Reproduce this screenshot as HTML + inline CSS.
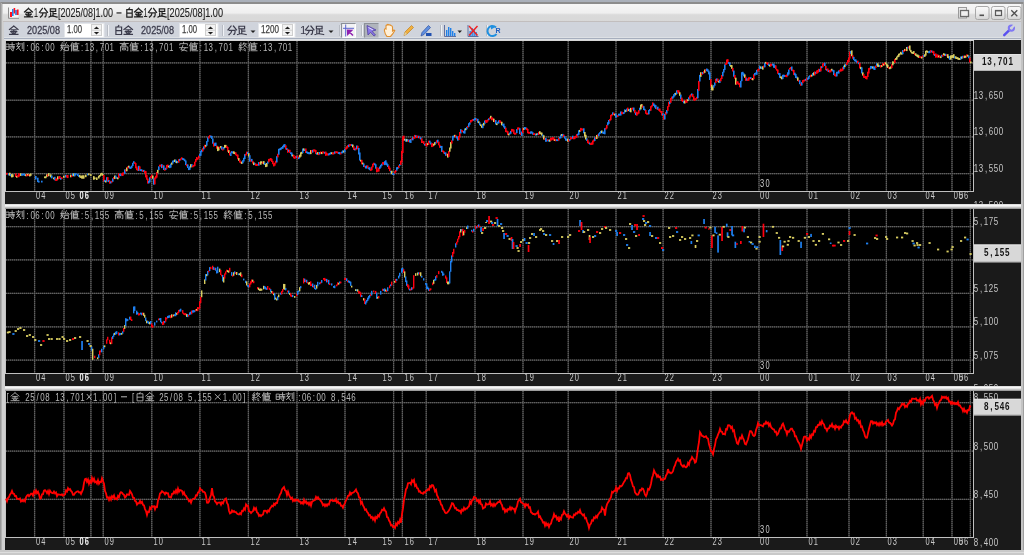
<!DOCTYPE html><html><head><meta charset="utf-8"><style>html,body{margin:0;padding:0;background:#c8c8c8;overflow:hidden}svg{display:block;will-change:transform}</style></head><body>
<svg width="1024" height="555" viewBox="0 0 1024 555" shape-rendering="crispEdges">
<defs>
<linearGradient id="tb" x1="0" y1="0" x2="0" y2="1">
<stop offset="0" stop-color="#f6f6f6"/><stop offset="0.5" stop-color="#efefef"/><stop offset="0.6" stop-color="#dadada"/><stop offset="1" stop-color="#d8d8d8"/>
</linearGradient>
<linearGradient id="btn" x1="0" y1="0" x2="0" y2="1">
<stop offset="0" stop-color="#fafafa"/><stop offset="0.5" stop-color="#ececec"/><stop offset="1" stop-color="#d4d4d4"/>
</linearGradient>
<linearGradient id="sep" x1="0" y1="0" x2="0" y2="1">
<stop offset="0" stop-color="#d8d8d8"/><stop offset="0.35" stop-color="#ffffff"/><stop offset="0.7" stop-color="#f0f0f0"/><stop offset="1" stop-color="#a8a8a8"/>
</linearGradient>
<clipPath id="cp0"><rect x="0" y="40" width="1024" height="164"/></clipPath>
<clipPath id="cp1"><rect x="0" y="209" width="1024" height="177"/></clipPath>
<clipPath id="cp2"><rect x="0" y="391" width="1024" height="159"/></clipPath>
</defs>
<rect x="0" y="0" width="1024" height="555" fill="#c8c8c8"/>
<rect x="0" y="0" width="1024" height="2" fill="#aab0ba"/>
<rect x="0" y="2" width="1024" height="2" fill="#8c8c8c"/>
<rect x="0" y="2" width="1" height="553" fill="#989898"/>
<rect x="1" y="3" width="1" height="552" fill="#b0b0b0"/>
<rect x="2" y="4" width="3" height="551" fill="#d0d0d0"/>
<rect x="1021" y="4" width="3" height="551" fill="#c4c4c4"/>
<rect x="1023" y="2" width="1" height="553" fill="#a0a0a0"/>
<rect x="0" y="550" width="1024" height="5" fill="#c8c8c8"/>
<rect x="0" y="552" width="1024" height="1" fill="#dcdcdc"/>
<rect x="3" y="4" width="1018" height="18" fill="url(#tb)"/>
<rect x="3" y="21" width="1018" height="1" fill="#c2bebe"/>
<rect x="4" y="22" width="1017" height="16" fill="#d0d4dc"/>
<rect x="4" y="37" width="1017" height="1" fill="#dde0e4"/>
<rect x="4" y="38" width="1017" height="1" fill="#a6aebd"/>
<rect x="4" y="39" width="1017" height="1" fill="#dfe2e6"/>
<g shape-rendering="auto">
<path d="M8.5 7.5V18.3H19" stroke="#909090" stroke-width="1" fill="none"/>
<rect x="9.5" y="7.5" width="9" height="10" fill="#f4f4f4"/>
<rect x="10" y="12" width="2" height="5" fill="#ff1020"/>
<rect x="12" y="9" width="1.6" height="7" fill="#1e88f0"/>
<rect x="13.6" y="8" width="1.6" height="5.5" fill="#ff1020"/>
<rect x="15.2" y="10" width="1.6" height="5" fill="#2a70d8"/>
<rect x="16.8" y="9.5" width="1.8" height="5.5" fill="#ff1020"/>
</g>
<g shape-rendering="auto">
<path transform="translate(24.00,8.00) scale(0.900,0.950)" d="M5 0.5L0.5 4.2M5 0.5L9.5 4.2M2.5 4.6H7.5M1.8 6.5H8.2M5 4.6V9.2M3 7.3L3.8 8.5M7 7.3L6.2 8.5M0.6 9.3H9.4" fill="none" stroke="#202020" stroke-width="1.32" stroke-linecap="square"/>
<text x="34" y="16.8" font-family="Liberation Sans" font-size="12" fill="#202020" stroke="#202020" stroke-width="0.12" textLength="4" lengthAdjust="spacingAndGlyphs" xml:space="preserve">1</text>
<path transform="translate(39.00,8.00) scale(0.900,0.950)" d="M3.8 0.5L0.5 4.6M6.2 0.5L9.5 4.6M2 5.2H8M8 5.2Q8 9.5 6.6 9.3M4.6 5.2Q4 8.5 1.6 9.6" fill="none" stroke="#202020" stroke-width="1.32" stroke-linecap="square"/>
<path transform="translate(48.50,8.00) scale(0.900,0.950)" d="M2 0.8H8V3.6H2ZM5 3.6V8.6M5 6H8.3M2.4 5.2V8.4M0.6 9.5Q3 7.8 9.6 9.5" fill="none" stroke="#202020" stroke-width="1.32" stroke-linecap="square"/>
<text x="58" y="16.8" font-family="Liberation Sans" font-size="12" fill="#202020" stroke="#202020" stroke-width="0.12" textLength="55" lengthAdjust="spacingAndGlyphs" xml:space="preserve">[2025/08]1.00</text>
<rect x="116.5" y="12.3" width="5" height="1.3" fill="#303030"/>
<path transform="translate(125.00,8.00) scale(0.900,0.950)" d="M5 0L4 1.5M2 1.6H8V9.5H2ZM2 5.4H8" fill="none" stroke="#202020" stroke-width="1.32" stroke-linecap="square"/>
<path transform="translate(134.00,8.00) scale(0.900,0.950)" d="M5 0.5L0.5 4.2M5 0.5L9.5 4.2M2.5 4.6H7.5M1.8 6.5H8.2M5 4.6V9.2M3 7.3L3.8 8.5M7 7.3L6.2 8.5M0.6 9.3H9.4" fill="none" stroke="#202020" stroke-width="1.32" stroke-linecap="square"/>
<text x="143.5" y="16.8" font-family="Liberation Sans" font-size="12" fill="#202020" stroke="#202020" stroke-width="0.12" textLength="4" lengthAdjust="spacingAndGlyphs" xml:space="preserve">1</text>
<path transform="translate(148.00,8.00) scale(0.900,0.950)" d="M3.8 0.5L0.5 4.6M6.2 0.5L9.5 4.6M2 5.2H8M8 5.2Q8 9.5 6.6 9.3M4.6 5.2Q4 8.5 1.6 9.6" fill="none" stroke="#202020" stroke-width="1.32" stroke-linecap="square"/>
<path transform="translate(157.50,8.00) scale(0.900,0.950)" d="M2 0.8H8V3.6H2ZM5 3.6V8.6M5 6H8.3M2.4 5.2V8.4M0.6 9.5Q3 7.8 9.6 9.5" fill="none" stroke="#202020" stroke-width="1.32" stroke-linecap="square"/>
<text x="167" y="16.8" font-family="Liberation Sans" font-size="12" fill="#202020" stroke="#202020" stroke-width="0.12" textLength="56" lengthAdjust="spacingAndGlyphs" xml:space="preserve">[2025/08]1.00</text>
</g>
<g shape-rendering="auto">
<rect x="958.5" y="7.5" width="8" height="10.5" fill="#ececec" stroke="#9a9a9a" stroke-width="1"/>
<rect x="960.5" y="10.5" width="8" height="6" fill="#f0f0f0" stroke="#6a6a6a" stroke-width="1.3"/>
<rect x="975.5" y="6.5" width="13.5" height="13" rx="2" fill="url(#btn)" stroke="#a8a8a8" stroke-width="1"/>
<rect x="991.5" y="6.5" width="13.5" height="13" rx="2" fill="url(#btn)" stroke="#a8a8a8" stroke-width="1"/>
<rect x="1007.5" y="6.5" width="13.5" height="13" rx="2" fill="url(#btn)" stroke="#a8a8a8" stroke-width="1"/>
<rect x="979.5" y="14.5" width="4.5" height="1.6" fill="#505050"/>
<rect x="995.5" y="10.5" width="6" height="5" fill="none" stroke="#5a5a5a" stroke-width="1.2"/>
<rect x="995.5" y="10.2" width="6" height="1.2" fill="#5a5a5a"/>
<path d="M1011.3 10.3L1017.3 16.3M1017.3 10.3L1011.3 16.3" stroke="#505050" stroke-width="1.3"/>
</g>
<g shape-rendering="auto">
<path transform="translate(9.00,25.50) scale(0.950,0.950)" d="M5 0.5L0.5 4.2M5 0.5L9.5 4.2M2.5 4.6H7.5M1.8 6.5H8.2M5 4.6V9.2M3 7.3L3.8 8.5M7 7.3L6.2 8.5M0.6 9.3H9.4" fill="none" stroke="#3c3c4c" stroke-width="1.26" stroke-linecap="square"/>
<text x="27" y="34.2" font-family="Liberation Sans" font-size="11.5" fill="#3c3c4c" stroke="#3c3c4c" stroke-width="0.3" textLength="33" lengthAdjust="spacingAndGlyphs">2025/08</text>
<rect x="64.5" y="23.5" width="39.5" height="14" fill="#ffffff"/>
<rect x="64.5" y="23.5" width="39.5" height="14" fill="none" stroke="#e4e6ea" stroke-width="1"/>
<text x="67.0" y="33" font-family="Liberation Sans" font-size="11" fill="#404040" stroke="#404040" stroke-width="0.25" textLength="15" lengthAdjust="spacingAndGlyphs">1.00</text>
<rect x="91.5" y="24.5" width="10" height="11" fill="#f2f2f2" stroke="#cfcfcf" stroke-width="1"/>
<line x1="91.5" y1="30.2" x2="101.5" y2="30.2" stroke="#cfcfcf" stroke-width="1"/>
<path d="M93.9 29L96.5 26.4L99.1 29Z" fill="#202020"/>
<path d="M93.9 32L96.5 34.6L99.1 32Z" fill="#202020"/>
<rect x="107" y="25" width="1" height="11" fill="#b8bcc4"/>
<rect x="108" y="25" width="1" height="11" fill="#f0f2f6"/>
<path transform="translate(114.00,25.50) scale(0.950,0.950)" d="M5 0L4 1.5M2 1.6H8V9.5H2ZM2 5.4H8" fill="none" stroke="#3c3c4c" stroke-width="1.26" stroke-linecap="square"/>
<path transform="translate(123.50,25.50) scale(0.950,0.950)" d="M5 0.5L0.5 4.2M5 0.5L9.5 4.2M2.5 4.6H7.5M1.8 6.5H8.2M5 4.6V9.2M3 7.3L3.8 8.5M7 7.3L6.2 8.5M0.6 9.3H9.4" fill="none" stroke="#3c3c4c" stroke-width="1.26" stroke-linecap="square"/>
<text x="141" y="34.2" font-family="Liberation Sans" font-size="11.5" fill="#3c3c4c" stroke="#3c3c4c" stroke-width="0.3" textLength="33" lengthAdjust="spacingAndGlyphs">2025/08</text>
<rect x="179.5" y="23.5" width="38.5" height="14" fill="#ffffff"/>
<rect x="179.5" y="23.5" width="38.5" height="14" fill="none" stroke="#e4e6ea" stroke-width="1"/>
<text x="182.0" y="33" font-family="Liberation Sans" font-size="11" fill="#404040" stroke="#404040" stroke-width="0.25" textLength="15" lengthAdjust="spacingAndGlyphs">1.00</text>
<rect x="205.5" y="24.5" width="10" height="11" fill="#f2f2f2" stroke="#cfcfcf" stroke-width="1"/>
<line x1="205.5" y1="30.2" x2="215.5" y2="30.2" stroke="#cfcfcf" stroke-width="1"/>
<path d="M207.9 29L210.5 26.4L213.1 29Z" fill="#202020"/>
<path d="M207.9 32L210.5 34.6L213.1 32Z" fill="#202020"/>
<rect x="222" y="25" width="1" height="11" fill="#b8bcc4"/>
<rect x="223" y="25" width="1" height="11" fill="#f0f2f6"/>
<path transform="translate(227.50,25.50) scale(0.950,0.950)" d="M3.8 0.5L0.5 4.6M6.2 0.5L9.5 4.6M2 5.2H8M8 5.2Q8 9.5 6.6 9.3M4.6 5.2Q4 8.5 1.6 9.6" fill="none" stroke="#3c3c4c" stroke-width="1.26" stroke-linecap="square"/>
<path transform="translate(237.00,25.50) scale(0.950,0.950)" d="M2 0.8H8V3.6H2ZM5 3.6V8.6M5 6H8.3M2.4 5.2V8.4M0.6 9.5Q3 7.8 9.6 9.5" fill="none" stroke="#3c3c4c" stroke-width="1.26" stroke-linecap="square"/>
<path d="M250.5 30.5H255.5L253 33Z" fill="#202020"/>
<rect x="258.5" y="23.5" width="36.5" height="14" fill="#ffffff"/>
<rect x="258.5" y="23.5" width="36.5" height="14" fill="none" stroke="#e4e6ea" stroke-width="1"/>
<text x="261.0" y="33" font-family="Liberation Sans" font-size="11" fill="#404040" stroke="#404040" stroke-width="0.25" textLength="18" lengthAdjust="spacingAndGlyphs">1200</text>
<rect x="282.5" y="24.5" width="10" height="11" fill="#f2f2f2" stroke="#cfcfcf" stroke-width="1"/>
<line x1="282.5" y1="30.2" x2="292.5" y2="30.2" stroke="#cfcfcf" stroke-width="1"/>
<path d="M284.9 29L287.5 26.4L290.1 29Z" fill="#202020"/>
<path d="M284.9 32L287.5 34.6L290.1 32Z" fill="#202020"/>
<text x="300" y="34.2" font-family="Liberation Sans" font-size="11.5" fill="#3c3c4c" textLength="5">1</text>
<path transform="translate(305.00,25.50) scale(0.950,0.950)" d="M3.8 0.5L0.5 4.6M6.2 0.5L9.5 4.6M2 5.2H8M8 5.2Q8 9.5 6.6 9.3M4.6 5.2Q4 8.5 1.6 9.6" fill="none" stroke="#3c3c4c" stroke-width="1.26" stroke-linecap="square"/>
<path transform="translate(314.50,25.50) scale(0.950,0.950)" d="M2 0.8H8V3.6H2ZM5 3.6V8.6M5 6H8.3M2.4 5.2V8.4M0.6 9.5Q3 7.8 9.6 9.5" fill="none" stroke="#3c3c4c" stroke-width="1.26" stroke-linecap="square"/>
<path d="M328.5 30.5H333.5L331 33Z" fill="#202020"/>
<rect x="339" y="25" width="1" height="11" fill="#b8bcc4"/>
<rect x="340" y="25" width="1" height="11" fill="#f0f2f6"/>
<rect x="341.5" y="23.5" width="14" height="14" fill="#f2f2f4"/>
<path d="M341.5 37.5V23.5H355.5" stroke="#8c9098" stroke-width="1.2" fill="none"/>
<path d="M342.5 37.5H355.5V24" stroke="#ffffff" stroke-width="1" fill="none"/>
<path d="M345.7 24.5V36.5M343 28.3H354" stroke="#5a64d0" stroke-width="1"/>
<path d="M348 30.5L353 35.5M347.6 30.2L347.8 34.2L351.6 30.4Z" stroke="#9020b0" stroke-width="1.5" fill="#9020b0"/>
<rect x="361" y="25" width="1" height="11" fill="#b8bcc4"/>
<rect x="362" y="25" width="1" height="11" fill="#f0f2f6"/>
<rect x="364.5" y="23.5" width="14" height="14" fill="#b0b4bc"/>
<path d="M364.5 37.5V23.5H378.5" stroke="#8c9098" stroke-width="1.2" fill="none"/>
<path d="M367 25.5L376 30L372 31.2L375.5 35L374 36L370.5 32.3L368 35Z" fill="#8a78e8" stroke="#5040a0" stroke-width="0.8"/>
<path d="M368.5 27.5L373 30" stroke="#e8e4ff" stroke-width="1"/>
<path d="M384.5 31Q384 28 386 29V26Q386 25 387 25.3V24.6Q388 24 389 25Q390 24.5 391 25.5Q392 25.5 392.5 27V31Q394 29.5 394.8 30.5Q393 34 390.5 36.5H387Q385 34.5 384.5 31Z" fill="#fff0d8" stroke="#e09030" stroke-width="1.1"/>
<path d="M404 35.5L405 32L411.5 25.5L413.5 27.5L407 34Z" fill="#f0b040" stroke="#c08020" stroke-width="0.7"/>
<path d="M404 35.5L405 32L407 34Z" fill="#e0d0a0"/>
<path d="M421 36L422 32.5L428.5 25.5L430.5 27.5L424 34.5Z" fill="#6090e0" stroke="#3050a0" stroke-width="0.7"/>
<path d="M426 33H431.5V36H426Z" fill="#2050b0"/>
<rect x="440" y="25" width="1" height="11" fill="#b8bcc4"/>
<rect x="441" y="25" width="1" height="11" fill="#f0f2f6"/>
<path d="M444.5 25V36.5H456" stroke="#6070a0" stroke-width="1" fill="none"/>
<rect x="446" y="30" width="1.4" height="6" fill="#2080e8"/>
<rect x="448" y="27" width="1.4" height="9" fill="#2080e8"/>
<rect x="450" y="28" width="1.4" height="8" fill="#2080e8"/>
<rect x="452" y="31" width="1.4" height="5" fill="#2080e8"/>
<rect x="454" y="33" width="1.4" height="3" fill="#2080e8"/>
<path d="M457.5 30.5H462L459.75 33Z" fill="#202020"/>
<path d="M468 25V36.5H478.5" stroke="#6070a0" stroke-width="1" fill="none"/>
<rect x="469.5" y="31" width="1.3" height="5" fill="#2080e8"/>
<rect x="471.5" y="28" width="1.3" height="8" fill="#2080e8"/>
<rect x="473.5" y="29" width="1.3" height="7" fill="#2080e8"/>
<rect x="475.5" y="32" width="1.3" height="4" fill="#2080e8"/>
<path d="M469 26L477.5 35.5M477.5 26L469 35.5" stroke="#f02020" stroke-width="1.4"/>
<rect x="486" y="25" width="1" height="11" fill="#b8bcc4"/>
<rect x="487" y="25" width="1" height="11" fill="#f0f2f6"/>
<path d="M496 27.5A5 5 0 1 0 496.5 34" stroke="#2090e0" stroke-width="2" fill="none"/>
<path d="M491 25L494.5 27.5L491 29.5Z" fill="#2090e0"/>
<text x="495.5" y="33" font-family="Liberation Sans" font-size="7" font-weight="bold" fill="#2060c0">R</text>
<path d="M1004.2 35.2L1009.3 30.1" stroke="#5a50f0" stroke-width="2.4" stroke-linecap="round"/>
<circle cx="1011.4" cy="28.1" r="2.6" fill="none" stroke="#8078f4" stroke-width="2.1"/>
<path d="M1011.6 27.9L1015.2 24.3" stroke="#d0d4dc" stroke-width="2.2"/>
</g>
<rect x="5" y="40" width="1016" height="510" fill="#1a1a1a"/>
<rect x="5" y="40" width="969" height="1" fill="#d6d6d6"/>
<rect x="6" y="41" width="967" height="150" fill="#000"/>
<rect x="5" y="41" width="1" height="151" fill="#c4c4c4"/>
<line x1="34.60" y1="41" x2="34.60" y2="191" stroke="#3a3a3a" stroke-width="1.3" shape-rendering="auto"/>
<line x1="34.60" y1="41" x2="34.60" y2="191" stroke="#606060" stroke-width="1.2" stroke-dasharray="1 1" shape-rendering="auto"/>
<line x1="64.00" y1="41" x2="64.00" y2="191" stroke="#3a3a3a" stroke-width="1.3" shape-rendering="auto"/>
<line x1="64.00" y1="41" x2="64.00" y2="191" stroke="#606060" stroke-width="1.2" stroke-dasharray="1 1" shape-rendering="auto"/>
<line x1="90.90" y1="41" x2="90.90" y2="191" stroke="#3a3a3a" stroke-width="1.3" shape-rendering="auto"/>
<line x1="90.90" y1="41" x2="90.90" y2="191" stroke="#606060" stroke-width="1.2" stroke-dasharray="1 1" shape-rendering="auto"/>
<line x1="103.25" y1="41" x2="103.25" y2="191" stroke="#3a3a3a" stroke-width="1.3" shape-rendering="auto"/>
<line x1="103.25" y1="41" x2="103.25" y2="191" stroke="#606060" stroke-width="1.2" stroke-dasharray="1 1" shape-rendering="auto"/>
<line x1="151.75" y1="41" x2="151.75" y2="191" stroke="#3a3a3a" stroke-width="1.3" shape-rendering="auto"/>
<line x1="151.75" y1="41" x2="151.75" y2="191" stroke="#606060" stroke-width="1.2" stroke-dasharray="1 1" shape-rendering="auto"/>
<line x1="199.90" y1="41" x2="199.90" y2="191" stroke="#3a3a3a" stroke-width="1.3" shape-rendering="auto"/>
<line x1="199.90" y1="41" x2="199.90" y2="191" stroke="#606060" stroke-width="1.2" stroke-dasharray="1 1" shape-rendering="auto"/>
<line x1="248.40" y1="41" x2="248.40" y2="191" stroke="#3a3a3a" stroke-width="1.3" shape-rendering="auto"/>
<line x1="248.40" y1="41" x2="248.40" y2="191" stroke="#606060" stroke-width="1.2" stroke-dasharray="1 1" shape-rendering="auto"/>
<line x1="297.00" y1="41" x2="297.00" y2="191" stroke="#3a3a3a" stroke-width="1.3" shape-rendering="auto"/>
<line x1="297.00" y1="41" x2="297.00" y2="191" stroke="#606060" stroke-width="1.2" stroke-dasharray="1 1" shape-rendering="auto"/>
<line x1="345.00" y1="41" x2="345.00" y2="191" stroke="#3a3a3a" stroke-width="1.3" shape-rendering="auto"/>
<line x1="345.00" y1="41" x2="345.00" y2="191" stroke="#606060" stroke-width="1.2" stroke-dasharray="1 1" shape-rendering="auto"/>
<line x1="393.60" y1="41" x2="393.60" y2="191" stroke="#3a3a3a" stroke-width="1.3" shape-rendering="auto"/>
<line x1="393.60" y1="41" x2="393.60" y2="191" stroke="#606060" stroke-width="1.2" stroke-dasharray="1 1" shape-rendering="auto"/>
<line x1="402.40" y1="41" x2="402.40" y2="191" stroke="#3a3a3a" stroke-width="1.3" shape-rendering="auto"/>
<line x1="402.40" y1="41" x2="402.40" y2="191" stroke="#606060" stroke-width="1.2" stroke-dasharray="1 1" shape-rendering="auto"/>
<line x1="426.25" y1="41" x2="426.25" y2="191" stroke="#3a3a3a" stroke-width="1.3" shape-rendering="auto"/>
<line x1="426.25" y1="41" x2="426.25" y2="191" stroke="#606060" stroke-width="1.2" stroke-dasharray="1 1" shape-rendering="auto"/>
<line x1="475.00" y1="41" x2="475.00" y2="191" stroke="#3a3a3a" stroke-width="1.3" shape-rendering="auto"/>
<line x1="475.00" y1="41" x2="475.00" y2="191" stroke="#606060" stroke-width="1.2" stroke-dasharray="1 1" shape-rendering="auto"/>
<line x1="523.00" y1="41" x2="523.00" y2="191" stroke="#3a3a3a" stroke-width="1.3" shape-rendering="auto"/>
<line x1="523.00" y1="41" x2="523.00" y2="191" stroke="#606060" stroke-width="1.2" stroke-dasharray="1 1" shape-rendering="auto"/>
<line x1="568.25" y1="41" x2="568.25" y2="191" stroke="#3a3a3a" stroke-width="1.3" shape-rendering="auto"/>
<line x1="568.25" y1="41" x2="568.25" y2="191" stroke="#606060" stroke-width="1.2" stroke-dasharray="1 1" shape-rendering="auto"/>
<line x1="616.00" y1="41" x2="616.00" y2="191" stroke="#3a3a3a" stroke-width="1.3" shape-rendering="auto"/>
<line x1="616.00" y1="41" x2="616.00" y2="191" stroke="#606060" stroke-width="1.2" stroke-dasharray="1 1" shape-rendering="auto"/>
<line x1="663.10" y1="41" x2="663.10" y2="191" stroke="#3a3a3a" stroke-width="1.3" shape-rendering="auto"/>
<line x1="663.10" y1="41" x2="663.10" y2="191" stroke="#606060" stroke-width="1.2" stroke-dasharray="1 1" shape-rendering="auto"/>
<line x1="711.00" y1="41" x2="711.00" y2="191" stroke="#3a3a3a" stroke-width="1.3" shape-rendering="auto"/>
<line x1="711.00" y1="41" x2="711.00" y2="191" stroke="#606060" stroke-width="1.2" stroke-dasharray="1 1" shape-rendering="auto"/>
<line x1="759.00" y1="41" x2="759.00" y2="191" stroke="#3a3a3a" stroke-width="1.3" shape-rendering="auto"/>
<line x1="759.00" y1="41" x2="759.00" y2="191" stroke="#606060" stroke-width="1.2" stroke-dasharray="1 1" shape-rendering="auto"/>
<line x1="807.00" y1="41" x2="807.00" y2="191" stroke="#3a3a3a" stroke-width="1.3" shape-rendering="auto"/>
<line x1="807.00" y1="41" x2="807.00" y2="191" stroke="#606060" stroke-width="1.2" stroke-dasharray="1 1" shape-rendering="auto"/>
<line x1="849.00" y1="41" x2="849.00" y2="191" stroke="#3a3a3a" stroke-width="1.3" shape-rendering="auto"/>
<line x1="849.00" y1="41" x2="849.00" y2="191" stroke="#606060" stroke-width="1.2" stroke-dasharray="1 1" shape-rendering="auto"/>
<line x1="886.40" y1="41" x2="886.40" y2="191" stroke="#3a3a3a" stroke-width="1.3" shape-rendering="auto"/>
<line x1="886.40" y1="41" x2="886.40" y2="191" stroke="#606060" stroke-width="1.2" stroke-dasharray="1 1" shape-rendering="auto"/>
<line x1="923.25" y1="41" x2="923.25" y2="191" stroke="#3a3a3a" stroke-width="1.3" shape-rendering="auto"/>
<line x1="923.25" y1="41" x2="923.25" y2="191" stroke="#606060" stroke-width="1.2" stroke-dasharray="1 1" shape-rendering="auto"/>
<line x1="952.00" y1="41" x2="952.00" y2="191" stroke="#3a3a3a" stroke-width="1.3" shape-rendering="auto"/>
<line x1="952.00" y1="41" x2="952.00" y2="191" stroke="#606060" stroke-width="1.2" stroke-dasharray="1 1" shape-rendering="auto"/>
<line x1="970.40" y1="41" x2="970.40" y2="191" stroke="#3a3a3a" stroke-width="1.3" shape-rendering="auto"/>
<line x1="970.40" y1="41" x2="970.40" y2="191" stroke="#606060" stroke-width="1.2" stroke-dasharray="1 1" shape-rendering="auto"/>
<line x1="6" y1="62.97" x2="973" y2="62.97" stroke="#3a3a3a" stroke-width="1.3" shape-rendering="auto"/>
<line x1="6" y1="62.97" x2="973" y2="62.97" stroke="#606060" stroke-width="1.2" stroke-dasharray="1 1" shape-rendering="auto"/>
<line x1="6" y1="100.27" x2="973" y2="100.27" stroke="#3a3a3a" stroke-width="1.3" shape-rendering="auto"/>
<line x1="6" y1="100.27" x2="973" y2="100.27" stroke="#606060" stroke-width="1.2" stroke-dasharray="1 1" shape-rendering="auto"/>
<line x1="6" y1="136.97" x2="973" y2="136.97" stroke="#3a3a3a" stroke-width="1.3" shape-rendering="auto"/>
<line x1="6" y1="136.97" x2="973" y2="136.97" stroke="#606060" stroke-width="1.2" stroke-dasharray="1 1" shape-rendering="auto"/>
<line x1="6" y1="173.70" x2="973" y2="173.70" stroke="#3a3a3a" stroke-width="1.3" shape-rendering="auto"/>
<line x1="6" y1="173.70" x2="973" y2="173.70" stroke="#606060" stroke-width="1.2" stroke-dasharray="1 1" shape-rendering="auto"/>
<rect x="973" y="41" width="1" height="151" fill="#c0c0c0"/>
<rect x="6" y="191" width="968" height="1" fill="#c0c0c0"/>
<rect x="6" y="209" width="967" height="164" fill="#000"/>
<rect x="5" y="209" width="1" height="165" fill="#c4c4c4"/>
<line x1="34.60" y1="209" x2="34.60" y2="373" stroke="#3a3a3a" stroke-width="1.3" shape-rendering="auto"/>
<line x1="34.60" y1="209" x2="34.60" y2="373" stroke="#606060" stroke-width="1.2" stroke-dasharray="1 1" shape-rendering="auto"/>
<line x1="64.00" y1="209" x2="64.00" y2="373" stroke="#3a3a3a" stroke-width="1.3" shape-rendering="auto"/>
<line x1="64.00" y1="209" x2="64.00" y2="373" stroke="#606060" stroke-width="1.2" stroke-dasharray="1 1" shape-rendering="auto"/>
<line x1="90.90" y1="209" x2="90.90" y2="373" stroke="#3a3a3a" stroke-width="1.3" shape-rendering="auto"/>
<line x1="90.90" y1="209" x2="90.90" y2="373" stroke="#606060" stroke-width="1.2" stroke-dasharray="1 1" shape-rendering="auto"/>
<line x1="103.25" y1="209" x2="103.25" y2="373" stroke="#3a3a3a" stroke-width="1.3" shape-rendering="auto"/>
<line x1="103.25" y1="209" x2="103.25" y2="373" stroke="#606060" stroke-width="1.2" stroke-dasharray="1 1" shape-rendering="auto"/>
<line x1="151.75" y1="209" x2="151.75" y2="373" stroke="#3a3a3a" stroke-width="1.3" shape-rendering="auto"/>
<line x1="151.75" y1="209" x2="151.75" y2="373" stroke="#606060" stroke-width="1.2" stroke-dasharray="1 1" shape-rendering="auto"/>
<line x1="199.90" y1="209" x2="199.90" y2="373" stroke="#3a3a3a" stroke-width="1.3" shape-rendering="auto"/>
<line x1="199.90" y1="209" x2="199.90" y2="373" stroke="#606060" stroke-width="1.2" stroke-dasharray="1 1" shape-rendering="auto"/>
<line x1="248.40" y1="209" x2="248.40" y2="373" stroke="#3a3a3a" stroke-width="1.3" shape-rendering="auto"/>
<line x1="248.40" y1="209" x2="248.40" y2="373" stroke="#606060" stroke-width="1.2" stroke-dasharray="1 1" shape-rendering="auto"/>
<line x1="297.00" y1="209" x2="297.00" y2="373" stroke="#3a3a3a" stroke-width="1.3" shape-rendering="auto"/>
<line x1="297.00" y1="209" x2="297.00" y2="373" stroke="#606060" stroke-width="1.2" stroke-dasharray="1 1" shape-rendering="auto"/>
<line x1="345.00" y1="209" x2="345.00" y2="373" stroke="#3a3a3a" stroke-width="1.3" shape-rendering="auto"/>
<line x1="345.00" y1="209" x2="345.00" y2="373" stroke="#606060" stroke-width="1.2" stroke-dasharray="1 1" shape-rendering="auto"/>
<line x1="393.60" y1="209" x2="393.60" y2="373" stroke="#3a3a3a" stroke-width="1.3" shape-rendering="auto"/>
<line x1="393.60" y1="209" x2="393.60" y2="373" stroke="#606060" stroke-width="1.2" stroke-dasharray="1 1" shape-rendering="auto"/>
<line x1="402.40" y1="209" x2="402.40" y2="373" stroke="#3a3a3a" stroke-width="1.3" shape-rendering="auto"/>
<line x1="402.40" y1="209" x2="402.40" y2="373" stroke="#606060" stroke-width="1.2" stroke-dasharray="1 1" shape-rendering="auto"/>
<line x1="426.25" y1="209" x2="426.25" y2="373" stroke="#3a3a3a" stroke-width="1.3" shape-rendering="auto"/>
<line x1="426.25" y1="209" x2="426.25" y2="373" stroke="#606060" stroke-width="1.2" stroke-dasharray="1 1" shape-rendering="auto"/>
<line x1="475.00" y1="209" x2="475.00" y2="373" stroke="#3a3a3a" stroke-width="1.3" shape-rendering="auto"/>
<line x1="475.00" y1="209" x2="475.00" y2="373" stroke="#606060" stroke-width="1.2" stroke-dasharray="1 1" shape-rendering="auto"/>
<line x1="523.00" y1="209" x2="523.00" y2="373" stroke="#3a3a3a" stroke-width="1.3" shape-rendering="auto"/>
<line x1="523.00" y1="209" x2="523.00" y2="373" stroke="#606060" stroke-width="1.2" stroke-dasharray="1 1" shape-rendering="auto"/>
<line x1="568.25" y1="209" x2="568.25" y2="373" stroke="#3a3a3a" stroke-width="1.3" shape-rendering="auto"/>
<line x1="568.25" y1="209" x2="568.25" y2="373" stroke="#606060" stroke-width="1.2" stroke-dasharray="1 1" shape-rendering="auto"/>
<line x1="616.00" y1="209" x2="616.00" y2="373" stroke="#3a3a3a" stroke-width="1.3" shape-rendering="auto"/>
<line x1="616.00" y1="209" x2="616.00" y2="373" stroke="#606060" stroke-width="1.2" stroke-dasharray="1 1" shape-rendering="auto"/>
<line x1="663.10" y1="209" x2="663.10" y2="373" stroke="#3a3a3a" stroke-width="1.3" shape-rendering="auto"/>
<line x1="663.10" y1="209" x2="663.10" y2="373" stroke="#606060" stroke-width="1.2" stroke-dasharray="1 1" shape-rendering="auto"/>
<line x1="711.00" y1="209" x2="711.00" y2="373" stroke="#3a3a3a" stroke-width="1.3" shape-rendering="auto"/>
<line x1="711.00" y1="209" x2="711.00" y2="373" stroke="#606060" stroke-width="1.2" stroke-dasharray="1 1" shape-rendering="auto"/>
<line x1="759.00" y1="209" x2="759.00" y2="373" stroke="#3a3a3a" stroke-width="1.3" shape-rendering="auto"/>
<line x1="759.00" y1="209" x2="759.00" y2="373" stroke="#606060" stroke-width="1.2" stroke-dasharray="1 1" shape-rendering="auto"/>
<line x1="807.00" y1="209" x2="807.00" y2="373" stroke="#3a3a3a" stroke-width="1.3" shape-rendering="auto"/>
<line x1="807.00" y1="209" x2="807.00" y2="373" stroke="#606060" stroke-width="1.2" stroke-dasharray="1 1" shape-rendering="auto"/>
<line x1="849.00" y1="209" x2="849.00" y2="373" stroke="#3a3a3a" stroke-width="1.3" shape-rendering="auto"/>
<line x1="849.00" y1="209" x2="849.00" y2="373" stroke="#606060" stroke-width="1.2" stroke-dasharray="1 1" shape-rendering="auto"/>
<line x1="886.40" y1="209" x2="886.40" y2="373" stroke="#3a3a3a" stroke-width="1.3" shape-rendering="auto"/>
<line x1="886.40" y1="209" x2="886.40" y2="373" stroke="#606060" stroke-width="1.2" stroke-dasharray="1 1" shape-rendering="auto"/>
<line x1="923.25" y1="209" x2="923.25" y2="373" stroke="#3a3a3a" stroke-width="1.3" shape-rendering="auto"/>
<line x1="923.25" y1="209" x2="923.25" y2="373" stroke="#606060" stroke-width="1.2" stroke-dasharray="1 1" shape-rendering="auto"/>
<line x1="952.00" y1="209" x2="952.00" y2="373" stroke="#3a3a3a" stroke-width="1.3" shape-rendering="auto"/>
<line x1="952.00" y1="209" x2="952.00" y2="373" stroke="#606060" stroke-width="1.2" stroke-dasharray="1 1" shape-rendering="auto"/>
<line x1="970.40" y1="209" x2="970.40" y2="373" stroke="#3a3a3a" stroke-width="1.3" shape-rendering="auto"/>
<line x1="970.40" y1="209" x2="970.40" y2="373" stroke="#606060" stroke-width="1.2" stroke-dasharray="1 1" shape-rendering="auto"/>
<line x1="6" y1="226.60" x2="973" y2="226.60" stroke="#3a3a3a" stroke-width="1.3" shape-rendering="auto"/>
<line x1="6" y1="226.60" x2="973" y2="226.60" stroke="#606060" stroke-width="1.2" stroke-dasharray="1 1" shape-rendering="auto"/>
<line x1="6" y1="259.90" x2="973" y2="259.90" stroke="#3a3a3a" stroke-width="1.3" shape-rendering="auto"/>
<line x1="6" y1="259.90" x2="973" y2="259.90" stroke="#606060" stroke-width="1.2" stroke-dasharray="1 1" shape-rendering="auto"/>
<line x1="6" y1="293.40" x2="973" y2="293.40" stroke="#3a3a3a" stroke-width="1.3" shape-rendering="auto"/>
<line x1="6" y1="293.40" x2="973" y2="293.40" stroke="#606060" stroke-width="1.2" stroke-dasharray="1 1" shape-rendering="auto"/>
<line x1="6" y1="326.90" x2="973" y2="326.90" stroke="#3a3a3a" stroke-width="1.3" shape-rendering="auto"/>
<line x1="6" y1="326.90" x2="973" y2="326.90" stroke="#606060" stroke-width="1.2" stroke-dasharray="1 1" shape-rendering="auto"/>
<line x1="6" y1="360.20" x2="973" y2="360.20" stroke="#3a3a3a" stroke-width="1.3" shape-rendering="auto"/>
<line x1="6" y1="360.20" x2="973" y2="360.20" stroke="#606060" stroke-width="1.2" stroke-dasharray="1 1" shape-rendering="auto"/>
<rect x="973" y="209" width="1" height="165" fill="#c0c0c0"/>
<rect x="6" y="373" width="968" height="1" fill="#c0c0c0"/>
<rect x="6" y="391" width="967" height="146" fill="#000"/>
<rect x="5" y="391" width="1" height="147" fill="#c4c4c4"/>
<line x1="34.60" y1="391" x2="34.60" y2="537" stroke="#3a3a3a" stroke-width="1.3" shape-rendering="auto"/>
<line x1="34.60" y1="391" x2="34.60" y2="537" stroke="#606060" stroke-width="1.2" stroke-dasharray="1 1" shape-rendering="auto"/>
<line x1="64.00" y1="391" x2="64.00" y2="537" stroke="#3a3a3a" stroke-width="1.3" shape-rendering="auto"/>
<line x1="64.00" y1="391" x2="64.00" y2="537" stroke="#606060" stroke-width="1.2" stroke-dasharray="1 1" shape-rendering="auto"/>
<line x1="90.90" y1="391" x2="90.90" y2="537" stroke="#3a3a3a" stroke-width="1.3" shape-rendering="auto"/>
<line x1="90.90" y1="391" x2="90.90" y2="537" stroke="#606060" stroke-width="1.2" stroke-dasharray="1 1" shape-rendering="auto"/>
<line x1="103.25" y1="391" x2="103.25" y2="537" stroke="#3a3a3a" stroke-width="1.3" shape-rendering="auto"/>
<line x1="103.25" y1="391" x2="103.25" y2="537" stroke="#606060" stroke-width="1.2" stroke-dasharray="1 1" shape-rendering="auto"/>
<line x1="151.75" y1="391" x2="151.75" y2="537" stroke="#3a3a3a" stroke-width="1.3" shape-rendering="auto"/>
<line x1="151.75" y1="391" x2="151.75" y2="537" stroke="#606060" stroke-width="1.2" stroke-dasharray="1 1" shape-rendering="auto"/>
<line x1="199.90" y1="391" x2="199.90" y2="537" stroke="#3a3a3a" stroke-width="1.3" shape-rendering="auto"/>
<line x1="199.90" y1="391" x2="199.90" y2="537" stroke="#606060" stroke-width="1.2" stroke-dasharray="1 1" shape-rendering="auto"/>
<line x1="248.40" y1="391" x2="248.40" y2="537" stroke="#3a3a3a" stroke-width="1.3" shape-rendering="auto"/>
<line x1="248.40" y1="391" x2="248.40" y2="537" stroke="#606060" stroke-width="1.2" stroke-dasharray="1 1" shape-rendering="auto"/>
<line x1="297.00" y1="391" x2="297.00" y2="537" stroke="#3a3a3a" stroke-width="1.3" shape-rendering="auto"/>
<line x1="297.00" y1="391" x2="297.00" y2="537" stroke="#606060" stroke-width="1.2" stroke-dasharray="1 1" shape-rendering="auto"/>
<line x1="345.00" y1="391" x2="345.00" y2="537" stroke="#3a3a3a" stroke-width="1.3" shape-rendering="auto"/>
<line x1="345.00" y1="391" x2="345.00" y2="537" stroke="#606060" stroke-width="1.2" stroke-dasharray="1 1" shape-rendering="auto"/>
<line x1="393.60" y1="391" x2="393.60" y2="537" stroke="#3a3a3a" stroke-width="1.3" shape-rendering="auto"/>
<line x1="393.60" y1="391" x2="393.60" y2="537" stroke="#606060" stroke-width="1.2" stroke-dasharray="1 1" shape-rendering="auto"/>
<line x1="402.40" y1="391" x2="402.40" y2="537" stroke="#3a3a3a" stroke-width="1.3" shape-rendering="auto"/>
<line x1="402.40" y1="391" x2="402.40" y2="537" stroke="#606060" stroke-width="1.2" stroke-dasharray="1 1" shape-rendering="auto"/>
<line x1="426.25" y1="391" x2="426.25" y2="537" stroke="#3a3a3a" stroke-width="1.3" shape-rendering="auto"/>
<line x1="426.25" y1="391" x2="426.25" y2="537" stroke="#606060" stroke-width="1.2" stroke-dasharray="1 1" shape-rendering="auto"/>
<line x1="475.00" y1="391" x2="475.00" y2="537" stroke="#3a3a3a" stroke-width="1.3" shape-rendering="auto"/>
<line x1="475.00" y1="391" x2="475.00" y2="537" stroke="#606060" stroke-width="1.2" stroke-dasharray="1 1" shape-rendering="auto"/>
<line x1="523.00" y1="391" x2="523.00" y2="537" stroke="#3a3a3a" stroke-width="1.3" shape-rendering="auto"/>
<line x1="523.00" y1="391" x2="523.00" y2="537" stroke="#606060" stroke-width="1.2" stroke-dasharray="1 1" shape-rendering="auto"/>
<line x1="568.25" y1="391" x2="568.25" y2="537" stroke="#3a3a3a" stroke-width="1.3" shape-rendering="auto"/>
<line x1="568.25" y1="391" x2="568.25" y2="537" stroke="#606060" stroke-width="1.2" stroke-dasharray="1 1" shape-rendering="auto"/>
<line x1="616.00" y1="391" x2="616.00" y2="537" stroke="#3a3a3a" stroke-width="1.3" shape-rendering="auto"/>
<line x1="616.00" y1="391" x2="616.00" y2="537" stroke="#606060" stroke-width="1.2" stroke-dasharray="1 1" shape-rendering="auto"/>
<line x1="663.10" y1="391" x2="663.10" y2="537" stroke="#3a3a3a" stroke-width="1.3" shape-rendering="auto"/>
<line x1="663.10" y1="391" x2="663.10" y2="537" stroke="#606060" stroke-width="1.2" stroke-dasharray="1 1" shape-rendering="auto"/>
<line x1="711.00" y1="391" x2="711.00" y2="537" stroke="#3a3a3a" stroke-width="1.3" shape-rendering="auto"/>
<line x1="711.00" y1="391" x2="711.00" y2="537" stroke="#606060" stroke-width="1.2" stroke-dasharray="1 1" shape-rendering="auto"/>
<line x1="759.00" y1="391" x2="759.00" y2="537" stroke="#3a3a3a" stroke-width="1.3" shape-rendering="auto"/>
<line x1="759.00" y1="391" x2="759.00" y2="537" stroke="#606060" stroke-width="1.2" stroke-dasharray="1 1" shape-rendering="auto"/>
<line x1="807.00" y1="391" x2="807.00" y2="537" stroke="#3a3a3a" stroke-width="1.3" shape-rendering="auto"/>
<line x1="807.00" y1="391" x2="807.00" y2="537" stroke="#606060" stroke-width="1.2" stroke-dasharray="1 1" shape-rendering="auto"/>
<line x1="849.00" y1="391" x2="849.00" y2="537" stroke="#3a3a3a" stroke-width="1.3" shape-rendering="auto"/>
<line x1="849.00" y1="391" x2="849.00" y2="537" stroke="#606060" stroke-width="1.2" stroke-dasharray="1 1" shape-rendering="auto"/>
<line x1="886.40" y1="391" x2="886.40" y2="537" stroke="#3a3a3a" stroke-width="1.3" shape-rendering="auto"/>
<line x1="886.40" y1="391" x2="886.40" y2="537" stroke="#606060" stroke-width="1.2" stroke-dasharray="1 1" shape-rendering="auto"/>
<line x1="923.25" y1="391" x2="923.25" y2="537" stroke="#3a3a3a" stroke-width="1.3" shape-rendering="auto"/>
<line x1="923.25" y1="391" x2="923.25" y2="537" stroke="#606060" stroke-width="1.2" stroke-dasharray="1 1" shape-rendering="auto"/>
<line x1="952.00" y1="391" x2="952.00" y2="537" stroke="#3a3a3a" stroke-width="1.3" shape-rendering="auto"/>
<line x1="952.00" y1="391" x2="952.00" y2="537" stroke="#606060" stroke-width="1.2" stroke-dasharray="1 1" shape-rendering="auto"/>
<line x1="970.40" y1="391" x2="970.40" y2="537" stroke="#3a3a3a" stroke-width="1.3" shape-rendering="auto"/>
<line x1="970.40" y1="391" x2="970.40" y2="537" stroke="#606060" stroke-width="1.2" stroke-dasharray="1 1" shape-rendering="auto"/>
<line x1="6" y1="402.60" x2="973" y2="402.60" stroke="#3a3a3a" stroke-width="1.3" shape-rendering="auto"/>
<line x1="6" y1="402.60" x2="973" y2="402.60" stroke="#606060" stroke-width="1.2" stroke-dasharray="1 1" shape-rendering="auto"/>
<line x1="6" y1="451.20" x2="973" y2="451.20" stroke="#3a3a3a" stroke-width="1.3" shape-rendering="auto"/>
<line x1="6" y1="451.20" x2="973" y2="451.20" stroke="#606060" stroke-width="1.2" stroke-dasharray="1 1" shape-rendering="auto"/>
<line x1="6" y1="499.40" x2="973" y2="499.40" stroke="#3a3a3a" stroke-width="1.3" shape-rendering="auto"/>
<line x1="6" y1="499.40" x2="973" y2="499.40" stroke="#606060" stroke-width="1.2" stroke-dasharray="1 1" shape-rendering="auto"/>
<rect x="973" y="391" width="1" height="147" fill="#c0c0c0"/>
<rect x="6" y="537" width="968" height="1" fill="#c0c0c0"/>
<rect x="5" y="204" width="1016" height="1" fill="#e0e0e0"/>
<rect x="5" y="205" width="1016" height="1" fill="#f6f6f6"/>
<rect x="5" y="206" width="1016" height="1" fill="#e4e4e4"/>
<rect x="5" y="207" width="1016" height="1" fill="#c4c4c4"/>
<rect x="5" y="208" width="1016" height="1" fill="#9c9c9c"/>
<rect x="5" y="386" width="1016" height="1" fill="#e0e0e0"/>
<rect x="5" y="387" width="1016" height="1" fill="#f6f6f6"/>
<rect x="5" y="388" width="1016" height="1" fill="#e4e4e4"/>
<rect x="5" y="389" width="1016" height="1" fill="#c4c4c4"/>
<rect x="5" y="390" width="1016" height="1" fill="#9c9c9c"/>
<g shape-rendering="auto">
<rect x="6.0" y="172.8" width="1.6" height="1.9" fill="#ff0010"/>
<rect x="8.0" y="173.5" width="1.6" height="1.9" fill="#1e80f0"/>
<rect x="9.0" y="172.7" width="1.6" height="2.9" fill="#d8cc60"/>
<rect x="10.0" y="174.1" width="1.6" height="2.2" fill="#1e80f0"/>
<rect x="11.0" y="174.1" width="1.6" height="3.3" fill="#d8cc60"/>
<rect x="12.0" y="174.3" width="1.6" height="2.8" fill="#d8cc60"/>
<rect x="15.0" y="173.4" width="1.6" height="3.6" fill="#ff0010"/>
<rect x="16.0" y="175.9" width="1.6" height="1.8" fill="#d8cc60"/>
<rect x="17.0" y="175.3" width="1.6" height="1.8" fill="#ff0010"/>
<rect x="18.0" y="173.2" width="1.6" height="4.0" fill="#ff0010"/>
<rect x="19.0" y="174.1" width="1.6" height="1.8" fill="#ff0010"/>
<rect x="20.0" y="173.3" width="1.6" height="2.6" fill="#d8cc60"/>
<rect x="21.0" y="173.7" width="1.6" height="1.8" fill="#1e80f0"/>
<rect x="22.0" y="173.8" width="1.6" height="1.8" fill="#1e80f0"/>
<rect x="23.0" y="173.4" width="1.6" height="1.8" fill="#1e80f0"/>
<rect x="24.0" y="174.1" width="1.6" height="1.8" fill="#1e80f0"/>
<rect x="25.0" y="174.3" width="1.6" height="1.9" fill="#d8cc60"/>
<rect x="26.0" y="174.0" width="1.6" height="2.3" fill="#ff0010"/>
<rect x="27.0" y="173.7" width="1.6" height="1.8" fill="#d8cc60"/>
<rect x="28.0" y="174.2" width="1.6" height="1.8" fill="#ff0010"/>
<rect x="29.0" y="174.2" width="1.6" height="2.3" fill="#d8cc60"/>
<rect x="30.0" y="173.5" width="1.6" height="2.3" fill="#d8cc60"/>
<rect x="35.0" y="176.0" width="1.6" height="3.5" fill="#1e80f0"/>
<rect x="37.0" y="177.7" width="1.6" height="4.4" fill="#1e80f0"/>
<rect x="38.0" y="180.8" width="1.6" height="1.8" fill="#1e80f0"/>
<rect x="41.0" y="180.7" width="1.6" height="1.8" fill="#1e80f0"/>
<rect x="44.0" y="176.4" width="1.6" height="1.8" fill="#d8cc60"/>
<rect x="45.0" y="176.4" width="1.6" height="1.8" fill="#d8cc60"/>
<rect x="46.0" y="174.3" width="1.6" height="2.6" fill="#d8cc60"/>
<rect x="47.0" y="174.3" width="1.6" height="2.1" fill="#ff0010"/>
<rect x="48.0" y="173.1" width="1.6" height="3.1" fill="#d8cc60"/>
<rect x="50.0" y="174.3" width="1.6" height="3.0" fill="#d8cc60"/>
<rect x="51.0" y="175.6" width="1.6" height="2.8" fill="#1e80f0"/>
<rect x="53.0" y="177.5" width="1.6" height="1.8" fill="#d8cc60"/>
<rect x="54.0" y="176.8" width="1.6" height="3.5" fill="#1e80f0"/>
<rect x="55.0" y="178.6" width="1.6" height="2.3" fill="#ff0010"/>
<rect x="56.0" y="178.5" width="1.6" height="2.4" fill="#ff0010"/>
<rect x="57.0" y="176.3" width="1.6" height="3.1" fill="#d8cc60"/>
<rect x="58.0" y="176.8" width="1.6" height="1.8" fill="#ff0010"/>
<rect x="59.0" y="176.0" width="1.6" height="2.8" fill="#ff0010"/>
<rect x="60.0" y="177.9" width="1.6" height="1.8" fill="#1e80f0"/>
<rect x="61.0" y="177.2" width="1.6" height="1.8" fill="#ff0010"/>
<rect x="63.0" y="175.9" width="1.6" height="1.8" fill="#d8cc60"/>
<rect x="65.0" y="174.8" width="1.6" height="2.7" fill="#1e80f0"/>
<rect x="66.0" y="175.3" width="1.6" height="2.0" fill="#ff0010"/>
<rect x="67.0" y="175.0" width="1.6" height="3.1" fill="#ff0010"/>
<rect x="70.0" y="174.7" width="1.6" height="2.6" fill="#d8cc60"/>
<rect x="71.0" y="175.2" width="1.6" height="1.8" fill="#ff0010"/>
<rect x="72.0" y="173.5" width="1.6" height="2.4" fill="#1e80f0"/>
<rect x="73.0" y="173.4" width="1.6" height="2.9" fill="#d8cc60"/>
<rect x="74.0" y="173.3" width="1.6" height="3.0" fill="#1e80f0"/>
<rect x="75.0" y="173.2" width="1.6" height="2.0" fill="#1e80f0"/>
<rect x="77.0" y="173.7" width="1.6" height="2.2" fill="#1e80f0"/>
<rect x="78.0" y="175.1" width="1.6" height="1.8" fill="#1e80f0"/>
<rect x="79.0" y="174.9" width="1.6" height="2.6" fill="#d8cc60"/>
<rect x="80.0" y="176.1" width="1.6" height="1.8" fill="#d8cc60"/>
<rect x="81.0" y="175.5" width="1.6" height="3.1" fill="#d8cc60"/>
<rect x="82.0" y="175.4" width="1.6" height="3.2" fill="#d8cc60"/>
<rect x="83.0" y="175.4" width="1.6" height="3.2" fill="#d8cc60"/>
<rect x="85.0" y="174.6" width="1.6" height="2.6" fill="#d8cc60"/>
<rect x="87.0" y="173.6" width="1.6" height="1.8" fill="#1e80f0"/>
<rect x="88.0" y="173.4" width="1.6" height="1.8" fill="#d8cc60"/>
<rect x="90.0" y="174.1" width="1.6" height="1.8" fill="#d8cc60"/>
<rect x="93.0" y="176.1" width="1.6" height="3.7" fill="#d8cc60"/>
<rect x="94.0" y="177.4" width="1.6" height="1.8" fill="#d8cc60"/>
<rect x="96.0" y="177.4" width="1.6" height="2.6" fill="#d8cc60"/>
<rect x="98.0" y="175.7" width="1.6" height="2.8" fill="#d8cc60"/>
<rect x="99.0" y="175.0" width="1.6" height="1.8" fill="#d8cc60"/>
<rect x="100.0" y="173.4" width="1.6" height="2.5" fill="#d8cc60"/>
<rect x="101.0" y="172.8" width="1.6" height="1.8" fill="#d8cc60"/>
<rect x="102.0" y="173.7" width="1.6" height="2.0" fill="#d8cc60"/>
<rect x="103.0" y="175.0" width="1.6" height="6.5" fill="#ff0010"/>
<rect x="104.0" y="179.9" width="1.6" height="2.0" fill="#1e80f0"/>
<rect x="105.0" y="180.7" width="1.6" height="1.8" fill="#d8cc60"/>
<rect x="106.0" y="177.2" width="1.6" height="4.7" fill="#1e80f0"/>
<rect x="107.0" y="177.1" width="1.6" height="4.1" fill="#ff0010"/>
<rect x="108.0" y="180.0" width="1.6" height="2.1" fill="#1e80f0"/>
<rect x="109.0" y="180.7" width="1.6" height="3.0" fill="#ff0010"/>
<rect x="110.0" y="181.5" width="1.6" height="1.9" fill="#1e80f0"/>
<rect x="111.0" y="180.8" width="1.6" height="1.8" fill="#ff0010"/>
<rect x="112.0" y="178.3" width="1.6" height="3.4" fill="#1e80f0"/>
<rect x="113.0" y="177.1" width="1.6" height="2.2" fill="#ff0010"/>
<rect x="114.0" y="175.5" width="1.6" height="3.4" fill="#d8cc60"/>
<rect x="115.0" y="175.6" width="1.6" height="1.8" fill="#1e80f0"/>
<rect x="116.0" y="177.0" width="1.6" height="1.8" fill="#1e80f0"/>
<rect x="117.0" y="177.5" width="1.6" height="1.8" fill="#d8cc60"/>
<rect x="118.0" y="173.4" width="1.6" height="4.7" fill="#ff0010"/>
<rect x="119.0" y="173.8" width="1.6" height="1.8" fill="#1e80f0"/>
<rect x="120.0" y="174.3" width="1.6" height="1.8" fill="#1e80f0"/>
<rect x="121.0" y="173.5" width="1.6" height="1.9" fill="#ff0010"/>
<rect x="122.0" y="172.5" width="1.6" height="3.5" fill="#ff0010"/>
<rect x="123.0" y="172.5" width="1.6" height="1.8" fill="#ff0010"/>
<rect x="124.0" y="169.4" width="1.6" height="4.5" fill="#1e80f0"/>
<rect x="125.0" y="169.4" width="1.6" height="2.1" fill="#ff0010"/>
<rect x="126.0" y="167.5" width="1.6" height="3.7" fill="#d8cc60"/>
<rect x="127.0" y="166.4" width="1.6" height="2.3" fill="#ff0010"/>
<rect x="128.0" y="165.7" width="1.6" height="1.8" fill="#d8cc60"/>
<rect x="129.0" y="166.4" width="1.6" height="2.2" fill="#1e80f0"/>
<rect x="130.0" y="167.1" width="1.6" height="1.8" fill="#1e80f0"/>
<rect x="131.0" y="165.6" width="1.6" height="2.3" fill="#1e80f0"/>
<rect x="132.0" y="162.8" width="1.6" height="3.3" fill="#1e80f0"/>
<rect x="133.0" y="161.2" width="1.6" height="2.2" fill="#1e80f0"/>
<rect x="134.0" y="162.1" width="1.6" height="1.8" fill="#ff0010"/>
<rect x="135.0" y="163.1" width="1.6" height="5.2" fill="#ff0010"/>
<rect x="136.0" y="166.5" width="1.6" height="3.7" fill="#ff0010"/>
<rect x="137.0" y="168.5" width="1.6" height="2.3" fill="#ff0010"/>
<rect x="138.0" y="165.8" width="1.6" height="5.1" fill="#1e80f0"/>
<rect x="139.0" y="166.4" width="1.6" height="3.9" fill="#ff0010"/>
<rect x="140.0" y="169.2" width="1.6" height="1.8" fill="#1e80f0"/>
<rect x="141.0" y="169.4" width="1.6" height="1.9" fill="#1e80f0"/>
<rect x="142.0" y="170.0" width="1.6" height="1.8" fill="#ff0010"/>
<rect x="143.0" y="169.9" width="1.6" height="1.9" fill="#1e80f0"/>
<rect x="144.0" y="170.7" width="1.6" height="2.5" fill="#ff0010"/>
<rect x="145.0" y="171.0" width="1.6" height="6.4" fill="#ff0010"/>
<rect x="146.0" y="175.1" width="1.6" height="4.6" fill="#ff0010"/>
<rect x="147.0" y="178.6" width="1.6" height="5.0" fill="#ff0010"/>
<rect x="148.0" y="180.9" width="1.6" height="2.5" fill="#1e80f0"/>
<rect x="149.0" y="177.3" width="1.6" height="5.1" fill="#1e80f0"/>
<rect x="150.0" y="176.1" width="1.6" height="2.2" fill="#ff0010"/>
<rect x="151.0" y="174.6" width="1.6" height="2.2" fill="#ff0010"/>
<rect x="152.0" y="175.6" width="1.6" height="3.2" fill="#d8cc60"/>
<rect x="153.0" y="178.4" width="1.6" height="6.3" fill="#1e80f0"/>
<rect x="154.0" y="177.5" width="1.6" height="6.9" fill="#ff0010"/>
<rect x="155.0" y="175.7" width="1.6" height="2.9" fill="#ff0010"/>
<rect x="156.0" y="172.0" width="1.6" height="5.6" fill="#ff0010"/>
<rect x="157.0" y="169.8" width="1.6" height="3.1" fill="#d8cc60"/>
<rect x="158.0" y="166.3" width="1.6" height="3.8" fill="#1e80f0"/>
<rect x="159.0" y="164.7" width="1.6" height="1.9" fill="#ff0010"/>
<rect x="160.0" y="164.7" width="1.6" height="1.8" fill="#ff0010"/>
<rect x="161.0" y="164.2" width="1.6" height="3.9" fill="#1e80f0"/>
<rect x="162.0" y="165.1" width="1.6" height="2.4" fill="#ff0010"/>
<rect x="163.0" y="165.4" width="1.6" height="4.6" fill="#1e80f0"/>
<rect x="164.0" y="168.4" width="1.6" height="2.3" fill="#ff0010"/>
<rect x="165.0" y="167.7" width="1.6" height="2.2" fill="#1e80f0"/>
<rect x="166.0" y="164.9" width="1.6" height="3.7" fill="#ff0010"/>
<rect x="167.0" y="164.6" width="1.6" height="2.2" fill="#ff0010"/>
<rect x="168.0" y="165.7" width="1.6" height="1.8" fill="#d8cc60"/>
<rect x="169.0" y="165.2" width="1.6" height="2.9" fill="#1e80f0"/>
<rect x="170.0" y="163.6" width="1.6" height="4.0" fill="#1e80f0"/>
<rect x="171.0" y="162.5" width="1.6" height="2.2" fill="#d8cc60"/>
<rect x="172.0" y="160.6" width="1.6" height="3.0" fill="#1e80f0"/>
<rect x="173.0" y="160.3" width="1.6" height="1.8" fill="#1e80f0"/>
<rect x="174.0" y="159.5" width="1.6" height="2.5" fill="#d8cc60"/>
<rect x="175.0" y="159.7" width="1.6" height="3.1" fill="#1e80f0"/>
<rect x="176.0" y="161.1" width="1.6" height="2.1" fill="#d8cc60"/>
<rect x="177.0" y="161.1" width="1.6" height="1.8" fill="#1e80f0"/>
<rect x="178.0" y="159.2" width="1.6" height="3.4" fill="#ff0010"/>
<rect x="179.0" y="158.9" width="1.6" height="1.8" fill="#1e80f0"/>
<rect x="180.0" y="158.4" width="1.6" height="1.8" fill="#ff0010"/>
<rect x="181.0" y="157.3" width="1.6" height="1.8" fill="#ff0010"/>
<rect x="182.0" y="158.1" width="1.6" height="1.8" fill="#1e80f0"/>
<rect x="183.0" y="158.5" width="1.6" height="1.8" fill="#1e80f0"/>
<rect x="184.0" y="159.4" width="1.6" height="1.9" fill="#1e80f0"/>
<rect x="185.0" y="160.5" width="1.6" height="4.6" fill="#1e80f0"/>
<rect x="186.0" y="164.1" width="1.6" height="2.2" fill="#ff0010"/>
<rect x="187.0" y="164.5" width="1.6" height="3.5" fill="#1e80f0"/>
<rect x="188.0" y="167.5" width="1.6" height="2.6" fill="#1e80f0"/>
<rect x="189.0" y="166.3" width="1.6" height="3.5" fill="#1e80f0"/>
<rect x="190.0" y="164.2" width="1.6" height="3.3" fill="#d8cc60"/>
<rect x="191.0" y="164.1" width="1.6" height="2.5" fill="#1e80f0"/>
<rect x="192.0" y="165.5" width="1.6" height="1.8" fill="#ff0010"/>
<rect x="193.0" y="164.8" width="1.6" height="1.8" fill="#ff0010"/>
<rect x="194.0" y="161.7" width="1.6" height="4.4" fill="#ff0010"/>
<rect x="195.0" y="159.0" width="1.6" height="3.1" fill="#ff0010"/>
<rect x="196.0" y="157.0" width="1.6" height="3.2" fill="#ff0010"/>
<rect x="197.0" y="157.9" width="1.6" height="1.8" fill="#ff0010"/>
<rect x="198.0" y="155.6" width="1.6" height="3.0" fill="#ff0010"/>
<rect x="199.0" y="153.9" width="1.6" height="2.5" fill="#1e80f0"/>
<rect x="200.0" y="150.9" width="1.6" height="4.9" fill="#1e80f0"/>
<rect x="201.0" y="149.6" width="1.6" height="2.6" fill="#1e80f0"/>
<rect x="202.0" y="148.2" width="1.6" height="3.2" fill="#ff0010"/>
<rect x="203.0" y="146.4" width="1.6" height="3.0" fill="#1e80f0"/>
<rect x="204.0" y="144.8" width="1.6" height="3.4" fill="#ff0010"/>
<rect x="205.0" y="144.9" width="1.6" height="1.8" fill="#d8cc60"/>
<rect x="206.0" y="141.1" width="1.6" height="4.6" fill="#1e80f0"/>
<rect x="207.0" y="137.3" width="1.6" height="4.5" fill="#1e80f0"/>
<rect x="208.0" y="136.5" width="1.6" height="2.0" fill="#ff0010"/>
<rect x="209.0" y="135.1" width="1.6" height="1.8" fill="#ff0010"/>
<rect x="210.0" y="135.6" width="1.6" height="1.8" fill="#1e80f0"/>
<rect x="211.0" y="135.9" width="1.6" height="3.0" fill="#1e80f0"/>
<rect x="212.0" y="138.5" width="1.6" height="5.2" fill="#1e80f0"/>
<rect x="213.0" y="142.4" width="1.6" height="4.2" fill="#ff0010"/>
<rect x="214.0" y="143.2" width="1.6" height="2.7" fill="#1e80f0"/>
<rect x="215.0" y="142.6" width="1.6" height="3.4" fill="#1e80f0"/>
<rect x="216.0" y="145.6" width="1.6" height="3.1" fill="#ff0010"/>
<rect x="217.0" y="146.5" width="1.6" height="4.6" fill="#d8cc60"/>
<rect x="218.0" y="147.3" width="1.6" height="3.1" fill="#d8cc60"/>
<rect x="219.0" y="146.7" width="1.6" height="2.1" fill="#ff0010"/>
<rect x="220.0" y="146.0" width="1.6" height="1.8" fill="#d8cc60"/>
<rect x="221.0" y="146.6" width="1.6" height="3.1" fill="#1e80f0"/>
<rect x="222.0" y="148.7" width="1.6" height="1.8" fill="#ff0010"/>
<rect x="223.0" y="147.1" width="1.6" height="2.4" fill="#1e80f0"/>
<rect x="224.0" y="144.9" width="1.6" height="3.1" fill="#d8cc60"/>
<rect x="225.0" y="144.9" width="1.6" height="2.2" fill="#d8cc60"/>
<rect x="226.0" y="145.8" width="1.6" height="2.2" fill="#ff0010"/>
<rect x="227.0" y="147.0" width="1.6" height="4.8" fill="#ff0010"/>
<rect x="228.0" y="150.2" width="1.6" height="2.8" fill="#d8cc60"/>
<rect x="229.0" y="151.5" width="1.6" height="3.9" fill="#ff0010"/>
<rect x="230.0" y="152.6" width="1.6" height="3.4" fill="#1e80f0"/>
<rect x="231.0" y="151.1" width="1.6" height="1.9" fill="#1e80f0"/>
<rect x="232.0" y="151.7" width="1.6" height="1.8" fill="#1e80f0"/>
<rect x="233.0" y="151.3" width="1.6" height="2.5" fill="#d8cc60"/>
<rect x="234.0" y="152.3" width="1.6" height="1.8" fill="#d8cc60"/>
<rect x="235.0" y="152.3" width="1.6" height="3.0" fill="#ff0010"/>
<rect x="236.0" y="154.4" width="1.6" height="1.8" fill="#ff0010"/>
<rect x="237.0" y="154.6" width="1.6" height="4.7" fill="#ff0010"/>
<rect x="238.0" y="158.1" width="1.6" height="2.7" fill="#d8cc60"/>
<rect x="239.0" y="159.8" width="1.6" height="2.8" fill="#ff0010"/>
<rect x="240.0" y="161.6" width="1.6" height="1.8" fill="#ff0010"/>
<rect x="241.0" y="161.6" width="1.6" height="2.3" fill="#d8cc60"/>
<rect x="242.0" y="160.2" width="1.6" height="3.1" fill="#1e80f0"/>
<rect x="243.0" y="157.8" width="1.6" height="3.7" fill="#1e80f0"/>
<rect x="244.0" y="154.2" width="1.6" height="4.8" fill="#1e80f0"/>
<rect x="245.0" y="153.8" width="1.6" height="1.8" fill="#ff0010"/>
<rect x="246.0" y="151.6" width="1.6" height="2.9" fill="#ff0010"/>
<rect x="247.0" y="152.1" width="1.6" height="1.8" fill="#1e80f0"/>
<rect x="248.0" y="153.2" width="1.6" height="3.4" fill="#d8cc60"/>
<rect x="249.0" y="155.2" width="1.6" height="6.5" fill="#1e80f0"/>
<rect x="250.0" y="159.7" width="1.6" height="1.8" fill="#ff0010"/>
<rect x="251.0" y="158.9" width="1.6" height="2.7" fill="#1e80f0"/>
<rect x="252.0" y="160.9" width="1.6" height="2.7" fill="#ff0010"/>
<rect x="253.0" y="162.4" width="1.6" height="2.7" fill="#d8cc60"/>
<rect x="254.0" y="162.9" width="1.6" height="1.8" fill="#1e80f0"/>
<rect x="255.0" y="163.5" width="1.6" height="2.3" fill="#ff0010"/>
<rect x="256.0" y="164.2" width="1.6" height="1.8" fill="#ff0010"/>
<rect x="257.0" y="163.9" width="1.6" height="1.8" fill="#ff0010"/>
<rect x="258.0" y="162.1" width="1.6" height="3.5" fill="#1e80f0"/>
<rect x="259.0" y="162.0" width="1.6" height="2.2" fill="#ff0010"/>
<rect x="260.0" y="161.3" width="1.6" height="3.4" fill="#d8cc60"/>
<rect x="261.0" y="161.4" width="1.6" height="1.8" fill="#d8cc60"/>
<rect x="262.0" y="161.9" width="1.6" height="1.8" fill="#ff0010"/>
<rect x="263.0" y="161.1" width="1.6" height="3.3" fill="#d8cc60"/>
<rect x="264.0" y="162.7" width="1.6" height="2.3" fill="#1e80f0"/>
<rect x="265.0" y="164.0" width="1.6" height="3.1" fill="#d8cc60"/>
<rect x="266.0" y="163.0" width="1.6" height="3.7" fill="#d8cc60"/>
<rect x="267.0" y="161.5" width="1.6" height="2.2" fill="#1e80f0"/>
<rect x="268.0" y="158.9" width="1.6" height="3.4" fill="#ff0010"/>
<rect x="269.0" y="158.7" width="1.6" height="2.0" fill="#ff0010"/>
<rect x="270.0" y="158.0" width="1.6" height="2.5" fill="#ff0010"/>
<rect x="271.0" y="158.8" width="1.6" height="3.2" fill="#ff0010"/>
<rect x="272.0" y="160.9" width="1.6" height="3.3" fill="#ff0010"/>
<rect x="273.0" y="163.2" width="1.6" height="3.2" fill="#ff0010"/>
<rect x="274.0" y="162.7" width="1.6" height="3.0" fill="#ff0010"/>
<rect x="275.0" y="160.7" width="1.6" height="2.7" fill="#ff0010"/>
<rect x="276.0" y="156.2" width="1.6" height="6.2" fill="#1e80f0"/>
<rect x="277.0" y="153.8" width="1.6" height="3.6" fill="#ff0010"/>
<rect x="278.0" y="148.8" width="1.6" height="5.9" fill="#1e80f0"/>
<rect x="279.0" y="148.4" width="1.6" height="1.8" fill="#1e80f0"/>
<rect x="280.0" y="147.7" width="1.6" height="2.4" fill="#1e80f0"/>
<rect x="281.0" y="147.1" width="1.6" height="1.8" fill="#1e80f0"/>
<rect x="282.0" y="145.8" width="1.6" height="2.9" fill="#1e80f0"/>
<rect x="283.0" y="144.5" width="1.6" height="2.7" fill="#1e80f0"/>
<rect x="284.0" y="144.1" width="1.6" height="3.2" fill="#1e80f0"/>
<rect x="285.0" y="145.3" width="1.6" height="4.2" fill="#ff0010"/>
<rect x="286.0" y="148.1" width="1.6" height="1.8" fill="#1e80f0"/>
<rect x="287.0" y="149.0" width="1.6" height="3.8" fill="#ff0010"/>
<rect x="288.0" y="149.9" width="1.6" height="1.9" fill="#1e80f0"/>
<rect x="289.0" y="149.8" width="1.6" height="3.1" fill="#ff0010"/>
<rect x="290.0" y="152.3" width="1.6" height="1.8" fill="#1e80f0"/>
<rect x="291.0" y="152.6" width="1.6" height="3.7" fill="#1e80f0"/>
<rect x="292.0" y="154.6" width="1.6" height="1.8" fill="#d8cc60"/>
<rect x="293.0" y="154.9" width="1.6" height="3.4" fill="#ff0010"/>
<rect x="294.0" y="157.0" width="1.6" height="1.8" fill="#ff0010"/>
<rect x="295.0" y="155.9" width="1.6" height="2.3" fill="#ff0010"/>
<rect x="296.0" y="156.3" width="1.6" height="1.8" fill="#1e80f0"/>
<rect x="297.0" y="155.6" width="1.6" height="3.0" fill="#ff0010"/>
<rect x="298.0" y="157.2" width="1.6" height="1.9" fill="#1e80f0"/>
<rect x="299.0" y="154.7" width="1.6" height="2.9" fill="#d8cc60"/>
<rect x="300.0" y="152.3" width="1.6" height="4.3" fill="#d8cc60"/>
<rect x="301.0" y="151.8" width="1.6" height="2.1" fill="#d8cc60"/>
<rect x="302.0" y="148.5" width="1.6" height="4.6" fill="#1e80f0"/>
<rect x="303.0" y="148.4" width="1.6" height="2.3" fill="#d8cc60"/>
<rect x="304.0" y="149.2" width="1.6" height="1.8" fill="#1e80f0"/>
<rect x="305.0" y="148.5" width="1.6" height="4.5" fill="#ff0010"/>
<rect x="306.0" y="151.3" width="1.6" height="1.9" fill="#1e80f0"/>
<rect x="307.0" y="152.0" width="1.6" height="1.9" fill="#1e80f0"/>
<rect x="308.0" y="152.1" width="1.6" height="2.1" fill="#1e80f0"/>
<rect x="309.0" y="152.4" width="1.6" height="1.8" fill="#1e80f0"/>
<rect x="310.0" y="150.1" width="1.6" height="4.0" fill="#d8cc60"/>
<rect x="311.0" y="150.0" width="1.6" height="2.8" fill="#ff0010"/>
<rect x="312.0" y="149.8" width="1.6" height="2.7" fill="#1e80f0"/>
<rect x="313.0" y="149.4" width="1.6" height="2.2" fill="#ff0010"/>
<rect x="314.0" y="149.5" width="1.6" height="2.1" fill="#ff0010"/>
<rect x="315.0" y="150.0" width="1.6" height="4.1" fill="#ff0010"/>
<rect x="316.0" y="152.8" width="1.6" height="1.8" fill="#1e80f0"/>
<rect x="317.0" y="152.1" width="1.6" height="2.4" fill="#d8cc60"/>
<rect x="318.0" y="152.9" width="1.6" height="2.2" fill="#ff0010"/>
<rect x="319.0" y="152.0" width="1.6" height="2.3" fill="#1e80f0"/>
<rect x="320.0" y="151.6" width="1.6" height="2.3" fill="#ff0010"/>
<rect x="321.0" y="152.0" width="1.6" height="2.1" fill="#d8cc60"/>
<rect x="322.0" y="151.4" width="1.6" height="1.8" fill="#ff0010"/>
<rect x="323.0" y="151.6" width="1.6" height="1.8" fill="#ff0010"/>
<rect x="324.0" y="151.9" width="1.6" height="1.8" fill="#1e80f0"/>
<rect x="325.0" y="151.6" width="1.6" height="4.3" fill="#ff0010"/>
<rect x="326.0" y="152.9" width="1.6" height="2.4" fill="#ff0010"/>
<rect x="327.0" y="153.7" width="1.6" height="1.8" fill="#ff0010"/>
<rect x="328.0" y="153.4" width="1.6" height="2.0" fill="#1e80f0"/>
<rect x="329.0" y="152.9" width="1.6" height="1.8" fill="#1e80f0"/>
<rect x="330.0" y="152.2" width="1.6" height="2.1" fill="#1e80f0"/>
<rect x="331.0" y="152.3" width="1.6" height="1.8" fill="#d8cc60"/>
<rect x="332.0" y="152.7" width="1.6" height="1.8" fill="#ff0010"/>
<rect x="333.0" y="152.2" width="1.6" height="2.1" fill="#ff0010"/>
<rect x="334.0" y="151.4" width="1.6" height="2.3" fill="#1e80f0"/>
<rect x="335.0" y="151.4" width="1.6" height="1.8" fill="#ff0010"/>
<rect x="336.0" y="151.3" width="1.6" height="1.8" fill="#ff0010"/>
<rect x="337.0" y="151.8" width="1.6" height="1.8" fill="#ff0010"/>
<rect x="338.0" y="152.2" width="1.6" height="1.8" fill="#1e80f0"/>
<rect x="339.0" y="152.1" width="1.6" height="2.3" fill="#1e80f0"/>
<rect x="340.0" y="152.5" width="1.6" height="1.9" fill="#ff0010"/>
<rect x="341.0" y="151.6" width="1.6" height="1.8" fill="#1e80f0"/>
<rect x="342.0" y="150.4" width="1.6" height="2.8" fill="#1e80f0"/>
<rect x="343.0" y="150.6" width="1.6" height="1.8" fill="#d8cc60"/>
<rect x="344.0" y="148.8" width="1.6" height="3.6" fill="#1e80f0"/>
<rect x="345.0" y="147.9" width="1.6" height="1.9" fill="#ff0010"/>
<rect x="346.0" y="146.2" width="1.6" height="2.7" fill="#ff0010"/>
<rect x="347.0" y="145.1" width="1.6" height="2.6" fill="#ff0010"/>
<rect x="348.0" y="144.5" width="1.6" height="2.4" fill="#1e80f0"/>
<rect x="349.0" y="144.1" width="1.6" height="1.8" fill="#ff0010"/>
<rect x="350.0" y="144.0" width="1.6" height="1.8" fill="#ff0010"/>
<rect x="351.0" y="144.2" width="1.6" height="1.8" fill="#1e80f0"/>
<rect x="352.0" y="144.6" width="1.6" height="2.8" fill="#d8cc60"/>
<rect x="353.0" y="146.3" width="1.6" height="3.7" fill="#ff0010"/>
<rect x="354.0" y="148.6" width="1.6" height="1.8" fill="#1e80f0"/>
<rect x="355.0" y="147.7" width="1.6" height="2.5" fill="#ff0010"/>
<rect x="356.0" y="145.5" width="1.6" height="3.6" fill="#1e80f0"/>
<rect x="357.0" y="145.8" width="1.6" height="3.6" fill="#ff0010"/>
<rect x="358.0" y="148.0" width="1.6" height="6.5" fill="#1e80f0"/>
<rect x="359.0" y="152.5" width="1.6" height="8.0" fill="#1e80f0"/>
<rect x="360.0" y="159.8" width="1.6" height="1.8" fill="#d8cc60"/>
<rect x="361.0" y="159.9" width="1.6" height="4.4" fill="#ff0010"/>
<rect x="362.0" y="162.6" width="1.6" height="1.8" fill="#d8cc60"/>
<rect x="363.0" y="163.5" width="1.6" height="3.5" fill="#1e80f0"/>
<rect x="364.0" y="165.4" width="1.6" height="1.9" fill="#ff0010"/>
<rect x="365.0" y="166.1" width="1.6" height="2.4" fill="#1e80f0"/>
<rect x="366.0" y="165.4" width="1.6" height="3.0" fill="#1e80f0"/>
<rect x="367.0" y="165.6" width="1.6" height="2.8" fill="#ff0010"/>
<rect x="368.0" y="167.5" width="1.6" height="1.8" fill="#1e80f0"/>
<rect x="369.0" y="167.3" width="1.6" height="2.9" fill="#1e80f0"/>
<rect x="370.0" y="168.9" width="1.6" height="2.0" fill="#ff0010"/>
<rect x="371.0" y="166.6" width="1.6" height="3.6" fill="#ff0010"/>
<rect x="372.0" y="163.7" width="1.6" height="3.6" fill="#ff0010"/>
<rect x="373.0" y="162.7" width="1.6" height="2.2" fill="#ff0010"/>
<rect x="374.0" y="163.3" width="1.6" height="2.0" fill="#1e80f0"/>
<rect x="375.0" y="164.3" width="1.6" height="4.4" fill="#1e80f0"/>
<rect x="376.0" y="167.2" width="1.6" height="5.1" fill="#ff0010"/>
<rect x="377.0" y="169.6" width="1.6" height="2.1" fill="#ff0010"/>
<rect x="378.0" y="167.7" width="1.6" height="3.8" fill="#ff0010"/>
<rect x="379.0" y="166.5" width="1.6" height="2.4" fill="#1e80f0"/>
<rect x="380.0" y="164.8" width="1.6" height="2.8" fill="#1e80f0"/>
<rect x="381.0" y="163.7" width="1.6" height="2.1" fill="#1e80f0"/>
<rect x="382.0" y="162.1" width="1.6" height="2.5" fill="#ff0010"/>
<rect x="383.0" y="162.0" width="1.6" height="2.5" fill="#ff0010"/>
<rect x="384.0" y="161.2" width="1.6" height="3.9" fill="#1e80f0"/>
<rect x="385.0" y="160.3" width="1.6" height="4.5" fill="#1e80f0"/>
<rect x="386.0" y="162.6" width="1.6" height="2.8" fill="#1e80f0"/>
<rect x="387.0" y="164.2" width="1.6" height="2.8" fill="#1e80f0"/>
<rect x="388.0" y="165.7" width="1.6" height="3.2" fill="#ff0010"/>
<rect x="389.0" y="167.7" width="1.6" height="3.5" fill="#ff0010"/>
<rect x="390.0" y="170.9" width="1.6" height="1.8" fill="#1e80f0"/>
<rect x="391.0" y="170.7" width="1.6" height="3.6" fill="#d8cc60"/>
<rect x="392.0" y="173.1" width="1.6" height="1.8" fill="#1e80f0"/>
<rect x="393.0" y="173.2" width="1.6" height="1.8" fill="#1e80f0"/>
<rect x="394.0" y="171.3" width="1.6" height="2.2" fill="#ff0010"/>
<rect x="395.0" y="170.0" width="1.6" height="2.2" fill="#ff0010"/>
<rect x="396.0" y="167.2" width="1.6" height="3.4" fill="#1e80f0"/>
<rect x="397.0" y="167.0" width="1.6" height="2.0" fill="#1e80f0"/>
<rect x="398.0" y="165.4" width="1.6" height="2.5" fill="#ff0010"/>
<rect x="399.0" y="164.1" width="1.6" height="1.8" fill="#1e80f0"/>
<rect x="400.0" y="160.7" width="1.6" height="4.3" fill="#ff0010"/>
<rect x="401.0" y="150.7" width="1.6" height="11.8" fill="#ff0010"/>
<rect x="402.0" y="136.4" width="1.6" height="16.6" fill="#ff0010"/>
<rect x="403.0" y="135.6" width="1.6" height="5.1" fill="#ff0010"/>
<rect x="404.0" y="138.8" width="1.6" height="1.8" fill="#d8cc60"/>
<rect x="405.0" y="138.8" width="1.6" height="2.9" fill="#1e80f0"/>
<rect x="406.0" y="138.9" width="1.6" height="2.7" fill="#d8cc60"/>
<rect x="407.0" y="139.2" width="1.6" height="2.1" fill="#1e80f0"/>
<rect x="408.0" y="139.8" width="1.6" height="2.3" fill="#ff0010"/>
<rect x="409.0" y="139.6" width="1.6" height="2.9" fill="#1e80f0"/>
<rect x="410.0" y="139.0" width="1.6" height="3.9" fill="#1e80f0"/>
<rect x="411.0" y="138.3" width="1.6" height="1.8" fill="#ff0010"/>
<rect x="412.0" y="137.2" width="1.6" height="3.1" fill="#1e80f0"/>
<rect x="413.0" y="137.0" width="1.6" height="1.8" fill="#ff0010"/>
<rect x="414.0" y="134.9" width="1.6" height="3.6" fill="#ff0010"/>
<rect x="415.0" y="135.3" width="1.6" height="2.0" fill="#1e80f0"/>
<rect x="416.0" y="135.6" width="1.6" height="2.5" fill="#ff0010"/>
<rect x="417.0" y="135.8" width="1.6" height="1.8" fill="#ff0010"/>
<rect x="418.0" y="135.8" width="1.6" height="2.4" fill="#1e80f0"/>
<rect x="419.0" y="136.6" width="1.6" height="1.8" fill="#ff0010"/>
<rect x="420.0" y="137.2" width="1.6" height="2.3" fill="#1e80f0"/>
<rect x="421.0" y="138.4" width="1.6" height="4.6" fill="#ff0010"/>
<rect x="422.0" y="141.2" width="1.6" height="1.8" fill="#ff0010"/>
<rect x="423.0" y="141.2" width="1.6" height="3.0" fill="#ff0010"/>
<rect x="424.0" y="143.8" width="1.6" height="1.8" fill="#1e80f0"/>
<rect x="425.0" y="143.7" width="1.6" height="2.2" fill="#ff0010"/>
<rect x="426.0" y="142.7" width="1.6" height="3.8" fill="#ff0010"/>
<rect x="427.0" y="143.2" width="1.6" height="1.8" fill="#d8cc60"/>
<rect x="428.0" y="140.7" width="1.6" height="3.8" fill="#ff0010"/>
<rect x="429.0" y="140.7" width="1.6" height="1.9" fill="#1e80f0"/>
<rect x="430.0" y="142.3" width="1.6" height="2.2" fill="#1e80f0"/>
<rect x="431.0" y="143.4" width="1.6" height="3.7" fill="#ff0010"/>
<rect x="432.0" y="143.2" width="1.6" height="3.6" fill="#ff0010"/>
<rect x="433.0" y="143.9" width="1.6" height="1.8" fill="#d8cc60"/>
<rect x="434.0" y="142.2" width="1.6" height="2.7" fill="#d8cc60"/>
<rect x="435.0" y="141.8" width="1.6" height="1.8" fill="#1e80f0"/>
<rect x="436.0" y="140.3" width="1.6" height="2.9" fill="#ff0010"/>
<rect x="437.0" y="139.7" width="1.6" height="2.8" fill="#1e80f0"/>
<rect x="438.0" y="141.6" width="1.6" height="3.7" fill="#ff0010"/>
<rect x="439.0" y="144.8" width="1.6" height="3.0" fill="#ff0010"/>
<rect x="440.0" y="146.0" width="1.6" height="1.8" fill="#1e80f0"/>
<rect x="441.0" y="145.9" width="1.6" height="6.0" fill="#1e80f0"/>
<rect x="442.0" y="150.3" width="1.6" height="1.8" fill="#ff0010"/>
<rect x="443.0" y="151.0" width="1.6" height="2.6" fill="#ff0010"/>
<rect x="444.0" y="152.3" width="1.6" height="1.8" fill="#1e80f0"/>
<rect x="445.0" y="152.5" width="1.6" height="3.3" fill="#1e80f0"/>
<rect x="446.0" y="153.6" width="1.6" height="1.8" fill="#ff0010"/>
<rect x="447.0" y="153.8" width="1.6" height="3.8" fill="#d8cc60"/>
<rect x="448.0" y="151.0" width="1.6" height="5.9" fill="#ff0010"/>
<rect x="449.0" y="147.5" width="1.6" height="4.2" fill="#d8cc60"/>
<rect x="450.0" y="142.1" width="1.6" height="6.4" fill="#d8cc60"/>
<rect x="451.0" y="140.3" width="1.6" height="3.3" fill="#ff0010"/>
<rect x="452.0" y="135.8" width="1.6" height="4.8" fill="#1e80f0"/>
<rect x="453.0" y="135.6" width="1.6" height="1.9" fill="#1e80f0"/>
<rect x="454.0" y="134.8" width="1.6" height="1.9" fill="#d8cc60"/>
<rect x="455.0" y="135.2" width="1.6" height="2.4" fill="#ff0010"/>
<rect x="456.0" y="136.0" width="1.6" height="2.5" fill="#1e80f0"/>
<rect x="457.0" y="137.1" width="1.6" height="3.6" fill="#1e80f0"/>
<rect x="458.0" y="136.0" width="1.6" height="4.0" fill="#ff0010"/>
<rect x="459.0" y="132.0" width="1.6" height="5.2" fill="#ff0010"/>
<rect x="460.0" y="129.2" width="1.6" height="4.2" fill="#1e80f0"/>
<rect x="461.0" y="129.9" width="1.6" height="1.8" fill="#ff0010"/>
<rect x="462.0" y="130.6" width="1.6" height="1.8" fill="#ff0010"/>
<rect x="463.0" y="131.0" width="1.6" height="2.3" fill="#1e80f0"/>
<rect x="464.0" y="128.5" width="1.6" height="5.1" fill="#1e80f0"/>
<rect x="465.0" y="128.2" width="1.6" height="2.0" fill="#d8cc60"/>
<rect x="466.0" y="126.9" width="1.6" height="2.4" fill="#1e80f0"/>
<rect x="467.0" y="125.9" width="1.6" height="1.8" fill="#ff0010"/>
<rect x="468.0" y="123.2" width="1.6" height="3.6" fill="#1e80f0"/>
<rect x="469.0" y="122.2" width="1.6" height="2.5" fill="#1e80f0"/>
<rect x="470.0" y="120.0" width="1.6" height="2.6" fill="#ff0010"/>
<rect x="471.0" y="119.8" width="1.6" height="1.8" fill="#ff0010"/>
<rect x="472.0" y="119.0" width="1.6" height="1.8" fill="#ff0010"/>
<rect x="473.0" y="118.9" width="1.6" height="1.8" fill="#1e80f0"/>
<rect x="474.0" y="118.2" width="1.6" height="2.0" fill="#1e80f0"/>
<rect x="475.0" y="118.0" width="1.6" height="2.2" fill="#1e80f0"/>
<rect x="476.0" y="118.9" width="1.6" height="1.8" fill="#ff0010"/>
<rect x="477.0" y="118.8" width="1.6" height="3.9" fill="#1e80f0"/>
<rect x="478.0" y="121.3" width="1.6" height="1.9" fill="#d8cc60"/>
<rect x="479.0" y="122.4" width="1.6" height="2.9" fill="#1e80f0"/>
<rect x="480.0" y="124.3" width="1.6" height="1.8" fill="#d8cc60"/>
<rect x="481.0" y="125.6" width="1.6" height="2.2" fill="#d8cc60"/>
<rect x="482.0" y="123.8" width="1.6" height="4.4" fill="#1e80f0"/>
<rect x="483.0" y="122.8" width="1.6" height="2.7" fill="#d8cc60"/>
<rect x="484.0" y="120.5" width="1.6" height="3.3" fill="#1e80f0"/>
<rect x="485.0" y="119.9" width="1.6" height="2.7" fill="#ff0010"/>
<rect x="486.0" y="120.1" width="1.6" height="2.7" fill="#ff0010"/>
<rect x="487.0" y="119.3" width="1.6" height="2.2" fill="#ff0010"/>
<rect x="488.0" y="118.3" width="1.6" height="1.8" fill="#1e80f0"/>
<rect x="489.0" y="117.4" width="1.6" height="1.8" fill="#ff0010"/>
<rect x="490.0" y="115.8" width="1.6" height="2.6" fill="#d8cc60"/>
<rect x="491.0" y="116.9" width="1.6" height="3.4" fill="#ff0010"/>
<rect x="492.0" y="117.9" width="1.6" height="2.3" fill="#ff0010"/>
<rect x="493.0" y="118.7" width="1.6" height="3.3" fill="#d8cc60"/>
<rect x="494.0" y="120.1" width="1.6" height="2.1" fill="#ff0010"/>
<rect x="495.0" y="120.1" width="1.6" height="4.4" fill="#1e80f0"/>
<rect x="496.0" y="123.3" width="1.6" height="1.8" fill="#d8cc60"/>
<rect x="497.0" y="121.8" width="1.6" height="2.0" fill="#1e80f0"/>
<rect x="498.0" y="120.4" width="1.6" height="2.9" fill="#1e80f0"/>
<rect x="499.0" y="120.0" width="1.6" height="2.4" fill="#ff0010"/>
<rect x="500.0" y="121.4" width="1.6" height="1.8" fill="#ff0010"/>
<rect x="501.0" y="121.8" width="1.6" height="3.5" fill="#d8cc60"/>
<rect x="502.0" y="123.9" width="1.6" height="1.8" fill="#1e80f0"/>
<rect x="503.0" y="123.6" width="1.6" height="3.8" fill="#1e80f0"/>
<rect x="504.0" y="126.1" width="1.6" height="2.8" fill="#1e80f0"/>
<rect x="505.0" y="127.7" width="1.6" height="4.4" fill="#ff0010"/>
<rect x="506.0" y="130.5" width="1.6" height="1.9" fill="#ff0010"/>
<rect x="507.0" y="131.2" width="1.6" height="3.9" fill="#ff0010"/>
<rect x="508.0" y="133.6" width="1.6" height="1.8" fill="#d8cc60"/>
<rect x="509.0" y="132.6" width="1.6" height="1.8" fill="#1e80f0"/>
<rect x="510.0" y="130.9" width="1.6" height="2.8" fill="#1e80f0"/>
<rect x="511.0" y="128.9" width="1.6" height="3.2" fill="#ff0010"/>
<rect x="512.0" y="129.0" width="1.6" height="2.0" fill="#ff0010"/>
<rect x="513.0" y="129.6" width="1.6" height="4.2" fill="#ff0010"/>
<rect x="514.0" y="132.9" width="1.6" height="1.8" fill="#ff0010"/>
<rect x="515.0" y="132.6" width="1.6" height="1.8" fill="#ff0010"/>
<rect x="516.0" y="129.1" width="1.6" height="4.0" fill="#1e80f0"/>
<rect x="517.0" y="127.4" width="1.6" height="2.5" fill="#ff0010"/>
<rect x="518.0" y="127.4" width="1.6" height="1.8" fill="#ff0010"/>
<rect x="519.0" y="128.2" width="1.6" height="5.9" fill="#1e80f0"/>
<rect x="520.0" y="132.6" width="1.6" height="2.6" fill="#ff0010"/>
<rect x="521.0" y="131.5" width="1.6" height="4.4" fill="#1e80f0"/>
<rect x="522.0" y="128.3" width="1.6" height="4.7" fill="#ff0010"/>
<rect x="523.0" y="128.1" width="1.6" height="1.8" fill="#d8cc60"/>
<rect x="524.0" y="127.0" width="1.6" height="2.3" fill="#1e80f0"/>
<rect x="525.0" y="127.3" width="1.6" height="2.0" fill="#1e80f0"/>
<rect x="526.0" y="127.9" width="1.6" height="2.2" fill="#ff0010"/>
<rect x="527.0" y="129.0" width="1.6" height="4.3" fill="#ff0010"/>
<rect x="528.0" y="131.9" width="1.6" height="1.8" fill="#ff0010"/>
<rect x="529.0" y="131.9" width="1.6" height="1.8" fill="#ff0010"/>
<rect x="530.0" y="131.4" width="1.6" height="2.4" fill="#1e80f0"/>
<rect x="531.0" y="131.4" width="1.6" height="1.9" fill="#1e80f0"/>
<rect x="532.0" y="132.3" width="1.6" height="2.3" fill="#1e80f0"/>
<rect x="533.0" y="133.2" width="1.6" height="1.8" fill="#ff0010"/>
<rect x="534.0" y="133.3" width="1.6" height="1.8" fill="#ff0010"/>
<rect x="535.0" y="133.8" width="1.6" height="1.8" fill="#1e80f0"/>
<rect x="536.0" y="133.4" width="1.6" height="1.8" fill="#d8cc60"/>
<rect x="537.0" y="133.2" width="1.6" height="1.8" fill="#1e80f0"/>
<rect x="538.0" y="131.8" width="1.6" height="3.3" fill="#ff0010"/>
<rect x="539.0" y="131.2" width="1.6" height="2.7" fill="#d8cc60"/>
<rect x="540.0" y="132.5" width="1.6" height="1.8" fill="#d8cc60"/>
<rect x="541.0" y="132.6" width="1.6" height="3.0" fill="#d8cc60"/>
<rect x="542.0" y="134.6" width="1.6" height="1.8" fill="#1e80f0"/>
<rect x="543.0" y="135.3" width="1.6" height="4.2" fill="#d8cc60"/>
<rect x="544.0" y="137.8" width="1.6" height="2.0" fill="#ff0010"/>
<rect x="545.0" y="137.9" width="1.6" height="3.9" fill="#1e80f0"/>
<rect x="546.0" y="139.7" width="1.6" height="1.8" fill="#1e80f0"/>
<rect x="547.0" y="139.2" width="1.6" height="1.8" fill="#ff0010"/>
<rect x="548.0" y="139.8" width="1.6" height="1.8" fill="#1e80f0"/>
<rect x="549.0" y="139.5" width="1.6" height="2.2" fill="#d8cc60"/>
<rect x="550.0" y="137.7" width="1.6" height="3.0" fill="#ff0010"/>
<rect x="551.0" y="137.6" width="1.6" height="2.7" fill="#ff0010"/>
<rect x="552.0" y="137.1" width="1.6" height="2.6" fill="#ff0010"/>
<rect x="553.0" y="137.4" width="1.6" height="3.2" fill="#ff0010"/>
<rect x="554.0" y="139.2" width="1.6" height="1.8" fill="#d8cc60"/>
<rect x="555.0" y="138.9" width="1.6" height="2.4" fill="#ff0010"/>
<rect x="556.0" y="139.2" width="1.6" height="1.8" fill="#1e80f0"/>
<rect x="557.0" y="139.3" width="1.6" height="1.8" fill="#1e80f0"/>
<rect x="558.0" y="137.7" width="1.6" height="2.9" fill="#ff0010"/>
<rect x="559.0" y="136.8" width="1.6" height="1.8" fill="#1e80f0"/>
<rect x="560.0" y="134.6" width="1.6" height="3.7" fill="#1e80f0"/>
<rect x="561.0" y="134.0" width="1.6" height="1.9" fill="#d8cc60"/>
<rect x="562.0" y="133.9" width="1.6" height="2.1" fill="#1e80f0"/>
<rect x="563.0" y="134.6" width="1.6" height="2.6" fill="#ff0010"/>
<rect x="564.0" y="136.1" width="1.6" height="2.5" fill="#1e80f0"/>
<rect x="565.0" y="138.0" width="1.6" height="2.7" fill="#1e80f0"/>
<rect x="566.0" y="138.9" width="1.6" height="1.8" fill="#1e80f0"/>
<rect x="567.0" y="138.6" width="1.6" height="3.1" fill="#d8cc60"/>
<rect x="568.0" y="139.3" width="1.6" height="2.2" fill="#ff0010"/>
<rect x="569.0" y="138.9" width="1.6" height="1.8" fill="#1e80f0"/>
<rect x="570.0" y="137.3" width="1.6" height="2.2" fill="#ff0010"/>
<rect x="571.0" y="137.0" width="1.6" height="2.1" fill="#ff0010"/>
<rect x="572.0" y="135.7" width="1.6" height="2.9" fill="#1e80f0"/>
<rect x="573.0" y="136.7" width="1.6" height="2.6" fill="#ff0010"/>
<rect x="574.0" y="136.6" width="1.6" height="2.5" fill="#ff0010"/>
<rect x="575.0" y="135.7" width="1.6" height="1.8" fill="#ff0010"/>
<rect x="576.0" y="134.1" width="1.6" height="3.6" fill="#ff0010"/>
<rect x="577.0" y="133.7" width="1.6" height="1.9" fill="#1e80f0"/>
<rect x="578.0" y="130.3" width="1.6" height="4.5" fill="#1e80f0"/>
<rect x="579.0" y="129.9" width="1.6" height="2.0" fill="#d8cc60"/>
<rect x="580.0" y="127.9" width="1.6" height="3.4" fill="#ff0010"/>
<rect x="581.0" y="128.3" width="1.6" height="1.8" fill="#ff0010"/>
<rect x="582.0" y="128.7" width="1.6" height="1.8" fill="#ff0010"/>
<rect x="583.0" y="128.3" width="1.6" height="5.0" fill="#1e80f0"/>
<rect x="584.0" y="132.0" width="1.6" height="4.6" fill="#d8cc60"/>
<rect x="585.0" y="134.8" width="1.6" height="4.7" fill="#d8cc60"/>
<rect x="586.0" y="138.3" width="1.6" height="2.6" fill="#1e80f0"/>
<rect x="587.0" y="139.6" width="1.6" height="3.6" fill="#ff0010"/>
<rect x="588.0" y="141.6" width="1.6" height="2.3" fill="#ff0010"/>
<rect x="589.0" y="142.7" width="1.6" height="1.8" fill="#1e80f0"/>
<rect x="590.0" y="143.1" width="1.6" height="1.8" fill="#ff0010"/>
<rect x="591.0" y="142.4" width="1.6" height="2.5" fill="#ff0010"/>
<rect x="592.0" y="140.5" width="1.6" height="4.0" fill="#ff0010"/>
<rect x="593.0" y="139.5" width="1.6" height="2.3" fill="#ff0010"/>
<rect x="594.0" y="137.3" width="1.6" height="3.6" fill="#1e80f0"/>
<rect x="595.0" y="137.2" width="1.6" height="1.8" fill="#ff0010"/>
<rect x="596.0" y="135.0" width="1.6" height="3.9" fill="#d8cc60"/>
<rect x="597.0" y="134.4" width="1.6" height="1.8" fill="#ff0010"/>
<rect x="598.0" y="133.4" width="1.6" height="2.6" fill="#1e80f0"/>
<rect x="599.0" y="132.2" width="1.6" height="1.8" fill="#1e80f0"/>
<rect x="600.0" y="130.9" width="1.6" height="2.4" fill="#1e80f0"/>
<rect x="601.0" y="130.5" width="1.6" height="2.6" fill="#d8cc60"/>
<rect x="602.0" y="131.7" width="1.6" height="1.8" fill="#1e80f0"/>
<rect x="603.0" y="131.6" width="1.6" height="2.4" fill="#1e80f0"/>
<rect x="604.0" y="128.2" width="1.6" height="6.1" fill="#1e80f0"/>
<rect x="605.0" y="127.8" width="1.6" height="1.8" fill="#ff0010"/>
<rect x="606.0" y="124.9" width="1.6" height="3.6" fill="#ff0010"/>
<rect x="607.0" y="122.2" width="1.6" height="3.1" fill="#1e80f0"/>
<rect x="608.0" y="120.0" width="1.6" height="3.9" fill="#1e80f0"/>
<rect x="609.0" y="119.0" width="1.6" height="2.2" fill="#ff0010"/>
<rect x="610.0" y="114.9" width="1.6" height="5.3" fill="#ff0010"/>
<rect x="611.0" y="114.1" width="1.6" height="2.1" fill="#ff0010"/>
<rect x="612.0" y="112.3" width="1.6" height="2.6" fill="#1e80f0"/>
<rect x="613.0" y="112.7" width="1.6" height="2.4" fill="#ff0010"/>
<rect x="614.0" y="113.8" width="1.6" height="1.8" fill="#d8cc60"/>
<rect x="615.0" y="113.7" width="1.6" height="4.0" fill="#1e80f0"/>
<rect x="616.0" y="115.4" width="1.6" height="1.8" fill="#1e80f0"/>
<rect x="617.0" y="115.1" width="1.6" height="1.8" fill="#ff0010"/>
<rect x="618.0" y="113.7" width="1.6" height="2.0" fill="#1e80f0"/>
<rect x="619.0" y="113.7" width="1.6" height="1.8" fill="#1e80f0"/>
<rect x="620.0" y="111.5" width="1.6" height="4.0" fill="#1e80f0"/>
<rect x="621.0" y="111.6" width="1.6" height="2.5" fill="#ff0010"/>
<rect x="622.0" y="112.2" width="1.6" height="2.0" fill="#ff0010"/>
<rect x="623.0" y="112.2" width="1.6" height="1.8" fill="#1e80f0"/>
<rect x="624.0" y="109.4" width="1.6" height="3.2" fill="#1e80f0"/>
<rect x="625.0" y="110.1" width="1.6" height="1.8" fill="#d8cc60"/>
<rect x="626.0" y="108.6" width="1.6" height="2.7" fill="#1e80f0"/>
<rect x="627.0" y="107.6" width="1.6" height="3.8" fill="#ff0010"/>
<rect x="628.0" y="109.2" width="1.6" height="1.8" fill="#d8cc60"/>
<rect x="629.0" y="108.8" width="1.6" height="3.0" fill="#1e80f0"/>
<rect x="630.0" y="107.9" width="1.6" height="4.4" fill="#d8cc60"/>
<rect x="631.0" y="107.9" width="1.6" height="1.8" fill="#ff0010"/>
<rect x="632.0" y="107.6" width="1.6" height="1.8" fill="#ff0010"/>
<rect x="633.0" y="107.6" width="1.6" height="3.7" fill="#1e80f0"/>
<rect x="634.0" y="109.9" width="1.6" height="3.4" fill="#ff0010"/>
<rect x="635.0" y="112.5" width="1.6" height="2.6" fill="#1e80f0"/>
<rect x="636.0" y="111.7" width="1.6" height="4.0" fill="#ff0010"/>
<rect x="637.0" y="112.5" width="1.6" height="1.9" fill="#ff0010"/>
<rect x="638.0" y="110.1" width="1.6" height="3.5" fill="#ff0010"/>
<rect x="639.0" y="107.7" width="1.6" height="2.8" fill="#1e80f0"/>
<rect x="640.0" y="104.6" width="1.6" height="4.8" fill="#d8cc60"/>
<rect x="641.0" y="104.1" width="1.6" height="2.5" fill="#d8cc60"/>
<rect x="642.0" y="105.6" width="1.6" height="2.1" fill="#ff0010"/>
<rect x="643.0" y="106.2" width="1.6" height="3.8" fill="#1e80f0"/>
<rect x="644.0" y="108.8" width="1.6" height="1.8" fill="#1e80f0"/>
<rect x="645.0" y="110.0" width="1.6" height="3.8" fill="#ff0010"/>
<rect x="646.0" y="112.8" width="1.6" height="1.8" fill="#ff0010"/>
<rect x="647.0" y="112.8" width="1.6" height="1.8" fill="#ff0010"/>
<rect x="648.0" y="110.1" width="1.6" height="4.2" fill="#1e80f0"/>
<rect x="649.0" y="109.1" width="1.6" height="2.0" fill="#1e80f0"/>
<rect x="650.0" y="106.2" width="1.6" height="4.5" fill="#ff0010"/>
<rect x="651.0" y="105.3" width="1.6" height="2.1" fill="#ff0010"/>
<rect x="652.0" y="102.4" width="1.6" height="3.6" fill="#ff0010"/>
<rect x="653.0" y="103.4" width="1.6" height="2.4" fill="#1e80f0"/>
<rect x="654.0" y="104.6" width="1.6" height="2.9" fill="#1e80f0"/>
<rect x="655.0" y="105.2" width="1.6" height="3.7" fill="#1e80f0"/>
<rect x="656.0" y="107.6" width="1.6" height="1.8" fill="#ff0010"/>
<rect x="657.0" y="106.7" width="1.6" height="3.0" fill="#1e80f0"/>
<rect x="658.0" y="108.9" width="1.6" height="1.8" fill="#ff0010"/>
<rect x="659.0" y="108.5" width="1.6" height="3.2" fill="#ff0010"/>
<rect x="660.0" y="110.9" width="1.6" height="1.8" fill="#ff0010"/>
<rect x="661.0" y="111.0" width="1.6" height="4.5" fill="#ff0010"/>
<rect x="662.0" y="113.5" width="1.6" height="2.1" fill="#1e80f0"/>
<rect x="663.0" y="115.0" width="1.6" height="4.7" fill="#ff0010"/>
<rect x="664.0" y="113.8" width="1.6" height="5.7" fill="#1e80f0"/>
<rect x="665.0" y="111.9" width="1.6" height="2.9" fill="#ff0010"/>
<rect x="666.0" y="110.0" width="1.6" height="3.5" fill="#1e80f0"/>
<rect x="667.0" y="106.2" width="1.6" height="4.6" fill="#ff0010"/>
<rect x="668.0" y="101.9" width="1.6" height="5.0" fill="#ff0010"/>
<rect x="669.0" y="101.2" width="1.6" height="2.9" fill="#1e80f0"/>
<rect x="670.0" y="98.1" width="1.6" height="4.7" fill="#ff0010"/>
<rect x="671.0" y="96.6" width="1.6" height="2.9" fill="#ff0010"/>
<rect x="672.0" y="96.3" width="1.6" height="2.3" fill="#1e80f0"/>
<rect x="673.0" y="94.2" width="1.6" height="3.2" fill="#1e80f0"/>
<rect x="674.0" y="93.0" width="1.6" height="3.2" fill="#1e80f0"/>
<rect x="675.0" y="92.8" width="1.6" height="2.0" fill="#d8cc60"/>
<rect x="676.0" y="90.4" width="1.6" height="3.6" fill="#1e80f0"/>
<rect x="677.0" y="90.1" width="1.6" height="2.3" fill="#ff0010"/>
<rect x="678.0" y="90.4" width="1.6" height="3.2" fill="#ff0010"/>
<rect x="679.0" y="92.3" width="1.6" height="3.5" fill="#d8cc60"/>
<rect x="680.0" y="94.6" width="1.6" height="4.3" fill="#1e80f0"/>
<rect x="681.0" y="97.6" width="1.6" height="3.6" fill="#ff0010"/>
<rect x="682.0" y="99.7" width="1.6" height="2.3" fill="#ff0010"/>
<rect x="683.0" y="100.9" width="1.6" height="2.4" fill="#1e80f0"/>
<rect x="684.0" y="100.8" width="1.6" height="2.7" fill="#d8cc60"/>
<rect x="685.0" y="100.3" width="1.6" height="2.2" fill="#ff0010"/>
<rect x="686.0" y="99.3" width="1.6" height="3.5" fill="#ff0010"/>
<rect x="687.0" y="99.3" width="1.6" height="1.8" fill="#d8cc60"/>
<rect x="688.0" y="97.3" width="1.6" height="2.5" fill="#1e80f0"/>
<rect x="689.0" y="95.5" width="1.6" height="3.1" fill="#ff0010"/>
<rect x="690.0" y="94.3" width="1.6" height="2.4" fill="#ff0010"/>
<rect x="691.0" y="93.4" width="1.6" height="2.0" fill="#1e80f0"/>
<rect x="692.0" y="94.0" width="1.6" height="3.1" fill="#ff0010"/>
<rect x="693.0" y="96.3" width="1.6" height="4.2" fill="#ff0010"/>
<rect x="694.0" y="98.4" width="1.6" height="2.5" fill="#ff0010"/>
<rect x="695.0" y="98.2" width="1.6" height="1.8" fill="#ff0010"/>
<rect x="696.0" y="96.8" width="1.6" height="2.2" fill="#ff0010"/>
<rect x="697.0" y="89.0" width="1.6" height="9.3" fill="#1e80f0"/>
<rect x="698.0" y="80.9" width="1.6" height="9.9" fill="#ff0010"/>
<rect x="699.0" y="74.9" width="1.6" height="6.6" fill="#1e80f0"/>
<rect x="700.0" y="72.2" width="1.6" height="4.6" fill="#d8cc60"/>
<rect x="701.0" y="73.2" width="1.6" height="1.8" fill="#ff0010"/>
<rect x="702.0" y="72.0" width="1.6" height="2.1" fill="#1e80f0"/>
<rect x="703.0" y="71.3" width="1.6" height="2.3" fill="#ff0010"/>
<rect x="704.0" y="69.5" width="1.6" height="3.3" fill="#d8cc60"/>
<rect x="705.0" y="69.3" width="1.6" height="1.9" fill="#ff0010"/>
<rect x="706.0" y="68.5" width="1.6" height="2.7" fill="#1e80f0"/>
<rect x="707.0" y="69.2" width="1.6" height="2.4" fill="#1e80f0"/>
<rect x="708.0" y="70.6" width="1.6" height="3.8" fill="#1e80f0"/>
<rect x="709.0" y="72.3" width="1.6" height="7.7" fill="#1e80f0"/>
<rect x="710.0" y="79.2" width="1.6" height="7.5" fill="#ff0010"/>
<rect x="711.0" y="84.7" width="1.6" height="5.7" fill="#d8cc60"/>
<rect x="712.0" y="86.5" width="1.6" height="3.9" fill="#d8cc60"/>
<rect x="713.0" y="85.1" width="1.6" height="2.6" fill="#1e80f0"/>
<rect x="714.0" y="82.4" width="1.6" height="3.3" fill="#1e80f0"/>
<rect x="715.0" y="78.8" width="1.6" height="4.1" fill="#ff0010"/>
<rect x="716.0" y="78.4" width="1.6" height="2.4" fill="#1e80f0"/>
<rect x="717.0" y="78.7" width="1.6" height="3.2" fill="#ff0010"/>
<rect x="718.0" y="80.9" width="1.6" height="1.8" fill="#d8cc60"/>
<rect x="719.0" y="79.7" width="1.6" height="3.3" fill="#1e80f0"/>
<rect x="720.0" y="78.2" width="1.6" height="3.1" fill="#ff0010"/>
<rect x="721.0" y="75.0" width="1.6" height="4.0" fill="#ff0010"/>
<rect x="722.0" y="71.8" width="1.6" height="4.5" fill="#1e80f0"/>
<rect x="723.0" y="69.0" width="1.6" height="3.5" fill="#1e80f0"/>
<rect x="724.0" y="64.4" width="1.6" height="5.5" fill="#1e80f0"/>
<rect x="725.0" y="63.2" width="1.6" height="1.8" fill="#ff0010"/>
<rect x="726.0" y="59.5" width="1.6" height="4.7" fill="#ff0010"/>
<rect x="727.0" y="59.2" width="1.6" height="3.6" fill="#ff0010"/>
<rect x="728.0" y="62.0" width="1.6" height="1.8" fill="#1e80f0"/>
<rect x="729.0" y="62.7" width="1.6" height="3.4" fill="#1e80f0"/>
<rect x="730.0" y="65.0" width="1.6" height="1.8" fill="#d8cc60"/>
<rect x="731.0" y="65.1" width="1.6" height="3.7" fill="#d8cc60"/>
<rect x="732.0" y="67.9" width="1.6" height="3.6" fill="#ff0010"/>
<rect x="733.0" y="70.6" width="1.6" height="6.1" fill="#1e80f0"/>
<rect x="734.0" y="75.0" width="1.6" height="3.7" fill="#ff0010"/>
<rect x="735.0" y="77.7" width="1.6" height="7.0" fill="#d8cc60"/>
<rect x="736.0" y="81.5" width="1.6" height="3.0" fill="#ff0010"/>
<rect x="737.0" y="81.3" width="1.6" height="2.2" fill="#ff0010"/>
<rect x="738.0" y="82.8" width="1.6" height="2.0" fill="#ff0010"/>
<rect x="739.0" y="83.1" width="1.6" height="4.2" fill="#ff0010"/>
<rect x="740.0" y="80.8" width="1.6" height="6.7" fill="#1e80f0"/>
<rect x="741.0" y="72.2" width="1.6" height="9.0" fill="#1e80f0"/>
<rect x="742.0" y="71.8" width="1.6" height="2.9" fill="#1e80f0"/>
<rect x="743.0" y="73.2" width="1.6" height="3.2" fill="#1e80f0"/>
<rect x="744.0" y="74.4" width="1.6" height="3.4" fill="#d8cc60"/>
<rect x="745.0" y="76.8" width="1.6" height="4.1" fill="#ff0010"/>
<rect x="746.0" y="78.3" width="1.6" height="2.3" fill="#1e80f0"/>
<rect x="747.0" y="78.7" width="1.6" height="2.2" fill="#ff0010"/>
<rect x="748.0" y="77.3" width="1.6" height="3.3" fill="#ff0010"/>
<rect x="749.0" y="77.3" width="1.6" height="1.8" fill="#ff0010"/>
<rect x="750.0" y="77.2" width="1.6" height="1.8" fill="#1e80f0"/>
<rect x="751.0" y="78.2" width="1.6" height="1.8" fill="#ff0010"/>
<rect x="752.0" y="78.0" width="1.6" height="2.3" fill="#d8cc60"/>
<rect x="753.0" y="74.3" width="1.6" height="4.8" fill="#ff0010"/>
<rect x="754.0" y="73.0" width="1.6" height="2.5" fill="#1e80f0"/>
<rect x="755.0" y="72.5" width="1.6" height="1.8" fill="#1e80f0"/>
<rect x="756.0" y="69.9" width="1.6" height="4.9" fill="#1e80f0"/>
<rect x="757.0" y="69.3" width="1.6" height="2.2" fill="#ff0010"/>
<rect x="758.0" y="68.4" width="1.6" height="2.0" fill="#ff0010"/>
<rect x="759.0" y="65.8" width="1.6" height="3.2" fill="#1e80f0"/>
<rect x="760.0" y="66.6" width="1.6" height="1.9" fill="#d8cc60"/>
<rect x="761.0" y="66.7" width="1.6" height="2.3" fill="#1e80f0"/>
<rect x="762.0" y="66.3" width="1.6" height="3.3" fill="#d8cc60"/>
<rect x="763.0" y="65.6" width="1.6" height="2.0" fill="#ff0010"/>
<rect x="764.0" y="63.0" width="1.6" height="4.3" fill="#1e80f0"/>
<rect x="765.0" y="61.9" width="1.6" height="1.8" fill="#d8cc60"/>
<rect x="766.0" y="62.3" width="1.6" height="1.8" fill="#ff0010"/>
<rect x="767.0" y="62.6" width="1.6" height="2.4" fill="#ff0010"/>
<rect x="768.0" y="63.7" width="1.6" height="2.2" fill="#1e80f0"/>
<rect x="769.0" y="64.8" width="1.6" height="1.8" fill="#d8cc60"/>
<rect x="770.0" y="63.7" width="1.6" height="2.7" fill="#ff0010"/>
<rect x="771.0" y="63.9" width="1.6" height="1.8" fill="#ff0010"/>
<rect x="772.0" y="63.7" width="1.6" height="1.8" fill="#1e80f0"/>
<rect x="773.0" y="63.7" width="1.6" height="4.0" fill="#1e80f0"/>
<rect x="774.0" y="65.2" width="1.6" height="2.7" fill="#1e80f0"/>
<rect x="775.0" y="65.4" width="1.6" height="3.8" fill="#ff0010"/>
<rect x="776.0" y="68.9" width="1.6" height="1.8" fill="#ff0010"/>
<rect x="777.0" y="69.6" width="1.6" height="4.2" fill="#ff0010"/>
<rect x="778.0" y="72.9" width="1.6" height="1.9" fill="#1e80f0"/>
<rect x="779.0" y="73.1" width="1.6" height="4.7" fill="#1e80f0"/>
<rect x="780.0" y="76.4" width="1.6" height="1.8" fill="#d8cc60"/>
<rect x="781.0" y="76.6" width="1.6" height="2.7" fill="#d8cc60"/>
<rect x="782.0" y="74.8" width="1.6" height="4.3" fill="#1e80f0"/>
<rect x="783.0" y="74.7" width="1.6" height="2.0" fill="#1e80f0"/>
<rect x="784.0" y="75.1" width="1.6" height="1.8" fill="#1e80f0"/>
<rect x="785.0" y="75.0" width="1.6" height="2.0" fill="#ff0010"/>
<rect x="786.0" y="74.5" width="1.6" height="2.7" fill="#ff0010"/>
<rect x="787.0" y="72.3" width="1.6" height="3.4" fill="#1e80f0"/>
<rect x="788.0" y="69.5" width="1.6" height="5.0" fill="#1e80f0"/>
<rect x="789.0" y="67.9" width="1.6" height="1.8" fill="#ff0010"/>
<rect x="790.0" y="67.0" width="1.6" height="2.1" fill="#ff0010"/>
<rect x="791.0" y="66.5" width="1.6" height="4.3" fill="#1e80f0"/>
<rect x="792.0" y="69.5" width="1.6" height="1.8" fill="#ff0010"/>
<rect x="793.0" y="70.0" width="1.6" height="4.9" fill="#ff0010"/>
<rect x="794.0" y="72.7" width="1.6" height="2.7" fill="#1e80f0"/>
<rect x="795.0" y="73.9" width="1.6" height="4.1" fill="#1e80f0"/>
<rect x="796.0" y="76.4" width="1.6" height="2.0" fill="#1e80f0"/>
<rect x="797.0" y="77.4" width="1.6" height="3.4" fill="#d8cc60"/>
<rect x="798.0" y="79.9" width="1.6" height="1.8" fill="#ff0010"/>
<rect x="799.0" y="80.3" width="1.6" height="3.9" fill="#1e80f0"/>
<rect x="800.0" y="83.6" width="1.6" height="2.2" fill="#ff0010"/>
<rect x="801.0" y="82.1" width="1.6" height="3.4" fill="#1e80f0"/>
<rect x="802.0" y="80.1" width="1.6" height="3.1" fill="#ff0010"/>
<rect x="803.0" y="79.7" width="1.6" height="1.8" fill="#ff0010"/>
<rect x="804.0" y="79.4" width="1.6" height="1.9" fill="#ff0010"/>
<rect x="805.0" y="78.8" width="1.6" height="1.8" fill="#1e80f0"/>
<rect x="806.0" y="77.9" width="1.6" height="2.6" fill="#ff0010"/>
<rect x="807.0" y="78.1" width="1.6" height="1.8" fill="#1e80f0"/>
<rect x="808.0" y="76.3" width="1.6" height="2.7" fill="#1e80f0"/>
<rect x="809.0" y="75.3" width="1.6" height="1.8" fill="#1e80f0"/>
<rect x="810.0" y="74.8" width="1.6" height="2.4" fill="#ff0010"/>
<rect x="811.0" y="74.7" width="1.6" height="1.8" fill="#d8cc60"/>
<rect x="812.0" y="73.0" width="1.6" height="2.8" fill="#1e80f0"/>
<rect x="813.0" y="72.3" width="1.6" height="3.0" fill="#d8cc60"/>
<rect x="814.0" y="71.5" width="1.6" height="3.9" fill="#ff0010"/>
<rect x="815.0" y="71.9" width="1.6" height="1.8" fill="#1e80f0"/>
<rect x="816.0" y="70.4" width="1.6" height="3.4" fill="#ff0010"/>
<rect x="817.0" y="69.9" width="1.6" height="3.2" fill="#ff0010"/>
<rect x="818.0" y="68.8" width="1.6" height="3.2" fill="#ff0010"/>
<rect x="819.0" y="69.1" width="1.6" height="2.7" fill="#1e80f0"/>
<rect x="820.0" y="66.3" width="1.6" height="5.1" fill="#ff0010"/>
<rect x="821.0" y="66.2" width="1.6" height="1.9" fill="#1e80f0"/>
<rect x="822.0" y="63.5" width="1.6" height="3.6" fill="#ff0010"/>
<rect x="823.0" y="62.9" width="1.6" height="1.8" fill="#ff0010"/>
<rect x="824.0" y="62.8" width="1.6" height="3.3" fill="#1e80f0"/>
<rect x="825.0" y="65.8" width="1.6" height="4.3" fill="#ff0010"/>
<rect x="826.0" y="68.9" width="1.6" height="1.8" fill="#1e80f0"/>
<rect x="827.0" y="68.5" width="1.6" height="3.2" fill="#ff0010"/>
<rect x="828.0" y="70.3" width="1.6" height="1.8" fill="#1e80f0"/>
<rect x="829.0" y="69.9" width="1.6" height="2.6" fill="#ff0010"/>
<rect x="830.0" y="69.5" width="1.6" height="2.7" fill="#ff0010"/>
<rect x="831.0" y="68.8" width="1.6" height="1.8" fill="#d8cc60"/>
<rect x="832.0" y="69.7" width="1.6" height="1.8" fill="#1e80f0"/>
<rect x="833.0" y="70.2" width="1.6" height="4.9" fill="#1e80f0"/>
<rect x="834.0" y="73.3" width="1.6" height="2.8" fill="#ff0010"/>
<rect x="835.0" y="74.8" width="1.6" height="1.8" fill="#ff0010"/>
<rect x="836.0" y="71.8" width="1.6" height="4.6" fill="#1e80f0"/>
<rect x="837.0" y="71.7" width="1.6" height="1.8" fill="#1e80f0"/>
<rect x="838.0" y="70.4" width="1.6" height="3.1" fill="#1e80f0"/>
<rect x="839.0" y="69.8" width="1.6" height="1.9" fill="#ff0010"/>
<rect x="840.0" y="68.6" width="1.6" height="2.9" fill="#ff0010"/>
<rect x="841.0" y="69.4" width="1.6" height="1.8" fill="#ff0010"/>
<rect x="842.0" y="67.2" width="1.6" height="3.4" fill="#ff0010"/>
<rect x="843.0" y="65.7" width="1.6" height="3.5" fill="#1e80f0"/>
<rect x="844.0" y="64.5" width="1.6" height="2.7" fill="#d8cc60"/>
<rect x="845.0" y="63.8" width="1.6" height="2.1" fill="#1e80f0"/>
<rect x="846.0" y="62.7" width="1.6" height="2.3" fill="#ff0010"/>
<rect x="847.0" y="59.9" width="1.6" height="3.0" fill="#ff0010"/>
<rect x="848.0" y="57.6" width="1.6" height="4.4" fill="#ff0010"/>
<rect x="849.0" y="51.6" width="1.6" height="7.0" fill="#ff0010"/>
<rect x="850.0" y="50.9" width="1.6" height="3.0" fill="#1e80f0"/>
<rect x="851.0" y="50.4" width="1.6" height="5.8" fill="#d8cc60"/>
<rect x="852.0" y="55.3" width="1.6" height="3.4" fill="#ff0010"/>
<rect x="853.0" y="56.9" width="1.6" height="3.2" fill="#1e80f0"/>
<rect x="854.0" y="59.5" width="1.6" height="1.8" fill="#1e80f0"/>
<rect x="855.0" y="59.4" width="1.6" height="2.3" fill="#1e80f0"/>
<rect x="856.0" y="60.9" width="1.6" height="1.8" fill="#1e80f0"/>
<rect x="857.0" y="60.7" width="1.6" height="2.5" fill="#ff0010"/>
<rect x="858.0" y="62.4" width="1.6" height="1.8" fill="#1e80f0"/>
<rect x="859.0" y="63.0" width="1.6" height="5.4" fill="#ff0010"/>
<rect x="860.0" y="66.9" width="1.6" height="2.3" fill="#d8cc60"/>
<rect x="861.0" y="67.4" width="1.6" height="6.0" fill="#1e80f0"/>
<rect x="862.0" y="72.4" width="1.6" height="3.2" fill="#d8cc60"/>
<rect x="863.0" y="74.1" width="1.6" height="3.7" fill="#ff0010"/>
<rect x="864.0" y="76.2" width="1.6" height="1.8" fill="#ff0010"/>
<rect x="865.0" y="76.0" width="1.6" height="2.9" fill="#ff0010"/>
<rect x="866.0" y="76.4" width="1.6" height="3.0" fill="#ff0010"/>
<rect x="867.0" y="71.7" width="1.6" height="5.3" fill="#ff0010"/>
<rect x="868.0" y="68.1" width="1.6" height="5.4" fill="#ff0010"/>
<rect x="869.0" y="67.7" width="1.6" height="2.1" fill="#ff0010"/>
<rect x="870.0" y="66.0" width="1.6" height="2.9" fill="#1e80f0"/>
<rect x="871.0" y="66.0" width="1.6" height="2.4" fill="#1e80f0"/>
<rect x="872.0" y="66.6" width="1.6" height="1.9" fill="#d8cc60"/>
<rect x="873.0" y="66.4" width="1.6" height="3.2" fill="#1e80f0"/>
<rect x="874.0" y="66.7" width="1.6" height="3.2" fill="#1e80f0"/>
<rect x="875.0" y="65.5" width="1.6" height="2.4" fill="#ff0010"/>
<rect x="876.0" y="63.2" width="1.6" height="2.6" fill="#1e80f0"/>
<rect x="877.0" y="63.4" width="1.6" height="3.4" fill="#d8cc60"/>
<rect x="878.0" y="64.8" width="1.6" height="2.1" fill="#d8cc60"/>
<rect x="879.0" y="65.1" width="1.6" height="1.8" fill="#1e80f0"/>
<rect x="880.0" y="65.2" width="1.6" height="2.4" fill="#ff0010"/>
<rect x="881.0" y="65.1" width="1.6" height="1.8" fill="#d8cc60"/>
<rect x="882.0" y="63.2" width="1.6" height="2.7" fill="#ff0010"/>
<rect x="883.0" y="63.7" width="1.6" height="1.8" fill="#d8cc60"/>
<rect x="884.0" y="62.3" width="1.6" height="2.6" fill="#ff0010"/>
<rect x="885.0" y="62.3" width="1.6" height="1.9" fill="#d8cc60"/>
<rect x="886.0" y="63.6" width="1.6" height="3.0" fill="#d8cc60"/>
<rect x="887.0" y="64.7" width="1.6" height="3.3" fill="#d8cc60"/>
<rect x="888.0" y="66.8" width="1.6" height="1.9" fill="#ff0010"/>
<rect x="889.0" y="67.2" width="1.6" height="2.0" fill="#d8cc60"/>
<rect x="890.0" y="66.4" width="1.6" height="2.2" fill="#d8cc60"/>
<rect x="891.0" y="64.2" width="1.6" height="3.9" fill="#ff0010"/>
<rect x="892.0" y="61.3" width="1.6" height="4.0" fill="#d8cc60"/>
<rect x="893.0" y="61.8" width="1.6" height="1.8" fill="#d8cc60"/>
<rect x="894.0" y="58.9" width="1.6" height="4.1" fill="#ff0010"/>
<rect x="895.0" y="58.1" width="1.6" height="1.8" fill="#d8cc60"/>
<rect x="896.0" y="56.6" width="1.6" height="3.0" fill="#d8cc60"/>
<rect x="897.0" y="55.4" width="1.6" height="1.9" fill="#d8cc60"/>
<rect x="898.0" y="53.7" width="1.6" height="3.1" fill="#d8cc60"/>
<rect x="899.0" y="53.4" width="1.6" height="1.8" fill="#d8cc60"/>
<rect x="900.0" y="51.8" width="1.6" height="2.2" fill="#d8cc60"/>
<rect x="901.0" y="52.9" width="1.6" height="1.8" fill="#d8cc60"/>
<rect x="902.0" y="50.0" width="1.6" height="4.2" fill="#1e80f0"/>
<rect x="903.0" y="50.2" width="1.6" height="1.8" fill="#ff0010"/>
<rect x="904.0" y="48.9" width="1.6" height="2.0" fill="#d8cc60"/>
<rect x="905.0" y="49.2" width="1.6" height="1.8" fill="#ff0010"/>
<rect x="906.0" y="47.0" width="1.6" height="4.1" fill="#d8cc60"/>
<rect x="907.0" y="46.8" width="1.6" height="1.8" fill="#1e80f0"/>
<rect x="908.0" y="46.5" width="1.6" height="1.8" fill="#ff0010"/>
<rect x="909.0" y="45.5" width="1.6" height="5.1" fill="#d8cc60"/>
<rect x="910.0" y="49.9" width="1.6" height="2.4" fill="#d8cc60"/>
<rect x="911.0" y="51.6" width="1.6" height="1.9" fill="#d8cc60"/>
<rect x="912.0" y="52.0" width="1.6" height="1.8" fill="#d8cc60"/>
<rect x="913.0" y="51.1" width="1.6" height="2.9" fill="#d8cc60"/>
<rect x="914.0" y="53.3" width="1.6" height="1.8" fill="#ff0010"/>
<rect x="915.0" y="53.4" width="1.6" height="2.4" fill="#d8cc60"/>
<rect x="916.0" y="54.6" width="1.6" height="1.9" fill="#d8cc60"/>
<rect x="917.0" y="54.6" width="1.6" height="2.7" fill="#d8cc60"/>
<rect x="918.0" y="55.4" width="1.6" height="2.4" fill="#d8cc60"/>
<rect x="919.0" y="56.1" width="1.6" height="1.8" fill="#ff0010"/>
<rect x="920.0" y="56.4" width="1.6" height="1.8" fill="#ff0010"/>
<rect x="921.0" y="56.7" width="1.6" height="1.8" fill="#d8cc60"/>
<rect x="922.0" y="55.4" width="1.6" height="1.8" fill="#ff0010"/>
<rect x="923.0" y="55.1" width="1.6" height="1.8" fill="#1e80f0"/>
<rect x="924.0" y="54.3" width="1.6" height="2.5" fill="#d8cc60"/>
<rect x="925.0" y="50.8" width="1.6" height="4.8" fill="#d8cc60"/>
<rect x="926.0" y="50.4" width="1.6" height="1.8" fill="#d8cc60"/>
<rect x="927.0" y="51.0" width="1.6" height="1.8" fill="#d8cc60"/>
<rect x="928.0" y="51.4" width="1.6" height="1.8" fill="#1e80f0"/>
<rect x="929.0" y="50.7" width="1.6" height="2.4" fill="#1e80f0"/>
<rect x="930.0" y="50.1" width="1.6" height="2.3" fill="#ff0010"/>
<rect x="931.0" y="50.6" width="1.6" height="1.8" fill="#1e80f0"/>
<rect x="932.0" y="50.8" width="1.6" height="2.2" fill="#ff0010"/>
<rect x="933.0" y="51.2" width="1.6" height="4.0" fill="#ff0010"/>
<rect x="934.0" y="54.1" width="1.6" height="1.8" fill="#1e80f0"/>
<rect x="935.0" y="53.4" width="1.6" height="4.3" fill="#ff0010"/>
<rect x="936.0" y="54.5" width="1.6" height="2.7" fill="#ff0010"/>
<rect x="937.0" y="54.5" width="1.6" height="3.2" fill="#ff0010"/>
<rect x="938.0" y="55.5" width="1.6" height="1.8" fill="#d8cc60"/>
<rect x="939.0" y="55.3" width="1.6" height="2.5" fill="#ff0010"/>
<rect x="940.0" y="56.3" width="1.6" height="1.8" fill="#d8cc60"/>
<rect x="941.0" y="54.8" width="1.6" height="2.0" fill="#1e80f0"/>
<rect x="942.0" y="54.6" width="1.6" height="2.0" fill="#ff0010"/>
<rect x="943.0" y="53.2" width="1.6" height="1.9" fill="#d8cc60"/>
<rect x="944.0" y="53.9" width="1.6" height="1.8" fill="#d8cc60"/>
<rect x="945.0" y="53.8" width="1.6" height="2.2" fill="#1e80f0"/>
<rect x="946.0" y="54.5" width="1.6" height="1.8" fill="#ff0010"/>
<rect x="947.0" y="54.2" width="1.6" height="3.8" fill="#d8cc60"/>
<rect x="948.0" y="56.2" width="1.6" height="2.2" fill="#d8cc60"/>
<rect x="949.0" y="55.9" width="1.6" height="4.0" fill="#1e80f0"/>
<rect x="950.0" y="55.4" width="1.6" height="4.2" fill="#d8cc60"/>
<rect x="951.0" y="55.3" width="1.6" height="2.7" fill="#d8cc60"/>
<rect x="952.0" y="55.1" width="1.6" height="2.7" fill="#d8cc60"/>
<rect x="953.0" y="54.2" width="1.6" height="4.0" fill="#d8cc60"/>
<rect x="954.0" y="56.5" width="1.6" height="1.9" fill="#1e80f0"/>
<rect x="955.0" y="56.3" width="1.6" height="2.4" fill="#d8cc60"/>
<rect x="956.0" y="57.2" width="1.6" height="1.8" fill="#d8cc60"/>
<rect x="957.0" y="57.2" width="1.6" height="2.3" fill="#d8cc60"/>
<rect x="958.0" y="58.0" width="1.6" height="1.9" fill="#d8cc60"/>
<rect x="959.0" y="58.0" width="1.6" height="2.0" fill="#d8cc60"/>
<rect x="960.0" y="56.5" width="1.6" height="3.0" fill="#1e80f0"/>
<rect x="961.0" y="56.5" width="1.6" height="2.2" fill="#d8cc60"/>
<rect x="962.0" y="55.8" width="1.6" height="2.5" fill="#1e80f0"/>
<rect x="963.0" y="55.8" width="1.6" height="2.0" fill="#ff0010"/>
<rect x="964.0" y="55.6" width="1.6" height="2.5" fill="#d8cc60"/>
<rect x="965.0" y="55.8" width="1.6" height="1.8" fill="#d8cc60"/>
<rect x="966.0" y="54.4" width="1.6" height="2.3" fill="#ff0010"/>
<rect x="967.0" y="54.8" width="1.6" height="1.8" fill="#d8cc60"/>
<rect x="968.0" y="55.7" width="1.6" height="2.6" fill="#1e80f0"/>
<rect x="969.0" y="57.6" width="1.6" height="4.9" fill="#ff0010"/>
<rect x="970.0" y="61.5" width="1.6" height="1.8" fill="#d8cc60"/>
<rect x="91.0" y="346.4" width="1.4" height="4.3" fill="#1e80f0"/>
<rect x="92.0" y="348.8" width="1.4" height="11.1" fill="#d8cc60"/>
<rect x="94.0" y="355.7" width="1.4" height="2.5" fill="#ff0010"/>
<rect x="97.0" y="357.3" width="1.4" height="1.9" fill="#d8cc60"/>
<rect x="98.0" y="354.3" width="1.4" height="3.6" fill="#1e80f0"/>
<rect x="99.0" y="350.6" width="1.4" height="4.6" fill="#ff0010"/>
<rect x="100.0" y="350.4" width="1.4" height="1.8" fill="#ff0010"/>
<rect x="101.0" y="348.7" width="1.4" height="3.6" fill="#1e80f0"/>
<rect x="103.0" y="345.7" width="1.4" height="3.5" fill="#1e80f0"/>
<rect x="104.0" y="345.4" width="1.4" height="1.8" fill="#d8cc60"/>
<rect x="106.0" y="339.4" width="1.4" height="4.4" fill="#ff0010"/>
<rect x="107.0" y="336.8" width="1.4" height="3.5" fill="#ff0010"/>
<rect x="109.0" y="339.8" width="1.4" height="4.0" fill="#ff0010"/>
<rect x="110.0" y="342.4" width="1.4" height="1.8" fill="#d8cc60"/>
<rect x="111.0" y="337.2" width="1.4" height="6.7" fill="#ff0010"/>
<rect x="112.0" y="335.9" width="1.4" height="3.0" fill="#1e80f0"/>
<rect x="113.0" y="333.3" width="1.4" height="3.4" fill="#1e80f0"/>
<rect x="114.0" y="332.8" width="1.4" height="2.1" fill="#d8cc60"/>
<rect x="115.0" y="331.7" width="1.4" height="2.9" fill="#1e80f0"/>
<rect x="116.0" y="331.2" width="1.4" height="2.9" fill="#1e80f0"/>
<rect x="118.0" y="332.3" width="1.4" height="3.2" fill="#ff0010"/>
<rect x="119.0" y="333.0" width="1.4" height="2.3" fill="#1e80f0"/>
<rect x="120.0" y="333.0" width="1.4" height="1.8" fill="#1e80f0"/>
<rect x="121.0" y="332.9" width="1.4" height="1.8" fill="#d8cc60"/>
<rect x="122.0" y="331.3" width="1.4" height="2.4" fill="#1e80f0"/>
<rect x="123.0" y="328.0" width="1.4" height="3.8" fill="#ff0010"/>
<rect x="124.0" y="325.1" width="1.4" height="3.7" fill="#d8cc60"/>
<rect x="125.0" y="318.2" width="1.4" height="7.9" fill="#1e80f0"/>
<rect x="126.0" y="318.7" width="1.4" height="2.7" fill="#1e80f0"/>
<rect x="127.0" y="319.1" width="1.4" height="1.8" fill="#1e80f0"/>
<rect x="129.0" y="316.7" width="1.4" height="2.9" fill="#1e80f0"/>
<rect x="130.0" y="316.6" width="1.4" height="3.5" fill="#ff0010"/>
<rect x="131.0" y="319.2" width="1.4" height="1.8" fill="#ff0010"/>
<rect x="133.0" y="306.5" width="1.4" height="6.8" fill="#1e80f0"/>
<rect x="134.0" y="306.4" width="1.4" height="4.5" fill="#1e80f0"/>
<rect x="136.0" y="310.7" width="1.4" height="4.0" fill="#1e80f0"/>
<rect x="137.0" y="312.2" width="1.4" height="2.1" fill="#1e80f0"/>
<rect x="138.0" y="313.2" width="1.4" height="2.3" fill="#ff0010"/>
<rect x="139.0" y="313.4" width="1.4" height="1.8" fill="#ff0010"/>
<rect x="140.0" y="312.6" width="1.4" height="1.8" fill="#1e80f0"/>
<rect x="141.0" y="312.8" width="1.4" height="2.5" fill="#1e80f0"/>
<rect x="142.0" y="312.7" width="1.4" height="2.0" fill="#ff0010"/>
<rect x="143.0" y="312.8" width="1.4" height="3.0" fill="#d8cc60"/>
<rect x="144.0" y="314.8" width="1.4" height="2.9" fill="#d8cc60"/>
<rect x="145.0" y="317.5" width="1.4" height="3.6" fill="#1e80f0"/>
<rect x="146.0" y="320.5" width="1.4" height="2.8" fill="#d8cc60"/>
<rect x="147.0" y="320.9" width="1.4" height="2.2" fill="#1e80f0"/>
<rect x="148.0" y="321.5" width="1.4" height="2.5" fill="#1e80f0"/>
<rect x="149.0" y="321.9" width="1.4" height="2.5" fill="#d8cc60"/>
<rect x="150.0" y="321.0" width="1.4" height="3.2" fill="#1e80f0"/>
<rect x="151.0" y="323.4" width="1.4" height="3.9" fill="#ff0010"/>
<rect x="152.0" y="325.2" width="1.4" height="2.6" fill="#ff0010"/>
<rect x="154.0" y="322.3" width="1.4" height="3.4" fill="#1e80f0"/>
<rect x="156.0" y="320.6" width="1.4" height="1.8" fill="#1e80f0"/>
<rect x="158.0" y="318.5" width="1.4" height="1.8" fill="#ff0010"/>
<rect x="159.0" y="318.3" width="1.4" height="1.8" fill="#1e80f0"/>
<rect x="160.0" y="318.0" width="1.4" height="4.2" fill="#1e80f0"/>
<rect x="161.0" y="321.6" width="1.4" height="1.8" fill="#1e80f0"/>
<rect x="162.0" y="322.0" width="1.4" height="3.1" fill="#ff0010"/>
<rect x="163.0" y="320.9" width="1.4" height="3.8" fill="#ff0010"/>
<rect x="164.0" y="321.0" width="1.4" height="1.8" fill="#1e80f0"/>
<rect x="165.0" y="317.2" width="1.4" height="4.5" fill="#ff0010"/>
<rect x="166.0" y="317.6" width="1.4" height="1.8" fill="#ff0010"/>
<rect x="167.0" y="315.9" width="1.4" height="2.3" fill="#1e80f0"/>
<rect x="168.0" y="315.5" width="1.4" height="2.5" fill="#1e80f0"/>
<rect x="169.0" y="315.3" width="1.4" height="2.3" fill="#1e80f0"/>
<rect x="170.0" y="315.3" width="1.4" height="2.9" fill="#ff0010"/>
<rect x="171.0" y="314.3" width="1.4" height="3.3" fill="#d8cc60"/>
<rect x="172.0" y="314.8" width="1.4" height="1.8" fill="#ff0010"/>
<rect x="173.0" y="314.5" width="1.4" height="1.8" fill="#d8cc60"/>
<rect x="174.0" y="314.2" width="1.4" height="1.9" fill="#1e80f0"/>
<rect x="175.0" y="312.3" width="1.4" height="3.9" fill="#1e80f0"/>
<rect x="176.0" y="313.0" width="1.4" height="1.8" fill="#d8cc60"/>
<rect x="177.0" y="311.9" width="1.4" height="2.7" fill="#ff0010"/>
<rect x="178.0" y="309.9" width="1.4" height="3.2" fill="#ff0010"/>
<rect x="179.0" y="309.6" width="1.4" height="2.0" fill="#1e80f0"/>
<rect x="180.0" y="308.7" width="1.4" height="2.8" fill="#1e80f0"/>
<rect x="182.0" y="310.1" width="1.4" height="3.4" fill="#ff0010"/>
<rect x="183.0" y="312.8" width="1.4" height="1.8" fill="#ff0010"/>
<rect x="184.0" y="313.3" width="1.4" height="1.8" fill="#ff0010"/>
<rect x="185.0" y="313.1" width="1.4" height="2.2" fill="#ff0010"/>
<rect x="186.0" y="314.1" width="1.4" height="2.8" fill="#d8cc60"/>
<rect x="187.0" y="314.3" width="1.4" height="2.8" fill="#1e80f0"/>
<rect x="188.0" y="314.6" width="1.4" height="1.8" fill="#ff0010"/>
<rect x="189.0" y="312.4" width="1.4" height="2.6" fill="#1e80f0"/>
<rect x="190.0" y="311.7" width="1.4" height="2.7" fill="#1e80f0"/>
<rect x="191.0" y="310.5" width="1.4" height="3.7" fill="#ff0010"/>
<rect x="192.0" y="310.4" width="1.4" height="2.2" fill="#1e80f0"/>
<rect x="193.0" y="310.1" width="1.4" height="2.4" fill="#1e80f0"/>
<rect x="194.0" y="310.3" width="1.4" height="1.8" fill="#1e80f0"/>
<rect x="195.0" y="309.2" width="1.4" height="2.0" fill="#ff0010"/>
<rect x="196.0" y="308.9" width="1.4" height="1.8" fill="#d8cc60"/>
<rect x="197.0" y="307.0" width="1.4" height="4.2" fill="#ff0010"/>
<rect x="198.0" y="307.3" width="1.4" height="1.8" fill="#ff0010"/>
<rect x="199.0" y="301.3" width="1.4" height="7.4" fill="#ff0010"/>
<rect x="200.0" y="296.6" width="1.4" height="6.5" fill="#ff0010"/>
<rect x="201.0" y="290.4" width="1.4" height="6.8" fill="#d8cc60"/>
<rect x="204.0" y="279.4" width="1.4" height="4.6" fill="#d8cc60"/>
<rect x="205.0" y="274.1" width="1.4" height="6.4" fill="#1e80f0"/>
<rect x="206.0" y="274.1" width="1.4" height="2.1" fill="#d8cc60"/>
<rect x="207.0" y="271.1" width="1.4" height="4.3" fill="#1e80f0"/>
<rect x="208.0" y="270.5" width="1.4" height="1.8" fill="#ff0010"/>
<rect x="209.0" y="267.1" width="1.4" height="3.9" fill="#1e80f0"/>
<rect x="210.0" y="266.8" width="1.4" height="2.3" fill="#ff0010"/>
<rect x="212.0" y="265.7" width="1.4" height="3.9" fill="#ff0010"/>
<rect x="213.0" y="267.1" width="1.4" height="2.8" fill="#1e80f0"/>
<rect x="214.0" y="268.3" width="1.4" height="1.8" fill="#ff0010"/>
<rect x="215.0" y="267.7" width="1.4" height="3.0" fill="#1e80f0"/>
<rect x="216.0" y="270.3" width="1.4" height="3.2" fill="#1e80f0"/>
<rect x="217.0" y="266.7" width="1.4" height="6.4" fill="#1e80f0"/>
<rect x="219.0" y="268.6" width="1.4" height="3.5" fill="#d8cc60"/>
<rect x="220.0" y="269.9" width="1.4" height="5.1" fill="#ff0010"/>
<rect x="221.0" y="274.6" width="1.4" height="1.8" fill="#ff0010"/>
<rect x="222.0" y="275.0" width="1.4" height="6.4" fill="#1e80f0"/>
<rect x="223.0" y="277.1" width="1.4" height="5.4" fill="#d8cc60"/>
<rect x="224.0" y="273.4" width="1.4" height="5.2" fill="#ff0010"/>
<rect x="225.0" y="271.4" width="1.4" height="3.1" fill="#ff0010"/>
<rect x="226.0" y="269.7" width="1.4" height="2.1" fill="#ff0010"/>
<rect x="227.0" y="270.2" width="1.4" height="2.0" fill="#d8cc60"/>
<rect x="228.0" y="270.7" width="1.4" height="2.0" fill="#d8cc60"/>
<rect x="229.0" y="267.8" width="1.4" height="3.9" fill="#ff0010"/>
<rect x="231.0" y="272.1" width="1.4" height="3.7" fill="#1e80f0"/>
<rect x="232.0" y="274.8" width="1.4" height="1.8" fill="#ff0010"/>
<rect x="233.0" y="272.3" width="1.4" height="3.4" fill="#d8cc60"/>
<rect x="234.0" y="271.4" width="1.4" height="2.4" fill="#1e80f0"/>
<rect x="235.0" y="272.3" width="1.4" height="1.8" fill="#ff0010"/>
<rect x="236.0" y="272.0" width="1.4" height="2.9" fill="#d8cc60"/>
<rect x="238.0" y="273.4" width="1.4" height="1.8" fill="#1e80f0"/>
<rect x="239.0" y="273.3" width="1.4" height="1.8" fill="#d8cc60"/>
<rect x="240.0" y="272.3" width="1.4" height="3.9" fill="#d8cc60"/>
<rect x="241.0" y="274.4" width="1.4" height="2.8" fill="#ff0010"/>
<rect x="243.0" y="278.6" width="1.4" height="1.8" fill="#1e80f0"/>
<rect x="245.0" y="280.7" width="1.4" height="2.4" fill="#1e80f0"/>
<rect x="246.0" y="281.4" width="1.4" height="4.1" fill="#d8cc60"/>
<rect x="247.0" y="284.9" width="1.4" height="1.8" fill="#1e80f0"/>
<rect x="248.0" y="285.4" width="1.4" height="1.8" fill="#1e80f0"/>
<rect x="249.0" y="283.4" width="1.4" height="3.9" fill="#ff0010"/>
<rect x="250.0" y="281.3" width="1.4" height="3.3" fill="#ff0010"/>
<rect x="251.0" y="279.5" width="1.4" height="3.7" fill="#ff0010"/>
<rect x="252.0" y="279.7" width="1.4" height="2.1" fill="#d8cc60"/>
<rect x="253.0" y="281.0" width="1.4" height="2.2" fill="#ff0010"/>
<rect x="257.0" y="287.0" width="1.4" height="2.3" fill="#ff0010"/>
<rect x="258.0" y="287.7" width="1.4" height="2.4" fill="#d8cc60"/>
<rect x="259.0" y="289.0" width="1.4" height="1.8" fill="#d8cc60"/>
<rect x="260.0" y="288.4" width="1.4" height="2.4" fill="#d8cc60"/>
<rect x="261.0" y="288.8" width="1.4" height="1.8" fill="#d8cc60"/>
<rect x="263.0" y="285.8" width="1.4" height="3.5" fill="#d8cc60"/>
<rect x="264.0" y="286.0" width="1.4" height="2.7" fill="#1e80f0"/>
<rect x="265.0" y="286.9" width="1.4" height="2.6" fill="#1e80f0"/>
<rect x="266.0" y="288.1" width="1.4" height="1.8" fill="#1e80f0"/>
<rect x="267.0" y="286.0" width="1.4" height="3.6" fill="#ff0010"/>
<rect x="269.0" y="287.8" width="1.4" height="2.3" fill="#ff0010"/>
<rect x="270.0" y="289.2" width="1.4" height="3.0" fill="#1e80f0"/>
<rect x="271.0" y="291.0" width="1.4" height="1.8" fill="#d8cc60"/>
<rect x="272.0" y="291.4" width="1.4" height="2.6" fill="#ff0010"/>
<rect x="273.0" y="293.4" width="1.4" height="1.8" fill="#d8cc60"/>
<rect x="274.0" y="293.3" width="1.4" height="6.5" fill="#1e80f0"/>
<rect x="275.0" y="297.6" width="1.4" height="1.8" fill="#d8cc60"/>
<rect x="276.0" y="298.7" width="1.4" height="1.8" fill="#d8cc60"/>
<rect x="277.0" y="296.3" width="1.4" height="3.8" fill="#1e80f0"/>
<rect x="278.0" y="294.5" width="1.4" height="2.7" fill="#d8cc60"/>
<rect x="280.0" y="292.8" width="1.4" height="1.8" fill="#1e80f0"/>
<rect x="281.0" y="291.1" width="1.4" height="3.3" fill="#ff0010"/>
<rect x="282.0" y="289.0" width="1.4" height="3.1" fill="#ff0010"/>
<rect x="283.0" y="283.9" width="1.4" height="5.4" fill="#d8cc60"/>
<rect x="284.0" y="284.0" width="1.4" height="5.7" fill="#d8cc60"/>
<rect x="285.0" y="287.9" width="1.4" height="2.5" fill="#1e80f0"/>
<rect x="287.0" y="290.5" width="1.4" height="1.8" fill="#ff0010"/>
<rect x="288.0" y="290.6" width="1.4" height="3.0" fill="#1e80f0"/>
<rect x="289.0" y="293.0" width="1.4" height="1.8" fill="#d8cc60"/>
<rect x="290.0" y="293.2" width="1.4" height="3.3" fill="#ff0010"/>
<rect x="291.0" y="295.1" width="1.4" height="1.8" fill="#ff0010"/>
<rect x="292.0" y="294.8" width="1.4" height="2.3" fill="#1e80f0"/>
<rect x="294.0" y="296.0" width="1.4" height="1.8" fill="#d8cc60"/>
<rect x="296.0" y="293.6" width="1.4" height="2.7" fill="#ff0010"/>
<rect x="297.0" y="290.9" width="1.4" height="4.0" fill="#1e80f0"/>
<rect x="298.0" y="290.5" width="1.4" height="1.8" fill="#1e80f0"/>
<rect x="299.0" y="287.2" width="1.4" height="4.1" fill="#d8cc60"/>
<rect x="300.0" y="286.1" width="1.4" height="2.1" fill="#1e80f0"/>
<rect x="303.0" y="278.2" width="1.4" height="5.2" fill="#ff0010"/>
<rect x="304.0" y="278.7" width="1.4" height="3.3" fill="#1e80f0"/>
<rect x="305.0" y="279.8" width="1.4" height="2.3" fill="#ff0010"/>
<rect x="306.0" y="279.8" width="1.4" height="2.9" fill="#1e80f0"/>
<rect x="307.0" y="281.8" width="1.4" height="1.8" fill="#ff0010"/>
<rect x="308.0" y="282.5" width="1.4" height="2.2" fill="#d8cc60"/>
<rect x="309.0" y="282.0" width="1.4" height="2.4" fill="#d8cc60"/>
<rect x="310.0" y="281.3" width="1.4" height="4.8" fill="#ff0010"/>
<rect x="311.0" y="284.2" width="1.4" height="1.8" fill="#ff0010"/>
<rect x="312.0" y="283.5" width="1.4" height="3.7" fill="#1e80f0"/>
<rect x="313.0" y="285.8" width="1.4" height="1.8" fill="#ff0010"/>
<rect x="314.0" y="284.7" width="1.4" height="4.4" fill="#1e80f0"/>
<rect x="315.0" y="288.0" width="1.4" height="1.8" fill="#1e80f0"/>
<rect x="316.0" y="284.9" width="1.4" height="3.7" fill="#d8cc60"/>
<rect x="317.0" y="281.8" width="1.4" height="4.5" fill="#1e80f0"/>
<rect x="319.0" y="282.5" width="1.4" height="1.8" fill="#1e80f0"/>
<rect x="320.0" y="281.8" width="1.4" height="1.8" fill="#ff0010"/>
<rect x="321.0" y="280.0" width="1.4" height="2.8" fill="#1e80f0"/>
<rect x="323.0" y="278.0" width="1.4" height="1.8" fill="#ff0010"/>
<rect x="324.0" y="277.9" width="1.4" height="3.2" fill="#ff0010"/>
<rect x="325.0" y="278.9" width="1.4" height="1.8" fill="#ff0010"/>
<rect x="326.0" y="278.9" width="1.4" height="3.5" fill="#1e80f0"/>
<rect x="327.0" y="280.2" width="1.4" height="1.9" fill="#ff0010"/>
<rect x="328.0" y="279.9" width="1.4" height="4.4" fill="#1e80f0"/>
<rect x="329.0" y="283.2" width="1.4" height="1.8" fill="#ff0010"/>
<rect x="331.0" y="283.4" width="1.4" height="2.1" fill="#1e80f0"/>
<rect x="333.0" y="286.0" width="1.4" height="1.8" fill="#1e80f0"/>
<rect x="334.0" y="285.4" width="1.4" height="2.8" fill="#1e80f0"/>
<rect x="336.0" y="284.5" width="1.4" height="1.8" fill="#ff0010"/>
<rect x="337.0" y="282.3" width="1.4" height="2.9" fill="#ff0010"/>
<rect x="338.0" y="282.8" width="1.4" height="1.8" fill="#d8cc60"/>
<rect x="339.0" y="281.5" width="1.4" height="1.8" fill="#1e80f0"/>
<rect x="340.0" y="281.6" width="1.4" height="1.8" fill="#ff0010"/>
<rect x="344.0" y="278.2" width="1.4" height="1.8" fill="#ff0010"/>
<rect x="345.0" y="277.9" width="1.4" height="2.1" fill="#ff0010"/>
<rect x="346.0" y="278.3" width="1.4" height="2.8" fill="#1e80f0"/>
<rect x="347.0" y="280.5" width="1.4" height="1.8" fill="#ff0010"/>
<rect x="348.0" y="280.4" width="1.4" height="2.2" fill="#1e80f0"/>
<rect x="349.0" y="281.0" width="1.4" height="2.2" fill="#1e80f0"/>
<rect x="350.0" y="281.7" width="1.4" height="4.2" fill="#1e80f0"/>
<rect x="351.0" y="285.7" width="1.4" height="1.8" fill="#d8cc60"/>
<rect x="355.0" y="289.2" width="1.4" height="1.8" fill="#d8cc60"/>
<rect x="356.0" y="289.3" width="1.4" height="1.8" fill="#1e80f0"/>
<rect x="357.0" y="289.3" width="1.4" height="2.3" fill="#d8cc60"/>
<rect x="358.0" y="290.8" width="1.4" height="2.8" fill="#ff0010"/>
<rect x="359.0" y="291.4" width="1.4" height="2.4" fill="#ff0010"/>
<rect x="360.0" y="292.4" width="1.4" height="4.4" fill="#ff0010"/>
<rect x="361.0" y="295.2" width="1.4" height="1.8" fill="#1e80f0"/>
<rect x="363.0" y="298.1" width="1.4" height="2.4" fill="#d8cc60"/>
<rect x="364.0" y="298.8" width="1.4" height="5.2" fill="#ff0010"/>
<rect x="365.0" y="301.4" width="1.4" height="3.1" fill="#1e80f0"/>
<rect x="366.0" y="299.9" width="1.4" height="2.7" fill="#1e80f0"/>
<rect x="367.0" y="297.6" width="1.4" height="3.4" fill="#1e80f0"/>
<rect x="368.0" y="295.9" width="1.4" height="3.5" fill="#1e80f0"/>
<rect x="369.0" y="294.9" width="1.4" height="2.8" fill="#1e80f0"/>
<rect x="370.0" y="294.2" width="1.4" height="1.8" fill="#ff0010"/>
<rect x="371.0" y="290.8" width="1.4" height="4.6" fill="#1e80f0"/>
<rect x="373.0" y="290.5" width="1.4" height="1.8" fill="#ff0010"/>
<rect x="375.0" y="290.9" width="1.4" height="3.1" fill="#ff0010"/>
<rect x="376.0" y="292.6" width="1.4" height="6.2" fill="#1e80f0"/>
<rect x="377.0" y="296.8" width="1.4" height="1.8" fill="#d8cc60"/>
<rect x="378.0" y="296.1" width="1.4" height="2.1" fill="#ff0010"/>
<rect x="380.0" y="290.9" width="1.4" height="3.7" fill="#1e80f0"/>
<rect x="382.0" y="288.7" width="1.4" height="2.2" fill="#ff0010"/>
<rect x="383.0" y="288.9" width="1.4" height="2.0" fill="#1e80f0"/>
<rect x="384.0" y="288.4" width="1.4" height="3.2" fill="#1e80f0"/>
<rect x="385.0" y="289.5" width="1.4" height="1.9" fill="#d8cc60"/>
<rect x="386.0" y="290.2" width="1.4" height="1.8" fill="#ff0010"/>
<rect x="387.0" y="287.3" width="1.4" height="3.8" fill="#1e80f0"/>
<rect x="389.0" y="285.4" width="1.4" height="2.8" fill="#ff0010"/>
<rect x="390.0" y="284.4" width="1.4" height="1.8" fill="#1e80f0"/>
<rect x="391.0" y="281.6" width="1.4" height="3.9" fill="#ff0010"/>
<rect x="394.0" y="280.9" width="1.4" height="1.8" fill="#d8cc60"/>
<rect x="395.0" y="278.9" width="1.4" height="3.8" fill="#ff0010"/>
<rect x="396.0" y="278.9" width="1.4" height="1.8" fill="#1e80f0"/>
<rect x="398.0" y="275.7" width="1.4" height="2.8" fill="#1e80f0"/>
<rect x="399.0" y="272.8" width="1.4" height="3.7" fill="#1e80f0"/>
<rect x="401.0" y="268.3" width="1.4" height="4.5" fill="#1e80f0"/>
<rect x="402.0" y="267.8" width="1.4" height="3.6" fill="#1e80f0"/>
<rect x="403.0" y="269.2" width="1.4" height="3.7" fill="#ff0010"/>
<rect x="404.0" y="271.4" width="1.4" height="6.1" fill="#d8cc60"/>
<rect x="405.0" y="276.5" width="1.4" height="5.6" fill="#1e80f0"/>
<rect x="406.0" y="280.5" width="1.4" height="5.3" fill="#1e80f0"/>
<rect x="407.0" y="284.0" width="1.4" height="3.3" fill="#ff0010"/>
<rect x="408.0" y="285.3" width="1.4" height="4.2" fill="#ff0010"/>
<rect x="409.0" y="288.7" width="1.4" height="1.8" fill="#1e80f0"/>
<rect x="410.0" y="288.7" width="1.4" height="1.8" fill="#ff0010"/>
<rect x="411.0" y="287.2" width="1.4" height="2.9" fill="#1e80f0"/>
<rect x="412.0" y="287.5" width="1.4" height="1.8" fill="#ff0010"/>
<rect x="413.0" y="275.2" width="1.4" height="13.2" fill="#ff0010"/>
<rect x="415.0" y="273.2" width="1.4" height="2.7" fill="#d8cc60"/>
<rect x="417.0" y="272.5" width="1.4" height="3.0" fill="#d8cc60"/>
<rect x="418.0" y="272.3" width="1.4" height="1.8" fill="#1e80f0"/>
<rect x="419.0" y="272.5" width="1.4" height="2.0" fill="#ff0010"/>
<rect x="420.0" y="272.3" width="1.4" height="4.0" fill="#d8cc60"/>
<rect x="421.0" y="275.8" width="1.4" height="1.8" fill="#1e80f0"/>
<rect x="423.0" y="278.2" width="1.4" height="2.3" fill="#1e80f0"/>
<rect x="425.0" y="283.0" width="1.4" height="1.8" fill="#1e80f0"/>
<rect x="426.0" y="283.3" width="1.4" height="5.7" fill="#1e80f0"/>
<rect x="427.0" y="286.6" width="1.4" height="2.6" fill="#1e80f0"/>
<rect x="428.0" y="287.9" width="1.4" height="2.9" fill="#1e80f0"/>
<rect x="429.0" y="289.3" width="1.4" height="1.8" fill="#ff0010"/>
<rect x="430.0" y="288.3" width="1.4" height="1.8" fill="#ff0010"/>
<rect x="432.0" y="282.5" width="1.4" height="2.7" fill="#ff0010"/>
<rect x="433.0" y="279.8" width="1.4" height="4.0" fill="#d8cc60"/>
<rect x="434.0" y="279.1" width="1.4" height="1.9" fill="#1e80f0"/>
<rect x="435.0" y="276.2" width="1.4" height="4.2" fill="#1e80f0"/>
<rect x="436.0" y="275.1" width="1.4" height="2.6" fill="#ff0010"/>
<rect x="438.0" y="271.1" width="1.4" height="3.1" fill="#ff0010"/>
<rect x="441.0" y="270.8" width="1.4" height="2.0" fill="#1e80f0"/>
<rect x="442.0" y="271.7" width="1.4" height="4.1" fill="#1e80f0"/>
<rect x="443.0" y="273.5" width="1.4" height="1.8" fill="#1e80f0"/>
<rect x="445.0" y="275.5" width="1.4" height="3.1" fill="#ff0010"/>
<rect x="446.0" y="277.4" width="1.4" height="5.6" fill="#ff0010"/>
<rect x="447.0" y="281.5" width="1.4" height="2.8" fill="#d8cc60"/>
<rect x="448.0" y="281.6" width="1.4" height="2.7" fill="#d8cc60"/>
<rect x="449.0" y="271.3" width="1.4" height="12.1" fill="#1e80f0"/>
<rect x="450.0" y="261.0" width="1.4" height="10.8" fill="#1e80f0"/>
<rect x="451.0" y="255.4" width="1.4" height="7.0" fill="#1e80f0"/>
<rect x="452.0" y="252.0" width="1.4" height="4.9" fill="#ff0010"/>
<rect x="453.0" y="248.8" width="1.4" height="4.9" fill="#ff0010"/>
<rect x="455.0" y="243.3" width="1.4" height="4.2" fill="#1e80f0"/>
<rect x="456.0" y="241.7" width="1.4" height="3.0" fill="#ff0010"/>
<rect x="457.0" y="238.7" width="1.4" height="3.6" fill="#ff0010"/>
<rect x="458.0" y="236.0" width="1.4" height="3.4" fill="#ff0010"/>
<rect x="459.0" y="231.3" width="1.4" height="5.9" fill="#ff0010"/>
<rect x="460.0" y="229.1" width="1.4" height="3.4" fill="#d8cc60"/>
<rect x="461.0" y="229.1" width="1.4" height="1.8" fill="#1e80f0"/>
<rect x="462.0" y="228.8" width="1.4" height="7.0" fill="#ff0010"/>
<rect x="463.0" y="231.2" width="1.4" height="4.1" fill="#d8cc60"/>
<rect x="464.0" y="229.9" width="1.4" height="2.9" fill="#ff0010"/>
<rect x="466.0" y="227.2" width="1.4" height="1.8" fill="#d8cc60"/>
<rect x="467.0" y="225.5" width="1.4" height="3.4" fill="#1e80f0"/>
<rect x="471.0" y="229.8" width="1.4" height="1.8" fill="#1e80f0"/>
<rect x="472.0" y="230.8" width="1.4" height="1.8" fill="#ff0010"/>
<rect x="473.0" y="228.7" width="1.4" height="2.9" fill="#1e80f0"/>
<rect x="475.0" y="225.9" width="1.4" height="3.0" fill="#ff0010"/>
<rect x="476.0" y="226.4" width="1.4" height="1.8" fill="#1e80f0"/>
<rect x="477.0" y="225.1" width="1.4" height="2.3" fill="#ff0010"/>
<rect x="478.0" y="224.4" width="1.4" height="2.2" fill="#1e80f0"/>
<rect x="479.0" y="225.8" width="1.4" height="1.8" fill="#ff0010"/>
<rect x="6.8" y="331.6" width="2.2" height="1.8" fill="#d8cc60"/>
<rect x="8.4" y="331.1" width="2.2" height="1.8" fill="#d8cc60"/>
<rect x="12.3" y="333.1" width="2.2" height="1.8" fill="#1e80f0"/>
<rect x="14.6" y="330.1" width="2.2" height="1.8" fill="#d8cc60"/>
<rect x="17.0" y="328.1" width="2.2" height="1.8" fill="#d8cc60"/>
<rect x="19.3" y="327.1" width="2.2" height="1.8" fill="#d8cc60"/>
<rect x="23.0" y="329.1" width="2.2" height="1.8" fill="#d8cc60"/>
<rect x="26.0" y="335.1" width="2.2" height="1.8" fill="#d8cc60"/>
<rect x="28.7" y="334.1" width="2.2" height="1.8" fill="#d8cc60"/>
<rect x="32.0" y="336.1" width="2.2" height="1.8" fill="#d8cc60"/>
<rect x="34.2" y="339.1" width="2.2" height="1.8" fill="#d8cc60"/>
<rect x="38.0" y="340.1" width="2.2" height="1.8" fill="#1e80f0"/>
<rect x="40.0" y="344.1" width="2.2" height="1.8" fill="#d8cc60"/>
<rect x="42.4" y="340.1" width="2.2" height="1.8" fill="#ff0010"/>
<rect x="46.5" y="334.1" width="2.2" height="1.8" fill="#d8cc60"/>
<rect x="48.0" y="338.1" width="2.2" height="1.8" fill="#d8cc60"/>
<rect x="50.6" y="338.1" width="2.2" height="1.8" fill="#d8cc60"/>
<rect x="56.0" y="338.1" width="2.2" height="1.8" fill="#d8cc60"/>
<rect x="58.4" y="338.1" width="2.2" height="1.8" fill="#d8cc60"/>
<rect x="61.5" y="336.1" width="2.2" height="1.8" fill="#d8cc60"/>
<rect x="63.0" y="338.1" width="2.2" height="1.8" fill="#d8cc60"/>
<rect x="66.0" y="340.1" width="2.2" height="1.8" fill="#d8cc60"/>
<rect x="69.0" y="339.1" width="2.2" height="1.8" fill="#d8cc60"/>
<rect x="72.0" y="338.1" width="2.2" height="1.8" fill="#ff0010"/>
<rect x="74.0" y="337.1" width="2.2" height="1.8" fill="#d8cc60"/>
<rect x="79.0" y="336.1" width="2.2" height="1.8" fill="#d8cc60"/>
<rect x="86.5" y="340.1" width="2.2" height="1.8" fill="#d8cc60"/>
<rect x="88.0" y="343.1" width="2.2" height="1.8" fill="#1e80f0"/>
<rect x="89.5" y="345.1" width="2.2" height="1.8" fill="#d8cc60"/>
<rect x="81.2" y="341" width="1.7" height="9" fill="#1e80f0"/>
<rect x="480.2" y="227.0" width="1.7" height="5.0" fill="#1e80f0"/>
<rect x="482.2" y="228.0" width="1.7" height="3.0" fill="#ff0010"/>
<rect x="484.0" y="227.1" width="2.2" height="1.8" fill="#d8cc60"/>
<rect x="481.0" y="232.1" width="2.2" height="1.8" fill="#d8cc60"/>
<rect x="485.2" y="222.0" width="1.7" height="1.0" fill="#d8cc60"/>
<rect x="486.0" y="220.1" width="2.2" height="1.8" fill="#1e80f0"/>
<rect x="488.2" y="216.0" width="1.7" height="8.0" fill="#ff0010"/>
<rect x="490.0" y="220.6" width="2.2" height="1.8" fill="#d8cc60"/>
<rect x="491.0" y="222.1" width="2.2" height="1.8" fill="#1e80f0"/>
<rect x="492.0" y="224.1" width="2.2" height="1.8" fill="#ff0010"/>
<rect x="494.0" y="222.1" width="2.2" height="1.8" fill="#d8cc60"/>
<rect x="495.5" y="217.1" width="2.2" height="1.8" fill="#ff0010"/>
<rect x="496.7" y="219.0" width="1.7" height="7.0" fill="#1e80f0"/>
<rect x="498.0" y="225.1" width="2.2" height="1.8" fill="#d8cc60"/>
<rect x="500.0" y="223.1" width="2.2" height="1.8" fill="#1e80f0"/>
<rect x="501.0" y="227.1" width="2.2" height="1.8" fill="#d8cc60"/>
<rect x="502.0" y="230.1" width="2.2" height="1.8" fill="#d8cc60"/>
<rect x="503.2" y="233.0" width="1.7" height="6.0" fill="#1e80f0"/>
<rect x="505.0" y="233.1" width="2.2" height="1.8" fill="#ff0010"/>
<rect x="506.5" y="235.1" width="2.2" height="1.8" fill="#1e80f0"/>
<rect x="508.5" y="238.1" width="2.2" height="1.8" fill="#d8cc60"/>
<rect x="510.7" y="237.0" width="1.7" height="4.0" fill="#ff0010"/>
<rect x="511.7" y="239.0" width="1.7" height="10.0" fill="#1e80f0"/>
<rect x="512.7" y="242.0" width="1.7" height="7.0" fill="#ff0010"/>
<rect x="515.5" y="245.1" width="2.2" height="1.8" fill="#1e80f0"/>
<rect x="516.5" y="247.1" width="2.2" height="1.8" fill="#d8cc60"/>
<rect x="517.5" y="250.1" width="2.2" height="1.8" fill="#d8cc60"/>
<rect x="519.2" y="244.0" width="1.7" height="3.0" fill="#ff0010"/>
<rect x="520.0" y="241.1" width="2.2" height="1.8" fill="#d8cc60"/>
<rect x="522.0" y="239.1" width="2.2" height="1.8" fill="#d8cc60"/>
<rect x="523.7" y="238.0" width="1.7" height="3.0" fill="#1e80f0"/>
<rect x="525.5" y="242.1" width="2.2" height="1.8" fill="#1e80f0"/>
<rect x="527.7" y="245.0" width="1.7" height="7.0" fill="#ff0010"/>
<rect x="528.0" y="242.1" width="2.2" height="1.8" fill="#d8cc60"/>
<rect x="529.0" y="237.1" width="2.2" height="1.8" fill="#d8cc60"/>
<rect x="531.0" y="233.1" width="2.2" height="1.8" fill="#d8cc60"/>
<rect x="533.2" y="233.0" width="1.7" height="3.0" fill="#1e80f0"/>
<rect x="535.0" y="236.1" width="2.2" height="1.8" fill="#d8cc60"/>
<rect x="539.0" y="229.1" width="2.2" height="1.8" fill="#d8cc60"/>
<rect x="540.0" y="228.1" width="2.2" height="1.8" fill="#d8cc60"/>
<rect x="542.0" y="230.1" width="2.2" height="1.8" fill="#d8cc60"/>
<rect x="543.0" y="233.1" width="2.2" height="1.8" fill="#1e80f0"/>
<rect x="545.0" y="234.1" width="2.2" height="1.8" fill="#d8cc60"/>
<rect x="549.0" y="234.1" width="2.2" height="1.8" fill="#1e80f0"/>
<rect x="551.0" y="240.1" width="2.2" height="1.8" fill="#d8cc60"/>
<rect x="552.7" y="243.0" width="1.7" height="2.0" fill="#1e80f0"/>
<rect x="556.0" y="240.1" width="2.2" height="1.8" fill="#d8cc60"/>
<rect x="558.2" y="240.0" width="1.7" height="4.0" fill="#ff0010"/>
<rect x="561.0" y="236.1" width="2.2" height="1.8" fill="#d8cc60"/>
<rect x="567.0" y="236.1" width="2.2" height="1.8" fill="#d8cc60"/>
<rect x="569.0" y="234.1" width="2.2" height="1.8" fill="#d8cc60"/>
<rect x="579.2" y="220.0" width="1.7" height="6.0" fill="#1e80f0"/>
<rect x="580.7" y="222.0" width="1.7" height="8.0" fill="#ff0010"/>
<rect x="582.2" y="230.0" width="1.7" height="3.0" fill="#1e80f0"/>
<rect x="578.0" y="230.1" width="2.2" height="1.8" fill="#ff0010"/>
<rect x="583.0" y="231.1" width="2.2" height="1.8" fill="#d8cc60"/>
<rect x="587.0" y="229.1" width="2.2" height="1.8" fill="#d8cc60"/>
<rect x="588.7" y="235.0" width="1.7" height="5.0" fill="#d8cc60"/>
<rect x="589.2" y="237.0" width="1.7" height="6.0" fill="#ff0010"/>
<rect x="592.0" y="236.1" width="2.2" height="1.8" fill="#d8cc60"/>
<rect x="594.0" y="235.1" width="2.2" height="1.8" fill="#1e80f0"/>
<rect x="596.0" y="231.1" width="2.2" height="1.8" fill="#ff0010"/>
<rect x="599.0" y="232.1" width="2.2" height="1.8" fill="#d8cc60"/>
<rect x="601.0" y="228.1" width="2.2" height="1.8" fill="#d8cc60"/>
<rect x="604.0" y="226.1" width="2.2" height="1.8" fill="#ff0010"/>
<rect x="605.0" y="227.1" width="2.2" height="1.8" fill="#d8cc60"/>
<rect x="609.0" y="229.1" width="2.2" height="1.8" fill="#d8cc60"/>
<rect x="615.0" y="230.1" width="2.2" height="1.8" fill="#1e80f0"/>
<rect x="616.2" y="232.0" width="1.7" height="4.0" fill="#1e80f0"/>
<rect x="619.0" y="232.1" width="2.2" height="1.8" fill="#ff0010"/>
<rect x="623.0" y="234.1" width="2.2" height="1.8" fill="#1e80f0"/>
<rect x="625.0" y="238.1" width="2.2" height="1.8" fill="#d8cc60"/>
<rect x="626.0" y="244.1" width="2.2" height="1.8" fill="#1e80f0"/>
<rect x="628.0" y="247.1" width="2.2" height="1.8" fill="#d8cc60"/>
<rect x="629.0" y="223.1" width="2.2" height="1.8" fill="#d8cc60"/>
<rect x="631.2" y="225.0" width="1.7" height="5.0" fill="#1e80f0"/>
<rect x="634.0" y="224.1" width="2.2" height="1.8" fill="#ff0010"/>
<rect x="636.2" y="224.0" width="1.7" height="6.0" fill="#ff0010"/>
<rect x="638.2" y="234.0" width="1.7" height="2.0" fill="#ff0010"/>
<rect x="633.0" y="231.1" width="2.2" height="1.8" fill="#1e80f0"/>
<rect x="635.0" y="235.1" width="2.2" height="1.8" fill="#d8cc60"/>
<rect x="642.0" y="218.1" width="2.2" height="1.8" fill="#1e80f0"/>
<rect x="642.5" y="215.1" width="2.2" height="1.8" fill="#ff0010"/>
<rect x="643.0" y="220.1" width="2.2" height="1.8" fill="#d8cc60"/>
<rect x="645.0" y="222.1" width="2.2" height="1.8" fill="#1e80f0"/>
<rect x="644.0" y="224.1" width="2.2" height="1.8" fill="#d8cc60"/>
<rect x="647.0" y="221.1" width="2.2" height="1.8" fill="#d8cc60"/>
<rect x="649.0" y="225.1" width="2.2" height="1.8" fill="#1e80f0"/>
<rect x="649.2" y="232.0" width="1.7" height="4.0" fill="#1e80f0"/>
<rect x="651.0" y="235.1" width="2.2" height="1.8" fill="#d8cc60"/>
<rect x="655.0" y="237.1" width="2.2" height="1.8" fill="#1e80f0"/>
<rect x="657.0" y="237.1" width="2.2" height="1.8" fill="#ff0010"/>
<rect x="659.0" y="242.1" width="2.2" height="1.8" fill="#d8cc60"/>
<rect x="661.0" y="247.1" width="2.2" height="1.8" fill="#ff0010"/>
<rect x="662.0" y="249.1" width="2.2" height="1.8" fill="#1e80f0"/>
<rect x="668.0" y="227.1" width="2.2" height="1.8" fill="#d8cc60"/>
<rect x="669.0" y="236.1" width="2.2" height="1.8" fill="#d8cc60"/>
<rect x="672.0" y="235.1" width="2.2" height="1.8" fill="#d8cc60"/>
<rect x="675.0" y="227.1" width="2.2" height="1.8" fill="#ff0010"/>
<rect x="676.0" y="231.1" width="2.2" height="1.8" fill="#1e80f0"/>
<rect x="679.0" y="239.1" width="2.2" height="1.8" fill="#d8cc60"/>
<rect x="681.0" y="236.1" width="2.2" height="1.8" fill="#d8cc60"/>
<rect x="684.0" y="238.1" width="2.2" height="1.8" fill="#d8cc60"/>
<rect x="689.0" y="237.1" width="2.2" height="1.8" fill="#d8cc60"/>
<rect x="690.5" y="241.0" width="1.7" height="3.0" fill="#1e80f0"/>
<rect x="691.3" y="234.5" width="2.2" height="1.8" fill="#d8cc60"/>
<rect x="694.7" y="245.0" width="1.7" height="3.0" fill="#d8cc60"/>
<rect x="696.0" y="240.1" width="2.2" height="1.8" fill="#d8cc60"/>
<rect x="697.6" y="234.5" width="2.2" height="1.8" fill="#1e80f0"/>
<rect x="703.2" y="219.0" width="1.7" height="5.0" fill="#1e80f0"/>
<rect x="704.6" y="226.7" width="2.2" height="1.8" fill="#ff0010"/>
<rect x="708.0" y="228.4" width="1.7" height="1.2" fill="#ff0010"/>
<rect x="709.3" y="226.7" width="2.2" height="1.8" fill="#d8cc60"/>
<rect x="711.1" y="235.4" width="1.7" height="12.6" fill="#ff0010"/>
<rect x="714.2" y="226.8" width="1.7" height="6.2" fill="#1e80f0"/>
<rect x="715.7" y="232.3" width="1.7" height="1.7" fill="#1e80f0"/>
<rect x="717.2" y="235.4" width="1.7" height="17.2" fill="#1e80f0"/>
<rect x="712.4" y="234.5" width="2.2" height="1.8" fill="#d8cc60"/>
<rect x="718.7" y="233.8" width="2.2" height="1.8" fill="#d8cc60"/>
<rect x="721.2" y="226.8" width="1.7" height="14.2" fill="#ff0010"/>
<rect x="722.6" y="225.9" width="2.2" height="1.8" fill="#d8cc60"/>
<rect x="725.9" y="223.7" width="1.7" height="3.1" fill="#1e80f0"/>
<rect x="726.7" y="232.3" width="1.7" height="4.7" fill="#1e80f0"/>
<rect x="727.3" y="236.1" width="2.2" height="1.8" fill="#d8cc60"/>
<rect x="729.3" y="229.1" width="2.2" height="1.8" fill="#ff0010"/>
<rect x="731.2" y="226.0" width="1.7" height="9.4" fill="#1e80f0"/>
<rect x="732.0" y="234.5" width="2.2" height="1.8" fill="#1e80f0"/>
<rect x="734.5" y="241.7" width="1.7" height="6.3" fill="#1e80f0"/>
<rect x="736.1" y="243.2" width="1.7" height="1.6" fill="#ff0010"/>
<rect x="740.0" y="241.0" width="1.7" height="3.0" fill="#ff0010"/>
<rect x="741.5" y="226.0" width="1.7" height="5.5" fill="#ff0010"/>
<rect x="743.2" y="228.4" width="1.7" height="3.9" fill="#1e80f0"/>
<rect x="743.7" y="226.7" width="2.2" height="1.8" fill="#d8cc60"/>
<rect x="746.8" y="236.1" width="2.2" height="1.8" fill="#d8cc60"/>
<rect x="748.6" y="241.0" width="1.7" height="1.5" fill="#1e80f0"/>
<rect x="750.0" y="241.6" width="2.2" height="1.8" fill="#d8cc60"/>
<rect x="751.5" y="243.1" width="2.2" height="1.8" fill="#1e80f0"/>
<rect x="754.0" y="245.6" width="1.7" height="2.4" fill="#1e80f0"/>
<rect x="755.4" y="247.8" width="2.2" height="1.8" fill="#d8cc60"/>
<rect x="756.2" y="246.3" width="2.2" height="1.8" fill="#1e80f0"/>
<rect x="758.5" y="240.8" width="2.2" height="1.8" fill="#d8cc60"/>
<rect x="758.5" y="236.1" width="2.2" height="1.8" fill="#d8cc60"/>
<rect x="762.6" y="223.7" width="1.7" height="13.3" fill="#ff0010"/>
<rect x="765.8" y="230.0" width="1.7" height="2.3" fill="#1e80f0"/>
<rect x="771.8" y="225.9" width="2.2" height="1.8" fill="#d8cc60"/>
<rect x="775.7" y="232.1" width="2.2" height="1.8" fill="#d8cc60"/>
<rect x="778.0" y="236.9" width="2.2" height="1.8" fill="#d8cc60"/>
<rect x="779.5" y="240.0" width="1.7" height="15.0" fill="#1e80f0"/>
<rect x="781.4" y="245.6" width="1.7" height="5.4" fill="#ff0010"/>
<rect x="782.0" y="245.5" width="2.2" height="1.8" fill="#d8cc60"/>
<rect x="783.5" y="240.8" width="2.2" height="1.8" fill="#d8cc60"/>
<rect x="787.4" y="240.1" width="2.2" height="1.8" fill="#d8cc60"/>
<rect x="786.7" y="243.9" width="2.2" height="1.8" fill="#d8cc60"/>
<rect x="789.0" y="236.1" width="2.2" height="1.8" fill="#d8cc60"/>
<rect x="792.0" y="236.9" width="2.2" height="1.8" fill="#d8cc60"/>
<rect x="797.6" y="240.1" width="2.2" height="1.8" fill="#d8cc60"/>
<rect x="800.2" y="241.7" width="1.7" height="6.3" fill="#1e80f0"/>
<rect x="803.8" y="236.9" width="2.2" height="1.8" fill="#d8cc60"/>
<rect x="806.0" y="233.0" width="2.2" height="1.8" fill="#ff0010"/>
<rect x="807.8" y="236.1" width="2.2" height="1.8" fill="#d8cc60"/>
<rect x="810.2" y="233.9" width="1.7" height="3.1" fill="#1e80f0"/>
<rect x="812.4" y="240.1" width="2.2" height="1.8" fill="#d8cc60"/>
<rect x="814.8" y="243.9" width="2.2" height="1.8" fill="#d8cc60"/>
<rect x="818.0" y="240.1" width="2.2" height="1.8" fill="#d8cc60"/>
<rect x="821.8" y="233.0" width="2.2" height="1.8" fill="#d8cc60"/>
<rect x="828.0" y="238.4" width="2.2" height="1.8" fill="#d8cc60"/>
<rect x="829.8" y="242.5" width="1.7" height="1.5" fill="#1e80f0"/>
<rect x="832.0" y="244.7" width="2.2" height="1.8" fill="#ff0010"/>
<rect x="833.5" y="244.7" width="2.2" height="1.8" fill="#ff0010"/>
<rect x="837.4" y="241.6" width="2.2" height="1.8" fill="#d8cc60"/>
<rect x="840.0" y="244.1" width="2.2" height="1.8" fill="#d8cc60"/>
<rect x="843.0" y="240.1" width="2.2" height="1.8" fill="#ff0010"/>
<rect x="847.0" y="240.1" width="2.2" height="1.8" fill="#d8cc60"/>
<rect x="848.5" y="227.1" width="2.2" height="1.8" fill="#1e80f0"/>
<rect x="848.7" y="231.0" width="1.7" height="4.0" fill="#ff0010"/>
<rect x="853.5" y="234.1" width="2.2" height="1.8" fill="#d8cc60"/>
<rect x="866.0" y="242.6" width="2.2" height="1.8" fill="#1e80f0"/>
<rect x="874.0" y="237.1" width="2.2" height="1.8" fill="#d8cc60"/>
<rect x="875.5" y="234.6" width="2.2" height="1.8" fill="#ff0010"/>
<rect x="876.0" y="238.1" width="2.2" height="1.8" fill="#d8cc60"/>
<rect x="885.0" y="236.1" width="2.2" height="1.8" fill="#d8cc60"/>
<rect x="886.0" y="238.1" width="2.2" height="1.8" fill="#d8cc60"/>
<rect x="896.0" y="236.6" width="2.2" height="1.8" fill="#d8cc60"/>
<rect x="901.0" y="236.6" width="2.2" height="1.8" fill="#d8cc60"/>
<rect x="904.0" y="232.1" width="2.2" height="1.8" fill="#d8cc60"/>
<rect x="906.0" y="232.6" width="2.2" height="1.8" fill="#d8cc60"/>
<rect x="911.5" y="240.1" width="2.2" height="1.8" fill="#d8cc60"/>
<rect x="912.5" y="242.6" width="2.2" height="1.8" fill="#1e80f0"/>
<rect x="913.5" y="244.6" width="2.2" height="1.8" fill="#d8cc60"/>
<rect x="916.0" y="242.1" width="2.2" height="1.8" fill="#d8cc60"/>
<rect x="917.5" y="246.6" width="2.2" height="1.8" fill="#1e80f0"/>
<rect x="916.5" y="244.1" width="2.2" height="1.8" fill="#d8cc60"/>
<rect x="919.0" y="244.1" width="2.2" height="1.8" fill="#d8cc60"/>
<rect x="928.5" y="242.1" width="2.2" height="1.8" fill="#d8cc60"/>
<rect x="937.0" y="248.6" width="2.2" height="1.8" fill="#d8cc60"/>
<rect x="946.5" y="250.6" width="2.2" height="1.8" fill="#d8cc60"/>
<rect x="950.5" y="248.6" width="2.2" height="1.8" fill="#d8cc60"/>
<rect x="951.5" y="246.1" width="2.2" height="1.8" fill="#d8cc60"/>
<rect x="960.0" y="240.1" width="2.2" height="1.8" fill="#d8cc60"/>
<rect x="964.0" y="236.6" width="2.2" height="1.8" fill="#d8cc60"/>
<rect x="966.5" y="238.6" width="2.2" height="1.8" fill="#1e80f0"/>
<rect x="969.5" y="253.1" width="2.2" height="1.8" fill="#d8cc60"/>
<polyline points="6.0,498.6 7.0,501.3 8.0,498.0 9.0,497.0 10.0,494.4 11.0,493.3 12.0,490.9 13.0,493.5 14.0,493.8 15.0,496.0 16.0,496.0 17.0,498.8 18.0,498.9 19.0,499.2 20.0,498.4 21.0,501.5 22.0,500.4 23.0,501.3 24.0,499.8 25.0,501.3 26.0,497.3 27.0,495.5 28.0,494.8 29.0,496.3 30.0,495.0 31.0,493.7 32.0,493.7 33.0,495.5 34.0,491.5 35.0,493.2 36.0,490.4 37.0,493.2 38.0,491.7 39.0,494.3 40.0,498.7 41.0,498.4 42.0,494.3 43.0,494.1 44.0,490.7 45.0,490.2 46.0,491.2 47.0,493.1 48.0,490.9 49.0,494.1 50.0,490.6 51.0,492.2 52.0,493.0 53.0,493.3 54.0,491.6 55.0,493.4 56.0,492.5 57.0,496.1 58.0,494.3 59.0,494.6 60.0,494.7 61.0,495.0 62.0,494.3 63.0,495.8 64.0,495.0 65.0,494.4 66.0,490.4 67.0,491.5 68.0,488.2 69.0,489.7 70.0,489.0 71.0,491.0 72.0,492.0 73.0,494.8 74.0,494.9 75.0,493.1 76.0,492.2 77.0,491.5 78.0,491.2 79.0,492.5 80.0,492.1 81.0,494.0 82.0,491.6 83.0,489.2 84.0,483.0 85.0,479.2 86.0,478.7 87.0,481.7 88.0,479.5 89.0,483.8 90.0,481.0 91.0,482.6 92.0,478.0 93.0,481.0 94.0,478.7 95.0,482.2 96.0,481.5 97.0,483.4 98.0,480.2 99.0,483.7 100.0,481.8 101.0,482.1 102.0,478.2 103.0,481.0 104.0,483.7 105.0,491.1 106.0,493.2 107.0,497.6 108.0,497.4 109.0,500.0 110.0,497.4 111.0,499.6 112.0,496.2 113.0,497.5 114.0,495.5 115.0,499.0 116.0,498.4 117.0,499.3 118.0,496.0 119.0,497.3 120.0,493.4 121.0,492.2 122.0,492.7 123.0,494.1 124.0,494.9 125.0,497.5 126.0,496.4 127.0,494.4 128.0,494.7 129.0,494.9 130.0,491.0 131.0,492.5 132.0,494.3 133.0,497.7 134.0,497.8 135.0,500.8 136.0,501.4 137.0,504.6 138.0,503.3 139.0,503.4 140.0,500.9 141.0,503.0 142.0,501.8 143.0,504.9 144.0,505.4 145.0,509.1 146.0,511.1 147.0,515.0 148.0,511.6 149.0,512.0 150.0,507.6 151.0,508.9 152.0,506.2 153.0,506.5 154.0,506.2 155.0,509.3 156.0,506.7 157.0,507.1 158.0,500.4 159.0,498.1 160.0,493.6 161.0,492.8 162.0,491.2 163.0,492.1 164.0,492.7 165.0,494.3 166.0,492.6 167.0,493.3 168.0,493.2 169.0,497.0 170.0,497.1 171.0,497.5 172.0,493.9 173.0,493.8 174.0,491.5 175.0,493.0 176.0,490.3 177.0,492.7 178.0,488.6 179.0,491.7 180.0,490.0 181.0,490.4 182.0,490.9 183.0,494.0 184.0,492.3 185.0,495.2 186.0,495.9 187.0,498.0 188.0,499.0 189.0,501.3 190.0,500.5 191.0,502.7 192.0,499.7 193.0,499.0 194.0,498.6 195.0,498.3 196.0,495.3 197.0,495.5 198.0,492.4 199.0,492.0 200.0,488.4 201.0,489.8 202.0,490.1 203.0,491.8 204.0,491.9 205.0,492.7 206.0,496.0 207.0,502.7 208.0,502.8 209.0,501.5 210.0,497.6 211.0,495.0 212.0,488.2 213.0,495.1 214.0,496.8 215.0,501.3 216.0,502.3 217.0,504.1 218.0,502.6 219.0,502.7 220.0,502.5 221.0,504.8 222.0,502.4 223.0,503.4 224.0,500.6 225.0,499.2 226.0,498.5 227.0,502.9 228.0,504.6 229.0,510.7 230.0,513.4 231.0,512.9 232.0,510.6 233.0,511.9 234.0,511.0 235.0,512.1 236.0,512.2 237.0,513.6 238.0,514.1 239.0,514.5 240.0,513.2 241.0,514.3 242.0,510.8 243.0,511.1 244.0,508.3 245.0,509.7 246.0,504.4 247.0,505.8 248.0,505.6 249.0,511.2 250.0,511.8 251.0,513.1 252.0,511.9 253.0,511.1 254.0,507.8 255.0,509.6 256.0,508.2 257.0,512.4 258.0,513.1 259.0,515.9 260.0,515.0 261.0,516.1 262.0,515.0 263.0,514.6 264.0,510.8 265.0,510.7 266.0,510.9 267.0,512.6 268.0,510.5 269.0,511.4 270.0,508.5 271.0,507.3 272.0,505.8 273.0,506.4 274.0,503.8 275.0,504.9 276.0,503.0 277.0,503.0 278.0,499.0 279.0,497.4 280.0,494.4 281.0,493.1 282.0,489.3 283.0,488.1 284.0,487.0 285.0,490.3 286.0,490.8 287.0,495.0 288.0,491.8 289.0,494.9 290.0,496.8 291.0,498.7 292.0,497.7 293.0,501.1 294.0,499.8 295.0,501.0 296.0,499.4 297.0,500.4 298.0,499.7 299.0,501.5 300.0,501.5 301.0,503.4 302.0,502.3 303.0,503.7 304.0,499.9 305.0,502.7 306.0,501.3 307.0,503.6 308.0,502.6 309.0,504.8 310.0,502.6 311.0,505.6 312.0,501.7 313.0,501.1 314.0,500.4 315.0,500.1 316.0,497.0 317.0,498.7 318.0,497.2 319.0,499.0 320.0,499.8 321.0,501.1 322.0,502.7 323.0,505.3 324.0,504.2 325.0,506.1 326.0,504.4 327.0,505.8 328.0,504.2 329.0,504.6 330.0,500.8 331.0,500.5 332.0,499.9 333.0,501.2 334.0,500.7 335.0,501.1 336.0,499.2 337.0,502.5 338.0,501.4 339.0,503.3 340.0,502.9 341.0,505.7 342.0,505.6 343.0,507.7 344.0,505.0 345.0,502.8 346.0,500.2 347.0,498.7 348.0,495.8 349.0,495.6 350.0,492.5 351.0,494.4 352.0,492.8 353.0,492.6 354.0,492.0 355.0,490.9 356.0,489.4 357.0,492.3 358.0,493.2 359.0,497.4 360.0,497.9 361.0,503.6 362.0,502.1 363.0,505.4 364.0,507.1 365.0,509.9 366.0,509.3 367.0,511.8 368.0,513.0 369.0,515.3 370.0,515.0 371.0,517.8 372.0,517.0 373.0,519.6 374.0,517.7 375.0,520.7 376.0,517.0 377.0,518.0 378.0,515.3 379.0,516.5 380.0,513.2 381.0,512.5 382.0,509.8 383.0,510.3 384.0,508.2 385.0,510.7 386.0,511.5 387.0,517.1 388.0,517.4 389.0,520.5 390.0,522.0 391.0,525.4 392.0,525.1 393.0,527.2 394.0,526.5 395.0,527.9 396.0,523.6 397.0,525.1 398.0,522.1 399.0,523.2 400.0,519.8 401.0,522.7 402.0,514.2 403.0,508.2 404.0,499.8 405.0,495.0 406.0,489.1 407.0,487.9 408.0,483.3 409.0,483.0 410.0,482.7 411.0,484.2 412.0,480.3 413.0,481.6 414.0,480.0 415.0,485.8 416.0,484.8 417.0,488.1 418.0,488.4 419.0,491.7 420.0,491.4 421.0,492.9 422.0,493.1 423.0,493.8 424.0,492.2 425.0,492.6 426.0,490.7 427.0,490.7 428.0,489.2 429.0,489.8 430.0,486.1 431.0,487.2 432.0,485.0 433.0,485.3 434.0,487.8 435.0,491.2 436.0,489.9 437.0,495.2 438.0,497.2 439.0,500.2 440.0,500.8 441.0,504.6 442.0,505.3 443.0,509.0 444.0,510.0 445.0,512.4 446.0,513.2 447.0,512.7 448.0,511.7 449.0,510.2 450.0,508.3 451.0,506.2 452.0,503.2 453.0,503.5 454.0,505.7 455.0,508.3 456.0,508.1 457.0,510.1 458.0,510.0 459.0,510.9 460.0,510.6 461.0,512.8 462.0,509.7 463.0,510.7 464.0,507.8 465.0,509.6 466.0,508.4 467.0,508.6 468.0,507.1 469.0,506.2 470.0,501.7 471.0,503.6 472.0,500.3 473.0,499.8 474.0,497.0 475.0,497.4 476.0,498.0 477.0,501.1 478.0,500.3 479.0,502.7 480.0,500.4 481.0,504.3 482.0,504.5 483.0,508.5 484.0,507.7 485.0,507.3 486.0,503.6 487.0,504.6 488.0,504.3 489.0,504.1 490.0,501.5 491.0,505.4 492.0,504.1 493.0,506.1 494.0,503.8 495.0,505.8 496.0,504.1 497.0,503.3 498.0,502.2 499.0,502.1 500.0,500.6 501.0,503.3 502.0,505.2 503.0,509.1 504.0,508.6 505.0,511.9 506.0,509.9 507.0,511.4 508.0,509.1 509.0,509.6 510.0,507.3 511.0,509.6 512.0,507.6 513.0,508.8 514.0,508.7 515.0,511.8 516.0,508.4 517.0,506.2 518.0,501.4 519.0,500.3 520.0,498.9 521.0,502.4 522.0,502.7 523.0,503.7 524.0,504.0 525.0,506.9 526.0,504.1 527.0,505.3 528.0,504.5 529.0,507.8 530.0,507.3 531.0,512.2 532.0,512.9 533.0,514.0 534.0,513.9 535.0,514.6 536.0,513.8 537.0,513.2 538.0,511.7 539.0,517.0 540.0,516.4 541.0,518.7 542.0,519.9 543.0,522.6 544.0,522.2 545.0,525.7 546.0,523.0 547.0,525.2 548.0,523.9 549.0,527.0 550.0,524.3 551.0,523.6 552.0,519.8 553.0,518.1 554.0,514.1 555.0,516.6 556.0,515.9 557.0,519.2 558.0,517.7 559.0,521.8 560.0,517.9 561.0,519.3 562.0,514.9 563.0,514.6 564.0,511.3 565.0,513.6 566.0,514.6 567.0,516.4 568.0,514.9 569.0,518.1 570.0,516.0 571.0,517.0 572.0,517.4 573.0,517.7 574.0,514.5 575.0,515.1 576.0,513.2 577.0,513.6 578.0,511.9 579.0,512.6 580.0,510.1 581.0,513.3 582.0,514.1 583.0,515.4 584.0,514.4 585.0,518.4 586.0,518.0 587.0,521.5 588.0,523.7 589.0,528.0 590.0,524.6 591.0,523.6 592.0,520.2 593.0,520.7 594.0,517.4 595.0,518.1 596.0,516.1 597.0,517.5 598.0,514.6 599.0,513.5 600.0,512.0 601.0,511.8 602.0,507.6 603.0,509.2 604.0,509.7 605.0,515.7 606.0,508.1 607.0,504.4 608.0,502.4 609.0,501.1 610.0,499.0 611.0,497.2 612.0,491.9 613.0,492.6 614.0,491.1 615.0,490.9 616.0,487.7 617.0,491.1 618.0,488.3 619.0,488.5 620.0,485.9 621.0,486.4 622.0,485.7 623.0,483.8 624.0,481.9 625.0,480.5 626.0,478.0 627.0,478.3 628.0,473.5 629.0,473.1 630.0,475.0 631.0,479.9 632.0,482.7 633.0,486.5 634.0,487.0 635.0,492.4 636.0,493.7 637.0,494.8 638.0,494.6 639.0,492.8 640.0,490.1 641.0,490.4 642.0,488.4 643.0,488.7 644.0,491.2 645.0,494.7 646.0,496.1 647.0,493.8 648.0,488.9 649.0,489.6 650.0,487.4 651.0,483.7 652.0,478.0 653.0,475.3 654.0,470.4 655.0,472.7 656.0,474.0 657.0,476.8 658.0,475.2 659.0,477.0 660.0,476.6 661.0,479.9 662.0,479.2 663.0,480.0 664.0,479.1 665.0,478.7 666.0,475.5 667.0,474.0 668.0,469.1 669.0,472.6 670.0,472.5 671.0,473.4 672.0,472.6 673.0,471.2 674.0,467.3 675.0,465.4 676.0,462.1 677.0,460.6 678.0,458.7 679.0,460.9 680.0,460.2 681.0,464.4 682.0,465.6 683.0,466.8 684.0,465.3 685.0,466.7 686.0,467.3 687.0,466.5 688.0,463.0 689.0,464.6 690.0,460.5 691.0,459.8 692.0,457.0 693.0,458.7 694.0,459.5 695.0,462.6 696.0,461.7 697.0,455.4 698.0,447.8 699.0,442.0 700.0,432.2 701.0,433.9 702.0,435.9 703.0,436.0 704.0,437.0 705.0,436.8 706.0,436.2 707.0,438.1 708.0,438.6 709.0,444.3 710.0,447.5 711.0,451.5 712.0,452.0 713.0,454.2 714.0,449.0 715.0,445.1 716.0,439.2 717.0,437.5 718.0,434.7 719.0,432.4 720.0,428.9 721.0,431.5 722.0,431.8 723.0,434.1 724.0,433.9 725.0,434.4 726.0,429.2 727.0,429.5 728.0,425.3 729.0,425.1 730.0,425.8 731.0,428.1 732.0,426.8 733.0,431.1 734.0,430.3 735.0,436.3 736.0,439.1 737.0,443.3 738.0,444.0 739.0,440.9 740.0,437.8 741.0,438.5 742.0,435.5 743.0,438.1 744.0,440.3 745.0,443.9 746.0,444.4 747.0,441.8 748.0,439.2 749.0,435.1 750.0,431.1 751.0,431.1 752.0,432.5 753.0,435.3 754.0,436.1 755.0,435.2 756.0,430.0 757.0,427.4 758.0,423.2 759.0,425.6 760.0,425.1 761.0,425.1 762.0,425.8 763.0,426.4 764.0,423.7 765.0,423.9 766.0,421.8 767.0,423.5 768.0,422.6 769.0,425.8 770.0,423.7 771.0,427.1 772.0,428.3 773.0,429.1 774.0,429.4 775.0,432.0 776.0,431.7 777.0,434.9 778.0,433.8 779.0,431.0 780.0,428.4 781.0,428.3 782.0,425.0 783.0,423.6 784.0,426.3 785.0,429.8 786.0,430.7 787.0,434.4 788.0,431.3 789.0,431.8 790.0,429.9 791.0,428.6 792.0,428.6 793.0,430.9 794.0,431.7 795.0,436.3 796.0,436.2 797.0,439.0 798.0,441.6 799.0,442.9 800.0,445.1 801.0,448.7 802.0,444.9 803.0,440.8 804.0,436.8 805.0,436.4 806.0,436.9 807.0,440.5 808.0,438.4 809.0,439.6 810.0,435.5 811.0,437.7 812.0,434.4 813.0,434.9 814.0,430.9 815.0,431.6 816.0,427.1 817.0,427.1 818.0,425.0 819.0,425.0 820.0,422.5 821.0,424.4 822.0,421.2 823.0,423.5 824.0,424.4 825.0,428.0 826.0,428.4 827.0,430.7 828.0,428.5 829.0,428.2 830.0,425.6 831.0,426.4 832.0,424.0 833.0,427.1 834.0,426.3 835.0,428.9 836.0,425.8 837.0,427.2 838.0,426.6 839.0,429.0 840.0,426.7 841.0,427.5 842.0,425.4 843.0,424.7 844.0,421.2 845.0,422.1 846.0,420.3 847.0,422.8 848.0,423.6 849.0,420.3 850.0,415.1 851.0,413.1 852.0,412.3 853.0,413.7 854.0,413.5 855.0,418.6 856.0,417.8 857.0,420.6 858.0,420.1 859.0,422.8 860.0,421.5 861.0,426.9 862.0,426.5 863.0,430.2 864.0,432.0 865.0,436.2 866.0,437.7 867.0,437.6 868.0,433.3 869.0,428.7 870.0,425.0 871.0,421.1 872.0,421.2 873.0,423.6 874.0,422.2 875.0,423.3 876.0,422.3 877.0,424.9 878.0,423.3 879.0,425.3 880.0,423.0 881.0,424.8 882.0,422.3 883.0,425.3 884.0,424.1 885.0,424.4 886.0,421.3 887.0,421.0 888.0,419.9 889.0,422.5 890.0,422.8 891.0,423.9 892.0,425.5 893.0,423.9 894.0,420.3 895.0,419.3 896.0,412.9 897.0,410.9 898.0,408.2 899.0,409.2 900.0,407.2 901.0,406.1 902.0,403.8 903.0,404.6 904.0,403.7 905.0,407.0 906.0,405.6 907.0,406.8 908.0,403.9 909.0,403.4 910.0,400.9 911.0,401.8 912.0,398.7 913.0,398.7 914.0,398.8 915.0,398.9 916.0,398.4 917.0,400.6 918.0,400.1 919.0,401.3 920.0,399.0 921.0,404.2 922.0,401.6 923.0,403.8 924.0,400.0 925.0,400.8 926.0,397.7 927.0,397.3 928.0,397.0 929.0,398.7 930.0,397.6 931.0,397.1 932.0,395.9 933.0,399.6 934.0,401.6 935.0,405.0 936.0,403.8 937.0,408.0 938.0,404.5 939.0,403.1 940.0,400.6 941.0,400.0 942.0,396.8 943.0,397.8 944.0,396.8 945.0,398.0 946.0,396.9 947.0,398.8 948.0,397.8 949.0,401.5 950.0,401.6 951.0,403.8 952.0,402.0 953.0,403.9 954.0,402.7 955.0,404.2 956.0,403.3 957.0,404.2 958.0,402.0 959.0,405.5 960.0,405.5 961.0,407.4 962.0,408.2 963.0,411.1 964.0,408.7 965.0,411.6 966.0,410.7 967.0,412.7 968.0,410.0 969.0,410.0 970.0,406.2 971.0,406.8" fill="none" stroke="#ff0000" stroke-width="1.8" stroke-linejoin="miter"/>
</g>
<g shape-rendering="auto">
<path transform="translate(5.85,42.30) scale(0.900,0.900)" d="M0.5 2H3.5V8H0.5ZM0.5 5H3.5M4.5 2.5H9.5M7 0.5V4.5M4.4 4.5H9.6M4.4 6.2H9.6M8.2 4.5V9.5L7 9.2M5.6 7.2L6.6 8.4" fill="none" stroke="#b8b8b8" stroke-width="0.94" stroke-linecap="square"/>
<path transform="translate(15.75,42.30) scale(0.900,0.900)" d="M3 0.3V1.5M0.5 1.8H6M3.5 2L1 4.5H4.5L0.8 8.2M3 6L5.5 9.3M4.8 4L2.5 6.5M7.2 1.2V7M9 0.4V9.5L8 9.2" fill="none" stroke="#b8b8b8" stroke-width="0.94" stroke-linecap="square"/>
<path transform="translate(60.30,42.30) scale(0.900,0.900)" d="M2.2 0.4L0.8 6.6M0.4 3.4H4M3.2 3.4Q2.8 7 0.6 9.4M1.2 5.6L3.8 8.6M6.8 0.5L5 4H9.2M8.2 2.8L9.6 4.4M5.4 5.6H9V9.2H5.4Z" fill="none" stroke="#b8b8b8" stroke-width="0.94" stroke-linecap="square"/>
<path transform="translate(70.20,42.30) scale(0.900,0.900)" d="M2.2 0.4L0.5 4M1.5 2.8V9.6M3.2 1.6H9.6M6.4 0.2V3M4.2 3H8.2V8H4.2ZM4.2 4.7H8.2M4.2 6.3H8.2M3.2 2V9.4H9.6" fill="none" stroke="#b8b8b8" stroke-width="0.94" stroke-linecap="square"/>
<path transform="translate(119.70,42.30) scale(0.900,0.900)" d="M5 0V1M0.5 1.3H9.5M3 2.5H7V4H3ZM1 5.1H9V9.4L8.2 9.2M1 5.1V9.6M3.6 6.6H6.4V8.4H3.6Z" fill="none" stroke="#b8b8b8" stroke-width="0.94" stroke-linecap="square"/>
<path transform="translate(129.60,42.30) scale(0.900,0.900)" d="M2.2 0.4L0.5 4M1.5 2.8V9.6M3.2 1.6H9.6M6.4 0.2V3M4.2 3H8.2V8H4.2ZM4.2 4.7H8.2M4.2 6.3H8.2M3.2 2V9.4H9.6" fill="none" stroke="#b8b8b8" stroke-width="0.94" stroke-linecap="square"/>
<path transform="translate(179.10,42.30) scale(0.900,0.900)" d="M5 0V1.2M0.8 3V1.5H9.2V3M0.5 6H9.5M4.2 3.4Q3 7 2 8.2Q6 8.6 8.6 9.6M7 6Q6.5 8.5 3.2 9.6" fill="none" stroke="#b8b8b8" stroke-width="0.94" stroke-linecap="square"/>
<path transform="translate(189.00,42.30) scale(0.900,0.900)" d="M2.2 0.4L0.5 4M1.5 2.8V9.6M3.2 1.6H9.6M6.4 0.2V3M4.2 3H8.2V8H4.2ZM4.2 4.7H8.2M4.2 6.3H8.2M3.2 2V9.4H9.6" fill="none" stroke="#b8b8b8" stroke-width="0.94" stroke-linecap="square"/>
<path transform="translate(238.50,42.30) scale(0.900,0.900)" d="M2.6 0.4L0.6 3.4H3M3.2 1.8L0.6 6H3.6M2.6 4.6L3.6 5.6M2 6V9.6M0.4 7.6L1 8.6M3.4 7.4L3.9 8.4M6 0.4L4.6 3M5.4 1.6H9L5 5.8M6.2 3L9.6 5.8M6.4 6.8L7.6 7.6M5.8 8.4L7.8 9.4" fill="none" stroke="#b8b8b8" stroke-width="0.94" stroke-linecap="square"/>
<path transform="translate(248.40,42.30) scale(0.900,0.900)" d="M2.2 0.4L0.5 4M1.5 2.8V9.6M3.2 1.6H9.6M6.4 0.2V3M4.2 3H8.2V8H4.2ZM4.2 4.7H8.2M4.2 6.3H8.2M3.2 2V9.4H9.6" fill="none" stroke="#b8b8b8" stroke-width="0.94" stroke-linecap="square"/>
<text transform="scale(0.72,1)" x="38.44 45.31 52.19 59.06 65.94 72.81 114.06 120.94 127.81 134.69 141.56 148.44 155.31 196.56 203.44 210.31 217.19 224.06 230.94 237.81 279.06 285.94 292.81 299.69 306.56 313.44 320.31 361.56 368.44 375.31 382.19 389.06 395.94 402.81" y="50.80" font-family="Liberation Sans" font-size="11" font-weight="normal" fill="#b8b8b8" text-anchor="middle">:06:00:13,701:13,701:13,701:13,701</text>
<path transform="translate(5.85,210.30) scale(0.900,0.900)" d="M0.5 2H3.5V8H0.5ZM0.5 5H3.5M4.5 2.5H9.5M7 0.5V4.5M4.4 4.5H9.6M4.4 6.2H9.6M8.2 4.5V9.5L7 9.2M5.6 7.2L6.6 8.4" fill="none" stroke="#b8b8b8" stroke-width="0.94" stroke-linecap="square"/>
<path transform="translate(15.75,210.30) scale(0.900,0.900)" d="M3 0.3V1.5M0.5 1.8H6M3.5 2L1 4.5H4.5L0.8 8.2M3 6L5.5 9.3M4.8 4L2.5 6.5M7.2 1.2V7M9 0.4V9.5L8 9.2" fill="none" stroke="#b8b8b8" stroke-width="0.94" stroke-linecap="square"/>
<path transform="translate(60.30,210.30) scale(0.900,0.900)" d="M2.2 0.4L0.8 6.6M0.4 3.4H4M3.2 3.4Q2.8 7 0.6 9.4M1.2 5.6L3.8 8.6M6.8 0.5L5 4H9.2M8.2 2.8L9.6 4.4M5.4 5.6H9V9.2H5.4Z" fill="none" stroke="#b8b8b8" stroke-width="0.94" stroke-linecap="square"/>
<path transform="translate(70.20,210.30) scale(0.900,0.900)" d="M2.2 0.4L0.5 4M1.5 2.8V9.6M3.2 1.6H9.6M6.4 0.2V3M4.2 3H8.2V8H4.2ZM4.2 4.7H8.2M4.2 6.3H8.2M3.2 2V9.4H9.6" fill="none" stroke="#b8b8b8" stroke-width="0.94" stroke-linecap="square"/>
<path transform="translate(114.75,210.30) scale(0.900,0.900)" d="M5 0V1M0.5 1.3H9.5M3 2.5H7V4H3ZM1 5.1H9V9.4L8.2 9.2M1 5.1V9.6M3.6 6.6H6.4V8.4H3.6Z" fill="none" stroke="#b8b8b8" stroke-width="0.94" stroke-linecap="square"/>
<path transform="translate(124.65,210.30) scale(0.900,0.900)" d="M2.2 0.4L0.5 4M1.5 2.8V9.6M3.2 1.6H9.6M6.4 0.2V3M4.2 3H8.2V8H4.2ZM4.2 4.7H8.2M4.2 6.3H8.2M3.2 2V9.4H9.6" fill="none" stroke="#b8b8b8" stroke-width="0.94" stroke-linecap="square"/>
<path transform="translate(169.20,210.30) scale(0.900,0.900)" d="M5 0V1.2M0.8 3V1.5H9.2V3M0.5 6H9.5M4.2 3.4Q3 7 2 8.2Q6 8.6 8.6 9.6M7 6Q6.5 8.5 3.2 9.6" fill="none" stroke="#b8b8b8" stroke-width="0.94" stroke-linecap="square"/>
<path transform="translate(179.10,210.30) scale(0.900,0.900)" d="M2.2 0.4L0.5 4M1.5 2.8V9.6M3.2 1.6H9.6M6.4 0.2V3M4.2 3H8.2V8H4.2ZM4.2 4.7H8.2M4.2 6.3H8.2M3.2 2V9.4H9.6" fill="none" stroke="#b8b8b8" stroke-width="0.94" stroke-linecap="square"/>
<path transform="translate(223.65,210.30) scale(0.900,0.900)" d="M2.6 0.4L0.6 3.4H3M3.2 1.8L0.6 6H3.6M2.6 4.6L3.6 5.6M2 6V9.6M0.4 7.6L1 8.6M3.4 7.4L3.9 8.4M6 0.4L4.6 3M5.4 1.6H9L5 5.8M6.2 3L9.6 5.8M6.4 6.8L7.6 7.6M5.8 8.4L7.8 9.4" fill="none" stroke="#b8b8b8" stroke-width="0.94" stroke-linecap="square"/>
<path transform="translate(233.55,210.30) scale(0.900,0.900)" d="M2.2 0.4L0.5 4M1.5 2.8V9.6M3.2 1.6H9.6M6.4 0.2V3M4.2 3H8.2V8H4.2ZM4.2 4.7H8.2M4.2 6.3H8.2M3.2 2V9.4H9.6" fill="none" stroke="#b8b8b8" stroke-width="0.94" stroke-linecap="square"/>
<text transform="scale(0.72,1)" x="38.44 45.31 52.19 59.06 65.94 72.81 114.06 120.94 127.81 134.69 141.56 148.44 189.69 196.56 203.44 210.31 217.19 224.06 265.31 272.19 279.06 285.94 292.81 299.69 340.94 347.81 354.69 361.56 368.44 375.31" y="218.80" font-family="Liberation Sans" font-size="11" font-weight="normal" fill="#b8b8b8" text-anchor="middle">:06:00:5,155:5,155:5,155:5,155</text>
<path transform="translate(10.50,392.30) scale(0.900,0.900)" d="M5 0.5L0.5 4.2M5 0.5L9.5 4.2M2.5 4.6H7.5M1.8 6.5H8.2M5 4.6V9.2M3 7.3L3.8 8.5M7 7.3L6.2 8.5M0.6 9.3H9.4" fill="none" stroke="#b8b8b8" stroke-width="0.94" stroke-linecap="square"/>
<text transform="scale(0.72,1)" x="10.42 38.19 45.14 52.08 59.03 65.97 79.86 86.81 93.75 100.69 107.64 114.58" y="400.80" font-family="Liberation Sans" font-size="11" font-weight="normal" fill="#b8b8b8" text-anchor="middle">[25/0813,701</text>
<path d="M86.8 394L91.4 399.6M91.4 394L86.8 399.6" stroke="#b8b8b8" stroke-width="0.9" fill="none"/>
<text transform="scale(0.72,1)" x="132.22 139.17 146.11 153.06 160.00" y="400.80" font-family="Liberation Sans" font-size="11" font-weight="normal" fill="#b8b8b8" text-anchor="middle">1.00]</text>
<rect x="121" y="396.3" width="6" height="1" fill="#b8b8b8"/>
<path transform="translate(135.75,392.30) scale(0.900,0.900)" d="M5 0L4 1.5M2 1.6H8V9.5H2ZM2 5.4H8" fill="none" stroke="#b8b8b8" stroke-width="0.94" stroke-linecap="square"/>
<path transform="translate(145.25,392.30) scale(0.900,0.900)" d="M5 0.5L0.5 4.2M5 0.5L9.5 4.2M2.5 4.6H7.5M1.8 6.5H8.2M5 4.6V9.2M3 7.3L3.8 8.5M7 7.3L6.2 8.5M0.6 9.3H9.4" fill="none" stroke="#b8b8b8" stroke-width="0.94" stroke-linecap="square"/>
<text transform="scale(0.72,1)" x="184.72" y="400.80" font-family="Liberation Sans" font-size="11" font-weight="normal" fill="#b8b8b8" text-anchor="middle">[</text>
<text transform="scale(0.72,1)" x="224.17 230.83 237.50 244.17 250.83 264.17 270.83 277.50 284.17 290.83" y="400.80" font-family="Liberation Sans" font-size="11" font-weight="normal" fill="#b8b8b8" text-anchor="middle">25/085,155</text>
<path d="M214.8 394L220.6 399.6M220.6 394L214.8 399.6" stroke="#b8b8b8" stroke-width="0.9" fill="none"/>
<text transform="scale(0.72,1)" x="312.29 319.10 325.90 332.71 339.51" y="400.80" font-family="Liberation Sans" font-size="11" font-weight="normal" fill="#b8b8b8" text-anchor="middle">1.00]</text>
<path transform="translate(251.90,392.30) scale(0.900,0.900)" d="M2.6 0.4L0.6 3.4H3M3.2 1.8L0.6 6H3.6M2.6 4.6L3.6 5.6M2 6V9.6M0.4 7.6L1 8.6M3.4 7.4L3.9 8.4M6 0.4L4.6 3M5.4 1.6H9L5 5.8M6.2 3L9.6 5.8M6.4 6.8L7.6 7.6M5.8 8.4L7.8 9.4" fill="none" stroke="#b8b8b8" stroke-width="0.94" stroke-linecap="square"/>
<path transform="translate(261.90,392.30) scale(0.900,0.900)" d="M2.2 0.4L0.5 4M1.5 2.8V9.6M3.2 1.6H9.6M6.4 0.2V3M4.2 3H8.2V8H4.2ZM4.2 4.7H8.2M4.2 6.3H8.2M3.2 2V9.4H9.6" fill="none" stroke="#b8b8b8" stroke-width="0.94" stroke-linecap="square"/>
<path transform="translate(276.25,392.30) scale(0.900,0.900)" d="M0.5 2H3.5V8H0.5ZM0.5 5H3.5M4.5 2.5H9.5M7 0.5V4.5M4.4 4.5H9.6M4.4 6.2H9.6M8.2 4.5V9.5L7 9.2M5.6 7.2L6.6 8.4" fill="none" stroke="#b8b8b8" stroke-width="0.94" stroke-linecap="square"/>
<path transform="translate(285.75,392.30) scale(0.900,0.900)" d="M3 0.3V1.5M0.5 1.8H6M3.5 2L1 4.5H4.5L0.8 8.2M3 6L5.5 9.3M4.8 4L2.5 6.5M7.2 1.2V7M9 0.4V9.5L8 9.2" fill="none" stroke="#b8b8b8" stroke-width="0.94" stroke-linecap="square"/>
<text transform="scale(0.72,1)" x="415.83 422.50 429.17 435.83 442.50 449.17" y="400.80" font-family="Liberation Sans" font-size="11" font-weight="normal" fill="#b8b8b8" text-anchor="middle">:06:00</text>
<text transform="scale(0.72,1)" x="462.82 469.85 476.87 483.90 490.93" y="400.80" font-family="Liberation Sans" font-size="11" font-weight="normal" fill="#b8b8b8" text-anchor="middle">8,546</text>
<g clip-path="url(#cp0)">
<text transform="scale(0.68,1)" x="55.88 63.82" y="199.00" font-family="Liberation Sans" font-size="11" font-weight="normal" fill="#c8c8c8" text-anchor="middle">04</text>
<text transform="scale(0.68,1)" x="99.26 107.21" y="199.00" font-family="Liberation Sans" font-size="11" font-weight="normal" fill="#c8c8c8" text-anchor="middle">05</text>
<text transform="scale(0.68,1)" x="119.85 127.79" y="199.00" font-family="Liberation Sans" font-size="11" font-weight="bold" fill="#f0f0f0" text-anchor="middle">06</text>
<text transform="scale(0.68,1)" x="156.62 164.56" y="199.00" font-family="Liberation Sans" font-size="11" font-weight="normal" fill="#c8c8c8" text-anchor="middle">09</text>
<text transform="scale(0.68,1)" x="228.68 236.62" y="199.00" font-family="Liberation Sans" font-size="11" font-weight="normal" fill="#c8c8c8" text-anchor="middle">10</text>
<text transform="scale(0.68,1)" x="299.26 307.21" y="199.00" font-family="Liberation Sans" font-size="11" font-weight="normal" fill="#c8c8c8" text-anchor="middle">11</text>
<text transform="scale(0.68,1)" x="371.32 379.26" y="199.00" font-family="Liberation Sans" font-size="11" font-weight="normal" fill="#c8c8c8" text-anchor="middle">12</text>
<text transform="scale(0.68,1)" x="443.38 451.32" y="199.00" font-family="Liberation Sans" font-size="11" font-weight="normal" fill="#c8c8c8" text-anchor="middle">13</text>
<text transform="scale(0.68,1)" x="513.97 521.91" y="199.00" font-family="Liberation Sans" font-size="11" font-weight="normal" fill="#c8c8c8" text-anchor="middle">14</text>
<text transform="scale(0.68,1)" x="565.44 573.38" y="199.00" font-family="Liberation Sans" font-size="11" font-weight="normal" fill="#c8c8c8" text-anchor="middle">15</text>
<text transform="scale(0.68,1)" x="597.79 605.74" y="199.00" font-family="Liberation Sans" font-size="11" font-weight="normal" fill="#c8c8c8" text-anchor="middle">16</text>
<text transform="scale(0.68,1)" x="633.09 641.03" y="199.00" font-family="Liberation Sans" font-size="11" font-weight="normal" fill="#c8c8c8" text-anchor="middle">17</text>
<text transform="scale(0.68,1)" x="703.68 711.62" y="199.00" font-family="Liberation Sans" font-size="11" font-weight="normal" fill="#c8c8c8" text-anchor="middle">18</text>
<text transform="scale(0.68,1)" x="774.26 782.21" y="199.00" font-family="Liberation Sans" font-size="11" font-weight="normal" fill="#c8c8c8" text-anchor="middle">19</text>
<text transform="scale(0.68,1)" x="840.44 848.38" y="199.00" font-family="Liberation Sans" font-size="11" font-weight="normal" fill="#c8c8c8" text-anchor="middle">20</text>
<text transform="scale(0.68,1)" x="911.03 918.97" y="199.00" font-family="Liberation Sans" font-size="11" font-weight="normal" fill="#c8c8c8" text-anchor="middle">21</text>
<text transform="scale(0.68,1)" x="980.15 988.09" y="199.00" font-family="Liberation Sans" font-size="11" font-weight="normal" fill="#c8c8c8" text-anchor="middle">22</text>
<text transform="scale(0.68,1)" x="1050.74 1058.68" y="199.00" font-family="Liberation Sans" font-size="11" font-weight="normal" fill="#c8c8c8" text-anchor="middle">23</text>
<text transform="scale(0.68,1)" x="1120.59 1128.53" y="199.00" font-family="Liberation Sans" font-size="11" font-weight="normal" fill="#c8c8c8" text-anchor="middle">00</text>
<text transform="scale(0.68,1)" x="1191.91 1199.85" y="199.00" font-family="Liberation Sans" font-size="11" font-weight="normal" fill="#c8c8c8" text-anchor="middle">01</text>
<text transform="scale(0.68,1)" x="1253.68 1261.62" y="199.00" font-family="Liberation Sans" font-size="11" font-weight="normal" fill="#c8c8c8" text-anchor="middle">02</text>
<text transform="scale(0.68,1)" x="1308.09 1316.03" y="199.00" font-family="Liberation Sans" font-size="11" font-weight="normal" fill="#c8c8c8" text-anchor="middle">03</text>
<text transform="scale(0.68,1)" x="1363.97 1371.91" y="199.00" font-family="Liberation Sans" font-size="11" font-weight="normal" fill="#c8c8c8" text-anchor="middle">04</text>
<text transform="scale(0.68,1)" x="1405.59 1413.53" y="199.00" font-family="Liberation Sans" font-size="11" font-weight="normal" fill="#c8c8c8" text-anchor="middle">05</text>
<text transform="scale(0.68,1)" x="1412.94 1420.88" y="199.00" font-family="Liberation Sans" font-size="11" font-weight="normal" fill="#c8c8c8" text-anchor="middle">06</text>
<text transform="scale(0.68,1)" x="1120.66 1128.75" y="186.80" font-family="Liberation Sans" font-size="11" font-weight="normal" fill="#c8c8c8" text-anchor="middle">30</text>
</g>
<g clip-path="url(#cp1)">
<text transform="scale(0.68,1)" x="55.88 63.82" y="381.00" font-family="Liberation Sans" font-size="11" font-weight="normal" fill="#c8c8c8" text-anchor="middle">04</text>
<text transform="scale(0.68,1)" x="99.26 107.21" y="381.00" font-family="Liberation Sans" font-size="11" font-weight="normal" fill="#c8c8c8" text-anchor="middle">05</text>
<text transform="scale(0.68,1)" x="119.85 127.79" y="381.00" font-family="Liberation Sans" font-size="11" font-weight="bold" fill="#f0f0f0" text-anchor="middle">06</text>
<text transform="scale(0.68,1)" x="156.62 164.56" y="381.00" font-family="Liberation Sans" font-size="11" font-weight="normal" fill="#c8c8c8" text-anchor="middle">09</text>
<text transform="scale(0.68,1)" x="228.68 236.62" y="381.00" font-family="Liberation Sans" font-size="11" font-weight="normal" fill="#c8c8c8" text-anchor="middle">10</text>
<text transform="scale(0.68,1)" x="299.26 307.21" y="381.00" font-family="Liberation Sans" font-size="11" font-weight="normal" fill="#c8c8c8" text-anchor="middle">11</text>
<text transform="scale(0.68,1)" x="371.32 379.26" y="381.00" font-family="Liberation Sans" font-size="11" font-weight="normal" fill="#c8c8c8" text-anchor="middle">12</text>
<text transform="scale(0.68,1)" x="443.38 451.32" y="381.00" font-family="Liberation Sans" font-size="11" font-weight="normal" fill="#c8c8c8" text-anchor="middle">13</text>
<text transform="scale(0.68,1)" x="513.97 521.91" y="381.00" font-family="Liberation Sans" font-size="11" font-weight="normal" fill="#c8c8c8" text-anchor="middle">14</text>
<text transform="scale(0.68,1)" x="565.44 573.38" y="381.00" font-family="Liberation Sans" font-size="11" font-weight="normal" fill="#c8c8c8" text-anchor="middle">15</text>
<text transform="scale(0.68,1)" x="597.79 605.74" y="381.00" font-family="Liberation Sans" font-size="11" font-weight="normal" fill="#c8c8c8" text-anchor="middle">16</text>
<text transform="scale(0.68,1)" x="633.09 641.03" y="381.00" font-family="Liberation Sans" font-size="11" font-weight="normal" fill="#c8c8c8" text-anchor="middle">17</text>
<text transform="scale(0.68,1)" x="703.68 711.62" y="381.00" font-family="Liberation Sans" font-size="11" font-weight="normal" fill="#c8c8c8" text-anchor="middle">18</text>
<text transform="scale(0.68,1)" x="774.26 782.21" y="381.00" font-family="Liberation Sans" font-size="11" font-weight="normal" fill="#c8c8c8" text-anchor="middle">19</text>
<text transform="scale(0.68,1)" x="840.44 848.38" y="381.00" font-family="Liberation Sans" font-size="11" font-weight="normal" fill="#c8c8c8" text-anchor="middle">20</text>
<text transform="scale(0.68,1)" x="911.03 918.97" y="381.00" font-family="Liberation Sans" font-size="11" font-weight="normal" fill="#c8c8c8" text-anchor="middle">21</text>
<text transform="scale(0.68,1)" x="980.15 988.09" y="381.00" font-family="Liberation Sans" font-size="11" font-weight="normal" fill="#c8c8c8" text-anchor="middle">22</text>
<text transform="scale(0.68,1)" x="1050.74 1058.68" y="381.00" font-family="Liberation Sans" font-size="11" font-weight="normal" fill="#c8c8c8" text-anchor="middle">23</text>
<text transform="scale(0.68,1)" x="1120.59 1128.53" y="381.00" font-family="Liberation Sans" font-size="11" font-weight="normal" fill="#c8c8c8" text-anchor="middle">00</text>
<text transform="scale(0.68,1)" x="1191.91 1199.85" y="381.00" font-family="Liberation Sans" font-size="11" font-weight="normal" fill="#c8c8c8" text-anchor="middle">01</text>
<text transform="scale(0.68,1)" x="1253.68 1261.62" y="381.00" font-family="Liberation Sans" font-size="11" font-weight="normal" fill="#c8c8c8" text-anchor="middle">02</text>
<text transform="scale(0.68,1)" x="1308.09 1316.03" y="381.00" font-family="Liberation Sans" font-size="11" font-weight="normal" fill="#c8c8c8" text-anchor="middle">03</text>
<text transform="scale(0.68,1)" x="1363.97 1371.91" y="381.00" font-family="Liberation Sans" font-size="11" font-weight="normal" fill="#c8c8c8" text-anchor="middle">04</text>
<text transform="scale(0.68,1)" x="1405.59 1413.53" y="381.00" font-family="Liberation Sans" font-size="11" font-weight="normal" fill="#c8c8c8" text-anchor="middle">05</text>
<text transform="scale(0.68,1)" x="1412.94 1420.88" y="381.00" font-family="Liberation Sans" font-size="11" font-weight="normal" fill="#c8c8c8" text-anchor="middle">06</text>
<text transform="scale(0.68,1)" x="1120.66 1128.75" y="368.80" font-family="Liberation Sans" font-size="11" font-weight="normal" fill="#c8c8c8" text-anchor="middle">30</text>
</g>
<g clip-path="url(#cp2)">
<text transform="scale(0.68,1)" x="55.88 63.82" y="545.00" font-family="Liberation Sans" font-size="11" font-weight="normal" fill="#c8c8c8" text-anchor="middle">04</text>
<text transform="scale(0.68,1)" x="99.26 107.21" y="545.00" font-family="Liberation Sans" font-size="11" font-weight="normal" fill="#c8c8c8" text-anchor="middle">05</text>
<text transform="scale(0.68,1)" x="119.85 127.79" y="545.00" font-family="Liberation Sans" font-size="11" font-weight="bold" fill="#f0f0f0" text-anchor="middle">06</text>
<text transform="scale(0.68,1)" x="156.62 164.56" y="545.00" font-family="Liberation Sans" font-size="11" font-weight="normal" fill="#c8c8c8" text-anchor="middle">09</text>
<text transform="scale(0.68,1)" x="228.68 236.62" y="545.00" font-family="Liberation Sans" font-size="11" font-weight="normal" fill="#c8c8c8" text-anchor="middle">10</text>
<text transform="scale(0.68,1)" x="299.26 307.21" y="545.00" font-family="Liberation Sans" font-size="11" font-weight="normal" fill="#c8c8c8" text-anchor="middle">11</text>
<text transform="scale(0.68,1)" x="371.32 379.26" y="545.00" font-family="Liberation Sans" font-size="11" font-weight="normal" fill="#c8c8c8" text-anchor="middle">12</text>
<text transform="scale(0.68,1)" x="443.38 451.32" y="545.00" font-family="Liberation Sans" font-size="11" font-weight="normal" fill="#c8c8c8" text-anchor="middle">13</text>
<text transform="scale(0.68,1)" x="513.97 521.91" y="545.00" font-family="Liberation Sans" font-size="11" font-weight="normal" fill="#c8c8c8" text-anchor="middle">14</text>
<text transform="scale(0.68,1)" x="565.44 573.38" y="545.00" font-family="Liberation Sans" font-size="11" font-weight="normal" fill="#c8c8c8" text-anchor="middle">15</text>
<text transform="scale(0.68,1)" x="597.79 605.74" y="545.00" font-family="Liberation Sans" font-size="11" font-weight="normal" fill="#c8c8c8" text-anchor="middle">16</text>
<text transform="scale(0.68,1)" x="633.09 641.03" y="545.00" font-family="Liberation Sans" font-size="11" font-weight="normal" fill="#c8c8c8" text-anchor="middle">17</text>
<text transform="scale(0.68,1)" x="703.68 711.62" y="545.00" font-family="Liberation Sans" font-size="11" font-weight="normal" fill="#c8c8c8" text-anchor="middle">18</text>
<text transform="scale(0.68,1)" x="774.26 782.21" y="545.00" font-family="Liberation Sans" font-size="11" font-weight="normal" fill="#c8c8c8" text-anchor="middle">19</text>
<text transform="scale(0.68,1)" x="840.44 848.38" y="545.00" font-family="Liberation Sans" font-size="11" font-weight="normal" fill="#c8c8c8" text-anchor="middle">20</text>
<text transform="scale(0.68,1)" x="911.03 918.97" y="545.00" font-family="Liberation Sans" font-size="11" font-weight="normal" fill="#c8c8c8" text-anchor="middle">21</text>
<text transform="scale(0.68,1)" x="980.15 988.09" y="545.00" font-family="Liberation Sans" font-size="11" font-weight="normal" fill="#c8c8c8" text-anchor="middle">22</text>
<text transform="scale(0.68,1)" x="1050.74 1058.68" y="545.00" font-family="Liberation Sans" font-size="11" font-weight="normal" fill="#c8c8c8" text-anchor="middle">23</text>
<text transform="scale(0.68,1)" x="1120.59 1128.53" y="545.00" font-family="Liberation Sans" font-size="11" font-weight="normal" fill="#c8c8c8" text-anchor="middle">00</text>
<text transform="scale(0.68,1)" x="1191.91 1199.85" y="545.00" font-family="Liberation Sans" font-size="11" font-weight="normal" fill="#c8c8c8" text-anchor="middle">01</text>
<text transform="scale(0.68,1)" x="1253.68 1261.62" y="545.00" font-family="Liberation Sans" font-size="11" font-weight="normal" fill="#c8c8c8" text-anchor="middle">02</text>
<text transform="scale(0.68,1)" x="1308.09 1316.03" y="545.00" font-family="Liberation Sans" font-size="11" font-weight="normal" fill="#c8c8c8" text-anchor="middle">03</text>
<text transform="scale(0.68,1)" x="1363.97 1371.91" y="545.00" font-family="Liberation Sans" font-size="11" font-weight="normal" fill="#c8c8c8" text-anchor="middle">04</text>
<text transform="scale(0.68,1)" x="1405.59 1413.53" y="545.00" font-family="Liberation Sans" font-size="11" font-weight="normal" fill="#c8c8c8" text-anchor="middle">05</text>
<text transform="scale(0.68,1)" x="1412.94 1420.88" y="545.00" font-family="Liberation Sans" font-size="11" font-weight="normal" fill="#c8c8c8" text-anchor="middle">06</text>
<text transform="scale(0.68,1)" x="1120.66 1128.75" y="532.80" font-family="Liberation Sans" font-size="11" font-weight="normal" fill="#c8c8c8" text-anchor="middle">30</text>
</g>
<g clip-path="url(#cp0)">
<text transform="scale(0.72,1)" x="1355.56 1362.50 1369.44 1376.39 1383.33 1390.28" y="98.80" font-family="Liberation Sans" font-size="11" font-weight="normal" fill="#c8c8c8" text-anchor="middle">13,650</text>
<text transform="scale(0.72,1)" x="1355.56 1362.50 1369.44 1376.39 1383.33 1390.28" y="135.50" font-family="Liberation Sans" font-size="11" font-weight="normal" fill="#c8c8c8" text-anchor="middle">13,600</text>
<text transform="scale(0.72,1)" x="1355.56 1362.50 1369.44 1376.39 1383.33 1390.28" y="172.20" font-family="Liberation Sans" font-size="11" font-weight="normal" fill="#c8c8c8" text-anchor="middle">13,550</text>
<text transform="scale(0.72,1)" x="1355.56 1362.50 1369.44 1376.39 1383.33 1390.28" y="209.50" font-family="Liberation Sans" font-size="11" font-weight="normal" fill="#c8c8c8" text-anchor="middle">13,500</text>
</g><g clip-path="url(#cp1)">
<text transform="scale(0.72,1)" x="1355.56 1362.50 1369.44 1376.39 1383.33" y="225.10" font-family="Liberation Sans" font-size="11" font-weight="normal" fill="#c8c8c8" text-anchor="middle">5,175</text>
<text transform="scale(0.72,1)" x="1355.56 1362.50 1369.44 1376.39 1383.33" y="258.40" font-family="Liberation Sans" font-size="11" font-weight="normal" fill="#c8c8c8" text-anchor="middle">5,150</text>
<text transform="scale(0.72,1)" x="1355.56 1362.50 1369.44 1376.39 1383.33" y="291.90" font-family="Liberation Sans" font-size="11" font-weight="normal" fill="#c8c8c8" text-anchor="middle">5,125</text>
<text transform="scale(0.72,1)" x="1355.56 1362.50 1369.44 1376.39 1383.33" y="325.40" font-family="Liberation Sans" font-size="11" font-weight="normal" fill="#c8c8c8" text-anchor="middle">5,100</text>
<text transform="scale(0.72,1)" x="1355.56 1362.50 1369.44 1376.39 1383.33" y="358.70" font-family="Liberation Sans" font-size="11" font-weight="normal" fill="#c8c8c8" text-anchor="middle">5,075</text>
<text transform="scale(0.72,1)" x="1355.56 1362.50 1369.44 1376.39 1383.33" y="392.00" font-family="Liberation Sans" font-size="11" font-weight="normal" fill="#c8c8c8" text-anchor="middle">5,050</text>
</g><g clip-path="url(#cp2)">
<text transform="scale(0.72,1)" x="1355.56 1362.50 1369.44 1376.39 1383.33" y="401.10" font-family="Liberation Sans" font-size="11" font-weight="normal" fill="#c8c8c8" text-anchor="middle">8,550</text>
<text transform="scale(0.72,1)" x="1355.56 1362.50 1369.44 1376.39 1383.33" y="449.70" font-family="Liberation Sans" font-size="11" font-weight="normal" fill="#c8c8c8" text-anchor="middle">8,500</text>
<text transform="scale(0.72,1)" x="1355.56 1362.50 1369.44 1376.39 1383.33" y="497.90" font-family="Liberation Sans" font-size="11" font-weight="normal" fill="#c8c8c8" text-anchor="middle">8,450</text>
<text transform="scale(0.72,1)" x="1355.56 1362.50 1369.44 1376.39 1383.33" y="546.50" font-family="Liberation Sans" font-size="11" font-weight="normal" fill="#c8c8c8" text-anchor="middle">8,400</text>
</g>
</g>
<rect x="5" y="204" width="1016" height="1" fill="#e0e0e0"/>
<rect x="5" y="205" width="1016" height="1" fill="#f6f6f6"/>
<rect x="5" y="206" width="1016" height="1" fill="#e4e4e4"/>
<rect x="5" y="207" width="1016" height="1" fill="#c4c4c4"/>
<rect x="5" y="208" width="1016" height="1" fill="#9c9c9c"/>
<rect x="5" y="386" width="1016" height="1" fill="#e0e0e0"/>
<rect x="5" y="387" width="1016" height="1" fill="#f6f6f6"/>
<rect x="5" y="388" width="1016" height="1" fill="#e4e4e4"/>
<rect x="5" y="389" width="1016" height="1" fill="#c4c4c4"/>
<rect x="5" y="390" width="1016" height="1" fill="#9c9c9c"/>
<g shape-rendering="auto">
<rect x="974" y="54" width="47" height="17.0" fill="#d8d8d8"/>
<rect x="974" y="54" width="47" height="1" fill="#e4e4e4"/>
<rect x="974" y="70.0" width="47" height="1" fill="#b4b4b4"/>
<text transform="scale(0.78,1)" x="1261.73 1268.53 1275.32 1282.12 1288.91 1295.71" y="64.90" font-family="Liberation Sans" font-size="10.4" font-weight="bold" fill="#141414" text-anchor="middle">13,701</text>
<rect x="974" y="244.5" width="47" height="17.8" fill="#d8d8d8"/>
<rect x="974" y="244.5" width="47" height="1" fill="#e4e4e4"/>
<rect x="974" y="261.3" width="47" height="1" fill="#b4b4b4"/>
<text transform="scale(0.78,1)" x="1264.29 1271.09 1277.88 1284.68 1291.47" y="256.40" font-family="Liberation Sans" font-size="10.4" font-weight="bold" fill="#141414" text-anchor="middle">5,155</text>
<rect x="974" y="398.8" width="47" height="16.6" fill="#d8d8d8"/>
<rect x="974" y="398.8" width="47" height="1" fill="#e4e4e4"/>
<rect x="974" y="414.4" width="47" height="1" fill="#b4b4b4"/>
<text transform="scale(0.78,1)" x="1264.29 1271.09 1277.88 1284.68 1291.47" y="409.80" font-family="Liberation Sans" font-size="10.4" font-weight="bold" fill="#141414" text-anchor="middle">8,546</text>
</g>
</svg></body></html>
